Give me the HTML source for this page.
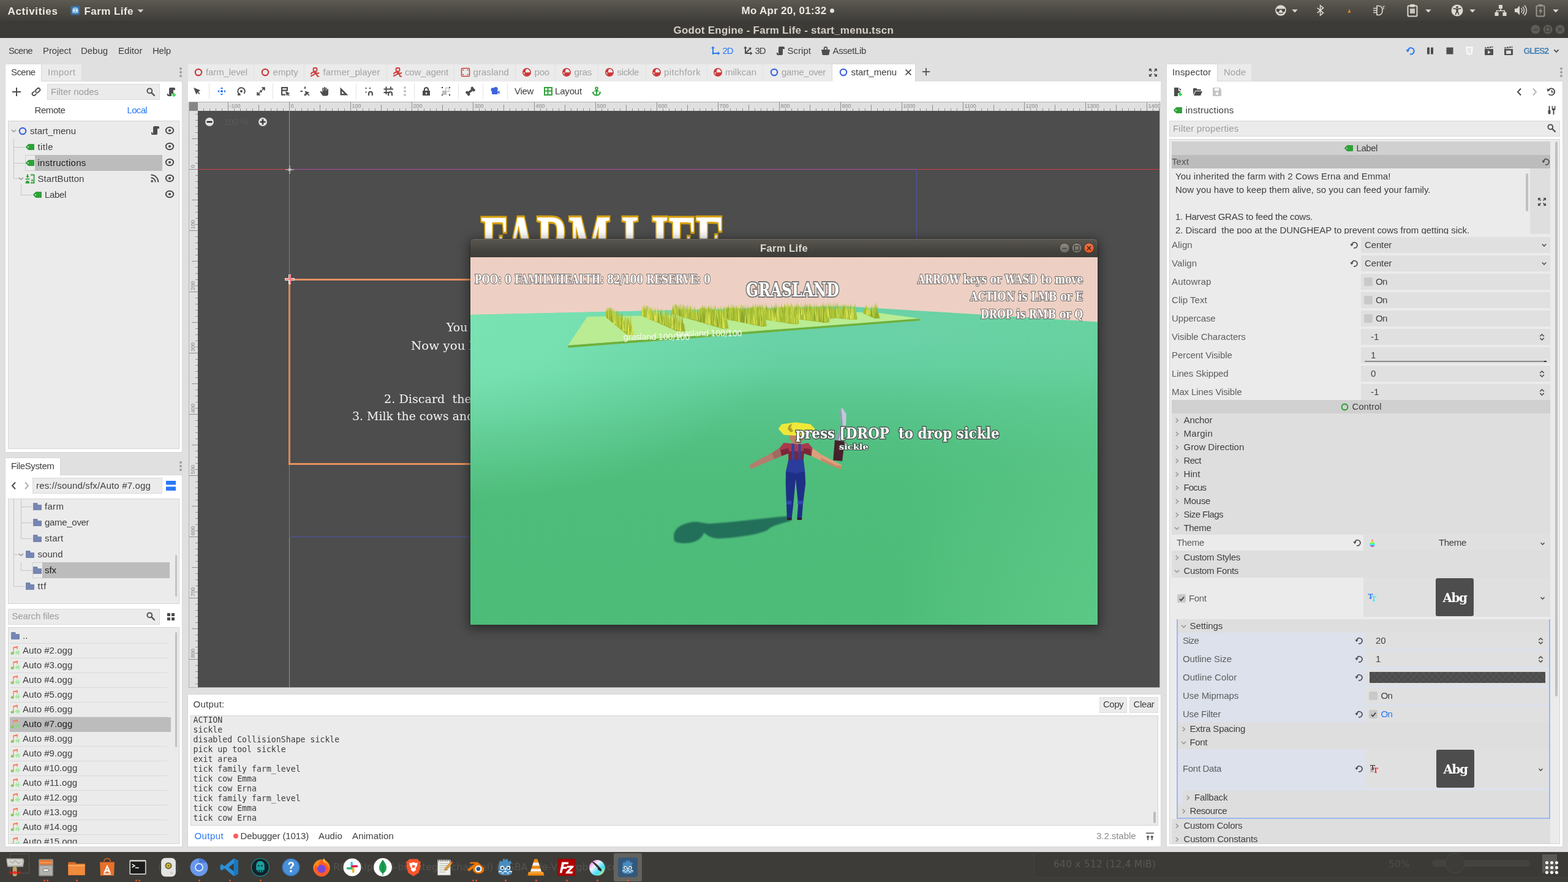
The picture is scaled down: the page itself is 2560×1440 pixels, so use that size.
<!DOCTYPE html>
<html lang="en"><head><meta charset="utf-8"><title>Godot Engine - Farm Life - start_menu.tscn</title><style>html,body{margin:0;padding:0}body{width:2560px;height:1440px;overflow:hidden;position:relative;background:#e0e0e0;font-family:'Liberation Sans',sans-serif;font-size:15px;color:#404040}
div,svg{position:absolute}.t{white-space:pre;line-height:0}</style></head><body><div id="root" style="left:0;top:0;width:2560px;height:1440px;opacity:0.999">
<svg style="left:0;top:0" width="0" height="0"><defs><linearGradient id="ag" x1="0" y1="0" x2="0" y2="1"><stop offset="0" stop-color="#ff6a5a"/><stop offset="0.5" stop-color="#f0b050"/><stop offset="1" stop-color="#4ed860"/></linearGradient></defs></svg>
<div style="left:0px;top:62px;width:2560px;height:1329px;background:#e0e0e0;"></div>
<div class="t" style="left:14px;top:83px;letter-spacing:-0.706px;">Scene</div>
<div class="t" style="left:70px;top:83px;letter-spacing:-0.098px;">Project</div>
<div class="t" style="left:132px;top:83px;letter-spacing:-0.04px;">Debug</div>
<div class="t" style="left:193px;top:83px;letter-spacing:0.053px;">Editor</div>
<div class="t" style="left:249px;top:83px;letter-spacing:-0.212px;">Help</div>
<svg style="left:1160px;top:75px;" width="16" height="16" viewBox="0 0 16 16"><path d="M4 14V3M4 12h10" fill="none" stroke="#2a78f5" stroke-width="2" /><path d="M4 0.5l3 3.5H1zM15.5 12l-3.5 3V9z" fill="#2a78f5" /></svg>
<div class="t" style="left:1179.5px;top:83px;color:#2a78f5;letter-spacing:-1.087px;">2D</div>
<svg style="left:1213px;top:75px;" width="16" height="16" viewBox="0 0 16 16"><path d="M4 13V3M3 12h10M4 12l7-7" fill="none" stroke="#4d4d4d" stroke-width="2" /><path d="M4 0.5l3 3.5H1zM15.5 12l-3.5 3V9zM13.5 2.5l-.5 4.5-4-4z" fill="#4d4d4d" /></svg>
<div class="t" style="left:1232.5px;top:83px;letter-spacing:-1.087px;">3D</div>
<svg style="left:1265.5px;top:75px;" width="16" height="16" viewBox="0 0 16 16"><path d="M6 1v1a1 1 0 0 0-1 1v10H4v-2H2v2a1 1 0 0 0 .5.87A1 1 0 0 0 3 15h7a2 2 0 0 0 2-2V5h3V3a2 2 0 0 0-2-2z" fill="#4d4d4d" /></svg>
<div class="t" style="left:1285.5px;top:83px;letter-spacing:0.026px;">Script</div>
<svg style="left:1339.5px;top:75px;" width="16" height="16" viewBox="0 0 16 16"><path fill-rule="evenodd" d="M8 1a3.2 3.2 0 0 0-3.2 3.2V6H1l1.6 8.2a1 1 0 0 0 1 .8h8.8a1 1 0 0 0 1-.8L15 6h-3.8V4.2A3.2 3.2 0 0 0 8 1zm0 1.8a1.4 1.4 0 0 1 1.4 1.4V6H6.6V4.2A1.4 1.4 0 0 1 8 2.8z" fill="#4d4d4d"/></svg>
<div class="t" style="left:1359.5px;top:83px;letter-spacing:-0.379px;">AssetLib</div>
<svg style="left:2295px;top:75px;" width="16" height="16" viewBox="0 0 16 16"><path d="M3.3 8.4A5.2 5.2 0 1 1 7 13.3" fill="none" stroke="#2a78f5" stroke-width="2"/><path d="M0.2 6.3h6.2l-3.1 4.2z" fill="#2a78f5"/></svg>
<svg style="left:2327px;top:75px;" width="16" height="16" viewBox="0 0 16 16"><path d="M3 2.5h4v11H3zM9 2.5h4v11H9z" fill="#4d4d4d" /></svg>
<svg style="left:2359px;top:75px;" width="16" height="16" viewBox="0 0 16 16"><path d="M2.5 2.5h11v11h-11z" fill="#4d4d4d" /></svg>
<svg style="left:2391px;top:75px;" width="16" height="16" viewBox="0 0 16 16"><path d="M2 1h12l-1.1 12.3L8 15l-4.9-1.7z" fill="#f6f6f6"/><path d="M5 4h6l-.2 1.8H6.8l.1 1.4h3.7l-.4 4.2L8 12l-2.2-.6-.1-1.8h1.5l.1.7.7.2.8-.2.1-1.4H5.4z" fill="#e0e0e0"/></svg>
<svg style="left:2423px;top:75px;" width="16" height="16" viewBox="0 0 16 16"><path d="M1 5h14v9a1 1 0 0 1-1 1H2a1 1 0 0 1-1-1zM1.2 2.2l13-1.6.3 2.2-13 1.6z" fill="#4d4d4d" /><path d="M6 7.5v5.5l5-2.75z" fill="#e0e0e0"/><path d="M3.5 1.9l1.6 1.7M7.5 1.4l1.6 1.7M11.5 0.9l1.6 1.7" stroke="#e0e0e0" stroke-width="1.3"/></svg>
<svg style="left:2455px;top:75px;" width="16" height="16" viewBox="0 0 16 16"><path d="M1 5h14v9a1 1 0 0 1-1 1H2a1 1 0 0 1-1-1zM1.2 2.2l13-1.6.3 2.2-13 1.6z" fill="#4d4d4d" /><rect x="4" y="7.5" width="8" height="5.5" fill="#e0e0e0"/><path d="M3.5 1.9l1.6 1.7M7.5 1.4l1.6 1.7M11.5 0.9l1.6 1.7" stroke="#e0e0e0" stroke-width="1.3"/></svg>
<div class="t" style="left:2487.5px;top:83px;font-size:14px;color:#4b87b8;font-weight:700;letter-spacing:-1.081px;">GLES2</div>
<svg style="left:2533px;top:75px;" width="16" height="16" viewBox="0 0 16 16"><path d="M4.3 6.2l3.7 3.8 3.7-3.8" fill="none" stroke="#4d4d4d" stroke-width="1.8" /></svg>
<div style="left:68px;top:105px;width:65px;height:28px;background:#ebebeb;"></div>
<div style="left:9px;top:105px;width:58px;height:28px;background:#fff;box-shadow:0 0 0 1px #d8d8d8"></div>
<div style="left:9px;top:133px;width:288px;height:605px;background:#fff;box-shadow:0 0 0 1px #d8d8d8"></div>
<div style="left:9px;top:130px;width:58px;height:6px;background:#fff;"></div>
<div class="t" style="left:18px;top:118px;letter-spacing:-0.606px;">Scene</div>
<div class="t" style="left:78px;top:118px;color:#a3a3a3;letter-spacing:0.499px;">Import</div>
<svg style="left:287px;top:110px;" width="16" height="16" viewBox="0 0 16 16"><circle cx="8" cy="2" r="2" fill="#9e9e9e"/><circle cx="8" cy="8" r="2" fill="#9e9e9e"/><circle cx="8" cy="14" r="2" fill="#9e9e9e"/></svg>
<svg style="left:19px;top:142px;" width="16" height="16" viewBox="0 0 16 16"><path d="M7 1v6H1v2h6v6h2V9h6V7H9V1z" fill="#4d4d4d" /></svg>
<svg style="left:51px;top:142px;" width="16" height="16" viewBox="0 0 16 16"><g transform="rotate(-42 8 8)" fill="none"><rect x="0.4" y="5.3" width="8.6" height="5.4" rx="2.7" stroke="#4d4d4d" stroke-width="1.9"/><rect x="7" y="5.3" width="8.6" height="5.4" rx="2.7" stroke="#fff" stroke-width="3.8"/><rect x="7" y="5.3" width="8.6" height="5.4" rx="2.7" stroke="#4d4d4d" stroke-width="1.9"/><path d="M2.5 8h5" stroke="#fff" stroke-width="1.2"/></g></svg>
<div style="left:77px;top:137px;width:184px;height:26px;background:#ebebeb;border:1px solid #dadada;box-sizing:border-box"></div>
<div class="t" style="left:83px;top:150px;color:#9c9c9c;letter-spacing:-0.03px;">Filter nodes</div>
<svg style="left:238px;top:142px;" width="16" height="16" viewBox="0 0 16 16"><circle cx="6.3" cy="6.3" r="3.9" fill="none" stroke="#555" stroke-width="2"/><path d="M9.3 9.3l4.6 4.6" stroke="#555" stroke-width="2.4" stroke-linecap="round"/></svg>
<svg style="left:271px;top:142px;" width="16" height="16" viewBox="0 0 16 16"><path d="M6 1v1a1 1 0 0 0-1 1v10H4v-2H2v2a1 1 0 0 0 .5.87A1 1 0 0 0 3 15h6v-4h3V5h3V3a2 2 0 0 0-2-2z" fill="#4d4d4d" /><path d="M12 10v2h-2v2h2v2h2v-2h2v-2h-2v-2z" fill="#2fd24a" /></svg>
<div class="t" style="left:56.5px;top:180px;letter-spacing:-0.42px;">Remote</div>
<div class="t" style="left:207.5px;top:180px;color:#2a78f5;letter-spacing:-0.671px;">Local</div>
<div style="left:13px;top:197px;width:280px;height:536px;background:#ebebeb;border:1px solid #d4d4d4;box-sizing:border-box"></div>
<div style="left:22px;top:227px;width:1px;height:65px;background:#c6c6c6;"></div>
<div style="left:22px;top:240px;width:19px;height:1px;background:#c6c6c6;"></div>
<div style="left:22px;top:266px;width:19px;height:1px;background:#c6c6c6;"></div>
<div style="left:22px;top:291px;width:10px;height:1px;background:#c6c6c6;"></div>
<div style="left:34px;top:301px;width:1px;height:18px;background:#c6c6c6;"></div>
<div style="left:34px;top:318px;width:19px;height:1px;background:#c6c6c6;"></div>
<svg style="left:15px;top:205.5px;" width="15" height="15" viewBox="0 0 16 16"><path d="M4.3 6.2l3.7 3.8 3.7-3.8" fill="none" stroke="#a2a2a2" stroke-width="1.8" /></svg>
<svg style="left:29px;top:205.5px;" width="16" height="16" viewBox="0 0 16 16"><circle cx="8" cy="8" r="5.2" fill="none" stroke="#3d64dd" stroke-width="2.2"/></svg>
<div class="t" style="left:49px;top:214px;">start_menu</div>
<svg style="left:244.5px;top:205px;" width="16" height="16" viewBox="0 0 16 16"><path d="M6 1v1a1 1 0 0 0-1 1v10H4v-2H2v2a1 1 0 0 0 .5.87A1 1 0 0 0 3 15h7a2 2 0 0 0 2-2V5h3V3a2 2 0 0 0-2-2z" fill="#4d4d4d" /></svg>
<svg style="left:269px;top:205px;" width="16" height="16" viewBox="0 0 16 16"><ellipse cx="8" cy="8" rx="6.2" ry="5.2" fill="none" stroke="#4d4d4d" stroke-width="2"/><circle cx="8" cy="8" r="2.1" fill="#4d4d4d"/></svg>
<svg style="left:41px;top:231.5px;" width="16" height="16" viewBox="0 0 16 16"><path fill-rule="evenodd" d="M6 3a1 1 0 0 0-.7.3l-4 4a1 1 0 0 0 0 1.4l4 4a1 1 0 0 0 .7.3h8a1 1 0 0 0 1-1V4a1 1 0 0 0-1-1zM5 7a1 1 0 0 1 0 2a1 1 0 0 1 0-2z" fill="#2fa139"/></svg>
<div class="t" style="left:61.5px;top:240px;letter-spacing:0.432px;">title</div>
<svg style="left:269px;top:231px;" width="16" height="16" viewBox="0 0 16 16"><ellipse cx="8" cy="8" rx="6.2" ry="5.2" fill="none" stroke="#4d4d4d" stroke-width="2"/><circle cx="8" cy="8" r="2.1" fill="#4d4d4d"/></svg>
<div style="left:41px;top:253px;width:224px;height:25.5px;background:#bcbcbc;"></div>
<div style="left:41px;top:253px;width:16px;height:25.5px;background:#ebebeb;border:1px solid #cfcfcf;border-right:none;box-sizing:border-box"></div>
<svg style="left:41px;top:257.5px;" width="16" height="16" viewBox="0 0 16 16"><path fill-rule="evenodd" d="M6 3a1 1 0 0 0-.7.3l-4 4a1 1 0 0 0 0 1.4l4 4a1 1 0 0 0 .7.3h8a1 1 0 0 0 1-1V4a1 1 0 0 0-1-1zM5 7a1 1 0 0 1 0 2a1 1 0 0 1 0-2z" fill="#2fa139"/></svg>
<div class="t" style="left:61.5px;top:266px;color:#1c1c1c;letter-spacing:0.262px;">instructions</div>
<svg style="left:269px;top:257px;" width="16" height="16" viewBox="0 0 16 16"><ellipse cx="8" cy="8" rx="6.2" ry="5.2" fill="none" stroke="#4d4d4d" stroke-width="2"/><circle cx="8" cy="8" r="2.1" fill="#4d4d4d"/></svg>
<svg style="left:27px;top:283.5px;" width="15" height="15" viewBox="0 0 16 16"><path d="M4.3 6.2l3.7 3.8 3.7-3.8" fill="none" stroke="#a2a2a2" stroke-width="1.8" /></svg>
<svg style="left:41px;top:283.5px;" width="16" height="16" viewBox="0 0 16 16"><path d="M3 0.5h2v3h2l-3 3.2-3-3.2h2zM0.5 7.6h7v1.6h-7zM0.5 15.5c0-3 1.2-4.4 3.4-4.4s3.4 1.4 3.4 4.4z" fill="#2fa139" /><path d="M9 1.5h5.5v13H9" fill="none" stroke="#2fa139" stroke-width="1.8" /><path d="M9.2 11.6l2.3-3.4 2.3 3.4z" fill="#2fa139" /></svg>
<div class="t" style="left:61.5px;top:292px;letter-spacing:0.087px;">StartButton</div>
<svg style="left:244.5px;top:283px;" width="16" height="16" viewBox="0 0 16 16"><circle cx="3.2" cy="12.8" r="1.9" fill="#4d4d4d"/><path d="M1.5 7.2a7.3 7.3 0 0 1 7.3 7.3M1.5 2.6a11.9 11.9 0 0 1 11.9 11.9" fill="none" stroke="#4d4d4d" stroke-width="2" /></svg>
<svg style="left:269px;top:283px;" width="16" height="16" viewBox="0 0 16 16"><ellipse cx="8" cy="8" rx="6.2" ry="5.2" fill="none" stroke="#4d4d4d" stroke-width="2"/><circle cx="8" cy="8" r="2.1" fill="#4d4d4d"/></svg>
<svg style="left:53px;top:309.5px;" width="16" height="16" viewBox="0 0 16 16"><path fill-rule="evenodd" d="M6 3a1 1 0 0 0-.7.3l-4 4a1 1 0 0 0 0 1.4l4 4a1 1 0 0 0 .7.3h8a1 1 0 0 0 1-1V4a1 1 0 0 0-1-1zM5 7a1 1 0 0 1 0 2a1 1 0 0 1 0-2z" fill="#2fa139"/></svg>
<div class="t" style="left:73px;top:318px;letter-spacing:-0.34px;">Label</div>
<svg style="left:269px;top:309px;" width="16" height="16" viewBox="0 0 16 16"><ellipse cx="8" cy="8" rx="6.2" ry="5.2" fill="none" stroke="#4d4d4d" stroke-width="2"/><circle cx="8" cy="8" r="2.1" fill="#4d4d4d"/></svg>
<div style="left:9px;top:748px;width:89px;height:28px;background:#fff;box-shadow:0 0 0 1px #d8d8d8"></div>
<div style="left:9px;top:776px;width:288px;height:606px;background:#fff;box-shadow:0 0 0 1px #d8d8d8"></div>
<div style="left:9px;top:773px;width:89px;height:6px;background:#fff;"></div>
<div class="t" style="left:18px;top:761px;letter-spacing:-0.368px;">FileSystem</div>
<svg style="left:287px;top:753px;" width="16" height="16" viewBox="0 0 16 16"><circle cx="8" cy="2" r="2" fill="#9e9e9e"/><circle cx="8" cy="8" r="2" fill="#9e9e9e"/><circle cx="8" cy="14" r="2" fill="#9e9e9e"/></svg>
<svg style="left:15px;top:785px;" width="16" height="16" viewBox="0 0 16 16"><path d="M10 2.5L5 8l5 5.5" fill="none" stroke="#4d4d4d" stroke-width="2" /></svg>
<svg style="left:34.5px;top:785px;" width="16" height="16" viewBox="0 0 16 16"><path d="M6 2.5l5 5.5-5 5.5" fill="none" stroke="#b0b0b0" stroke-width="2" /></svg>
<div style="left:53px;top:780px;width:211.5px;height:26px;background:#ebebeb;border:1px solid #dadada;box-sizing:border-box"></div>
<div class="t" style="left:59px;top:793px;letter-spacing:0.163px;">res://sound/sfx/Auto #7.ogg</div>
<svg style="left:271px;top:785px;" width="16" height="16" viewBox="0 0 16 16"><path d="M0 0h16v6.5H0zM0 9.5h16V16H0z" fill="#2a78f5" /></svg>
<div style="left:13px;top:814px;width:280px;height:171.5px;background:#ebebeb;border:1px solid #d4d4d4;box-sizing:border-box"></div>
<div style="left:22px;top:815px;width:1px;height:142px;background:#c6c6c6;"></div>
<div style="left:34px;top:815px;width:1px;height:64px;background:#c6c6c6;"></div>
<div style="left:34px;top:827px;width:19px;height:1px;background:#c6c6c6;"></div>
<div style="left:34px;top:853px;width:19px;height:1px;background:#c6c6c6;"></div>
<div style="left:34px;top:879px;width:19px;height:1px;background:#c6c6c6;"></div>
<div style="left:22px;top:905px;width:10px;height:1px;background:#c6c6c6;"></div>
<div style="left:34px;top:918px;width:1px;height:13px;background:#c6c6c6;"></div>
<div style="left:34px;top:931px;width:19px;height:1px;background:#c6c6c6;"></div>
<div style="left:22px;top:957px;width:19px;height:1px;background:#c6c6c6;"></div>
<svg style="left:53px;top:819px;" width="16" height="16" viewBox="0 0 16 16"><path d="M2 2a1 1 0 0 0-1 1v10a1 1 0 0 0 1 1h12a1 1 0 0 0 1-1V6a1 1 0 0 0-1-1H9.5a1 1 0 0 1-1-1V3a1 1 0 0 0-1-1z" fill="#7686b2" /></svg>
<div class="t" style="left:73px;top:827px;letter-spacing:0.301px;">farm</div>
<svg style="left:53px;top:845px;" width="16" height="16" viewBox="0 0 16 16"><path d="M2 2a1 1 0 0 0-1 1v10a1 1 0 0 0 1 1h12a1 1 0 0 0 1-1V6a1 1 0 0 0-1-1H9.5a1 1 0 0 1-1-1V3a1 1 0 0 0-1-1z" fill="#7686b2" /></svg>
<div class="t" style="left:73px;top:853px;letter-spacing:-0.304px;">game_over</div>
<svg style="left:53px;top:871px;" width="16" height="16" viewBox="0 0 16 16"><path d="M2 2a1 1 0 0 0-1 1v10a1 1 0 0 0 1 1h12a1 1 0 0 0 1-1V6a1 1 0 0 0-1-1H9.5a1 1 0 0 1-1-1V3a1 1 0 0 0-1-1z" fill="#7686b2" /></svg>
<div class="t" style="left:73px;top:879px;letter-spacing:0.266px;">start</div>
<svg style="left:27px;top:897.5px;" width="15" height="15" viewBox="0 0 16 16"><path d="M4.3 6.2l3.7 3.8 3.7-3.8" fill="none" stroke="#a2a2a2" stroke-width="1.8" /></svg>
<svg style="left:41px;top:897px;" width="16" height="16" viewBox="0 0 16 16"><path d="M2 2a1 1 0 0 0-1 1v10a1 1 0 0 0 1 1h12a1 1 0 0 0 1-1V6a1 1 0 0 0-1-1H9.5a1 1 0 0 1-1-1V3a1 1 0 0 0-1-1z" fill="#7686b2" /></svg>
<div class="t" style="left:61.5px;top:905px;letter-spacing:0.027px;">sound</div>
<div style="left:53px;top:918px;width:224px;height:26px;background:#bcbcbc;"></div>
<div style="left:53px;top:918px;width:16px;height:26px;background:#ebebeb;border:1px solid #cfcfcf;border-right:none;box-sizing:border-box"></div>
<svg style="left:53px;top:923px;" width="16" height="16" viewBox="0 0 16 16"><path d="M2 2a1 1 0 0 0-1 1v10a1 1 0 0 0 1 1h12a1 1 0 0 0 1-1V6a1 1 0 0 0-1-1H9.5a1 1 0 0 1-1-1V3a1 1 0 0 0-1-1z" fill="#7686b2" /></svg>
<div class="t" style="left:73px;top:931px;color:#1c1c1c;letter-spacing:-0.056px;">sfx</div>
<svg style="left:41px;top:949px;" width="16" height="16" viewBox="0 0 16 16"><path d="M2 2a1 1 0 0 0-1 1v10a1 1 0 0 0 1 1h12a1 1 0 0 0 1-1V6a1 1 0 0 0-1-1H9.5a1 1 0 0 1-1-1V3a1 1 0 0 0-1-1z" fill="#7686b2" /></svg>
<div class="t" style="left:61.5px;top:957px;letter-spacing:0.666px;">ttf</div>
<div style="left:285.5px;top:906px;width:3.5px;height:68px;background:#c2c2c2;border-radius:2px"></div>
<div style="left:13px;top:994px;width:248px;height:26px;background:#ebebeb;border:1px solid #dadada;box-sizing:border-box"></div>
<div class="t" style="left:19.5px;top:1006px;color:#9c9c9c;letter-spacing:-0.155px;">Search files</div>
<svg style="left:238px;top:998px;" width="16" height="16" viewBox="0 0 16 16"><circle cx="6.3" cy="6.3" r="3.9" fill="none" stroke="#555" stroke-width="2"/><path d="M9.3 9.3l4.6 4.6" stroke="#555" stroke-width="2.4" stroke-linecap="round"/></svg>
<svg style="left:271px;top:998.5px;" width="16" height="16" viewBox="0 0 16 16"><path d="M2 2h5v5H2zM9 2h5v5H9zM2 9h5v5H2zM9 9h5v5H9z" fill="#4d4d4d" /></svg>
<div style="left:13px;top:1024px;width:280px;height:353.5px;background:#ebebeb;border:1px solid #d4d4d4;box-sizing:border-box;overflow:hidden">
<svg style="left:3px;top:4.5px;" width="16" height="16" viewBox="0 0 16 16"><path d="M2 2a1 1 0 0 0-1 1v10a1 1 0 0 0 1 1h12a1 1 0 0 0 1-1V6a1 1 0 0 0-1-1H9.5a1 1 0 0 1-1-1V3a1 1 0 0 0-1-1z" fill="#7686b2" /></svg>
<div class="t" style="left:23px;top:13px;">..</div>
<div style="left:3px;top:25px;width:256px;height:1px;background:#d9d9d9;"></div>
<div style="left:3px;top:49px;width:256px;height:1px;background:#d9d9d9;"></div>
<div style="left:3px;top:73px;width:256px;height:1px;background:#d9d9d9;"></div>
<div style="left:3px;top:97px;width:256px;height:1px;background:#d9d9d9;"></div>
<div style="left:3px;top:121px;width:256px;height:1px;background:#d9d9d9;"></div>
<div style="left:3px;top:145px;width:256px;height:1px;background:#d9d9d9;"></div>
<div style="left:3px;top:169px;width:256px;height:1px;background:#d9d9d9;"></div>
<div style="left:3px;top:193px;width:256px;height:1px;background:#d9d9d9;"></div>
<div style="left:3px;top:217px;width:256px;height:1px;background:#d9d9d9;"></div>
<div style="left:3px;top:241px;width:256px;height:1px;background:#d9d9d9;"></div>
<div style="left:3px;top:265px;width:256px;height:1px;background:#d9d9d9;"></div>
<div style="left:3px;top:289px;width:256px;height:1px;background:#d9d9d9;"></div>
<div style="left:3px;top:313px;width:256px;height:1px;background:#d9d9d9;"></div>
<div style="left:3px;top:337px;width:256px;height:1px;background:#d9d9d9;"></div>
<div style="left:2px;top:146px;width:263px;height:24px;background:#bcbcbc;"></div>
<svg style="left:3px;top:28.5px;" width="16" height="16" viewBox="0 0 16 16"><path d="M4.2 2.4L12 0.8v5.4h-1.6V3.4L5.8 4.4v8.2a2.6 2.2 0 1 1-1.6-2z" fill="url(#ag)"/><path d="M8.3 10.8v1.6M10 8.4v6M11.7 9.8v3.4M13.4 7.6v7.6M15.1 10.6v1.8" stroke="#7ce07c" stroke-width="1"/></svg>
<div class="t" style="left:23px;top:37px;letter-spacing:0.037px;">Auto #2.ogg</div>
<svg style="left:3px;top:52.5px;" width="16" height="16" viewBox="0 0 16 16"><path d="M4.2 2.4L12 0.8v5.4h-1.6V3.4L5.8 4.4v8.2a2.6 2.2 0 1 1-1.6-2z" fill="url(#ag)"/><path d="M8.3 10.8v1.6M10 8.4v6M11.7 9.8v3.4M13.4 7.6v7.6M15.1 10.6v1.8" stroke="#7ce07c" stroke-width="1"/></svg>
<div class="t" style="left:23px;top:61px;letter-spacing:0.037px;">Auto #3.ogg</div>
<svg style="left:3px;top:76.5px;" width="16" height="16" viewBox="0 0 16 16"><path d="M4.2 2.4L12 0.8v5.4h-1.6V3.4L5.8 4.4v8.2a2.6 2.2 0 1 1-1.6-2z" fill="url(#ag)"/><path d="M8.3 10.8v1.6M10 8.4v6M11.7 9.8v3.4M13.4 7.6v7.6M15.1 10.6v1.8" stroke="#7ce07c" stroke-width="1"/></svg>
<div class="t" style="left:23px;top:85px;letter-spacing:0.037px;">Auto #4.ogg</div>
<svg style="left:3px;top:100.5px;" width="16" height="16" viewBox="0 0 16 16"><path d="M4.2 2.4L12 0.8v5.4h-1.6V3.4L5.8 4.4v8.2a2.6 2.2 0 1 1-1.6-2z" fill="url(#ag)"/><path d="M8.3 10.8v1.6M10 8.4v6M11.7 9.8v3.4M13.4 7.6v7.6M15.1 10.6v1.8" stroke="#7ce07c" stroke-width="1"/></svg>
<div class="t" style="left:23px;top:109px;letter-spacing:0.037px;">Auto #5.ogg</div>
<svg style="left:3px;top:124.5px;" width="16" height="16" viewBox="0 0 16 16"><path d="M4.2 2.4L12 0.8v5.4h-1.6V3.4L5.8 4.4v8.2a2.6 2.2 0 1 1-1.6-2z" fill="url(#ag)"/><path d="M8.3 10.8v1.6M10 8.4v6M11.7 9.8v3.4M13.4 7.6v7.6M15.1 10.6v1.8" stroke="#7ce07c" stroke-width="1"/></svg>
<div class="t" style="left:23px;top:133px;letter-spacing:0.037px;">Auto #6.ogg</div>
<svg style="left:3px;top:148.5px;" width="16" height="16" viewBox="0 0 16 16"><path d="M4.2 2.4L12 0.8v5.4h-1.6V3.4L5.8 4.4v8.2a2.6 2.2 0 1 1-1.6-2z" fill="url(#ag)"/><path d="M8.3 10.8v1.6M10 8.4v6M11.7 9.8v3.4M13.4 7.6v7.6M15.1 10.6v1.8" stroke="#7ce07c" stroke-width="1"/></svg>
<div class="t" style="left:23px;top:157px;color:#1c1c1c;letter-spacing:0.037px;">Auto #7.ogg</div>
<svg style="left:3px;top:172.5px;" width="16" height="16" viewBox="0 0 16 16"><path d="M4.2 2.4L12 0.8v5.4h-1.6V3.4L5.8 4.4v8.2a2.6 2.2 0 1 1-1.6-2z" fill="url(#ag)"/><path d="M8.3 10.8v1.6M10 8.4v6M11.7 9.8v3.4M13.4 7.6v7.6M15.1 10.6v1.8" stroke="#7ce07c" stroke-width="1"/></svg>
<div class="t" style="left:23px;top:181px;letter-spacing:0.037px;">Auto #8.ogg</div>
<svg style="left:3px;top:196.5px;" width="16" height="16" viewBox="0 0 16 16"><path d="M4.2 2.4L12 0.8v5.4h-1.6V3.4L5.8 4.4v8.2a2.6 2.2 0 1 1-1.6-2z" fill="url(#ag)"/><path d="M8.3 10.8v1.6M10 8.4v6M11.7 9.8v3.4M13.4 7.6v7.6M15.1 10.6v1.8" stroke="#7ce07c" stroke-width="1"/></svg>
<div class="t" style="left:23px;top:205px;letter-spacing:0.037px;">Auto #9.ogg</div>
<svg style="left:3px;top:220.5px;" width="16" height="16" viewBox="0 0 16 16"><path d="M4.2 2.4L12 0.8v5.4h-1.6V3.4L5.8 4.4v8.2a2.6 2.2 0 1 1-1.6-2z" fill="url(#ag)"/><path d="M8.3 10.8v1.6M10 8.4v6M11.7 9.8v3.4M13.4 7.6v7.6M15.1 10.6v1.8" stroke="#7ce07c" stroke-width="1"/></svg>
<div class="t" style="left:23px;top:229px;letter-spacing:0.005px;">Auto #10.ogg</div>
<svg style="left:3px;top:244.5px;" width="16" height="16" viewBox="0 0 16 16"><path d="M4.2 2.4L12 0.8v5.4h-1.6V3.4L5.8 4.4v8.2a2.6 2.2 0 1 1-1.6-2z" fill="url(#ag)"/><path d="M8.3 10.8v1.6M10 8.4v6M11.7 9.8v3.4M13.4 7.6v7.6M15.1 10.6v1.8" stroke="#7ce07c" stroke-width="1"/></svg>
<div class="t" style="left:23px;top:253px;letter-spacing:0.098px;">Auto #11.ogg</div>
<svg style="left:3px;top:268.5px;" width="16" height="16" viewBox="0 0 16 16"><path d="M4.2 2.4L12 0.8v5.4h-1.6V3.4L5.8 4.4v8.2a2.6 2.2 0 1 1-1.6-2z" fill="url(#ag)"/><path d="M8.3 10.8v1.6M10 8.4v6M11.7 9.8v3.4M13.4 7.6v7.6M15.1 10.6v1.8" stroke="#7ce07c" stroke-width="1"/></svg>
<div class="t" style="left:23px;top:277px;letter-spacing:0.005px;">Auto #12.ogg</div>
<svg style="left:3px;top:292.5px;" width="16" height="16" viewBox="0 0 16 16"><path d="M4.2 2.4L12 0.8v5.4h-1.6V3.4L5.8 4.4v8.2a2.6 2.2 0 1 1-1.6-2z" fill="url(#ag)"/><path d="M8.3 10.8v1.6M10 8.4v6M11.7 9.8v3.4M13.4 7.6v7.6M15.1 10.6v1.8" stroke="#7ce07c" stroke-width="1"/></svg>
<div class="t" style="left:23px;top:301px;letter-spacing:0.005px;">Auto #13.ogg</div>
<svg style="left:3px;top:316.5px;" width="16" height="16" viewBox="0 0 16 16"><path d="M4.2 2.4L12 0.8v5.4h-1.6V3.4L5.8 4.4v8.2a2.6 2.2 0 1 1-1.6-2z" fill="url(#ag)"/><path d="M8.3 10.8v1.6M10 8.4v6M11.7 9.8v3.4M13.4 7.6v7.6M15.1 10.6v1.8" stroke="#7ce07c" stroke-width="1"/></svg>
<div class="t" style="left:23px;top:325px;letter-spacing:0.005px;">Auto #14.ogg</div>
<svg style="left:3px;top:340.5px;" width="16" height="16" viewBox="0 0 16 16"><path d="M4.2 2.4L12 0.8v5.4h-1.6V3.4L5.8 4.4v8.2a2.6 2.2 0 1 1-1.6-2z" fill="url(#ag)"/><path d="M8.3 10.8v1.6M10 8.4v6M11.7 9.8v3.4M13.4 7.6v7.6M15.1 10.6v1.8" stroke="#7ce07c" stroke-width="1"/></svg>
<div class="t" style="left:23px;top:349px;letter-spacing:0.005px;">Auto #15.ogg</div>
<div style="left:271.5px;top:7px;width:3.5px;height:188px;background:#bfbfbf;border-radius:2px"></div>
</div>
<div style="left:307px;top:105px;width:107px;height:28px;background:#ebebeb;"></div>
<svg style="left:316px;top:110px;" width="16" height="16" viewBox="0 0 16 16"><circle cx="8" cy="8" r="5.2" fill="none" stroke="#cd3838" stroke-width="2.2"/></svg>
<div class="t" style="left:336px;top:118px;color:#a3a3a3;letter-spacing:-0.119px;">farm_level</div>
<div style="left:415px;top:105px;width:81px;height:28px;background:#ebebeb;"></div>
<svg style="left:425px;top:110px;" width="16" height="16" viewBox="0 0 16 16"><circle cx="8" cy="8" r="5.2" fill="none" stroke="#cd3838" stroke-width="2.2"/></svg>
<div class="t" style="left:445.5px;top:118px;color:#a3a3a3;letter-spacing:0.131px;">empty</div>
<div style="left:497px;top:105px;width:134px;height:28px;background:#ebebeb;"></div>
<svg style="left:506px;top:110px;" width="16" height="16" viewBox="0 0 16 16"><rect x="5.6" y="1" width="5.8" height="5.4" rx="1.3" fill="none" stroke="#cd3838" stroke-width="1.9"/><path d="M8.3 6.6v3.6M8 7.8L3.4 8.4 1.8 10.6M8.6 7.8l3 2 2.8-.600M8.3 10.2L5.4 12.4l-3.6 1.8M8.3 10.2l3.2 1.8.600 2.6h2.4" fill="none" stroke="#cd3838" stroke-width="1.9" stroke-linecap="round" stroke-linejoin="round"/></svg>
<div class="t" style="left:527.5px;top:118px;color:#a3a3a3;letter-spacing:0.036px;">farmer_player</div>
<div style="left:632px;top:105px;width:109px;height:28px;background:#ebebeb;"></div>
<svg style="left:641px;top:110px;" width="16" height="16" viewBox="0 0 16 16"><rect x="5.6" y="1" width="5.8" height="5.4" rx="1.3" fill="none" stroke="#cd3838" stroke-width="1.9"/><path d="M8.3 6.6v3.6M8 7.8L3.4 8.4 1.8 10.6M8.6 7.8l3 2 2.8-.600M8.3 10.2L5.4 12.4l-3.6 1.8M8.3 10.2l3.2 1.8.600 2.6h2.4" fill="none" stroke="#cd3838" stroke-width="1.9" stroke-linecap="round" stroke-linejoin="round"/></svg>
<div class="t" style="left:661px;top:118px;color:#a3a3a3;letter-spacing:-0.172px;">cow_agent</div>
<div style="left:742px;top:105px;width:99px;height:28px;background:#ebebeb;"></div>
<svg style="left:752px;top:110px;" width="16" height="16" viewBox="0 0 16 16"><rect x="1.5" y="1.5" width="13" height="13" rx="1.6" fill="none" stroke="#cd3838" stroke-width="1.5"/><path d="M3.5 3.5h1.8v1.8H3.5zM10.7 3.5h1.8v1.8h-1.8zM3.5 10.7h1.8v1.8H3.5zM10.7 10.7h1.8v1.8h-1.8z" fill="#cd3838" /></svg>
<div class="t" style="left:772.5px;top:118px;color:#a3a3a3;letter-spacing:0.121px;">grasland</div>
<div style="left:842px;top:105px;width:64px;height:28px;background:#ebebeb;"></div>
<svg style="left:852px;top:110px;" width="16" height="16" viewBox="0 0 16 16"><circle cx="8" cy="8" r="6.2" fill="none" stroke="#cd3838" stroke-width="1.6"/><path d="M8.5 1.8A6.2 6.2 0 0 0 1.8 8H6C5.6 5.6 6.6 3.2 8.5 1.8zM4.2 8.2H14.2A6.2 6.2 0 0 1 6 13.9C4.6 12.4 4 10.2 4.2 8.2z" fill="#cd3838" /></svg>
<div class="t" style="left:872.5px;top:118px;color:#a3a3a3;letter-spacing:-0.175px;">poo</div>
<div style="left:907px;top:105px;width:69px;height:28px;background:#ebebeb;"></div>
<svg style="left:917px;top:110px;" width="16" height="16" viewBox="0 0 16 16"><circle cx="8" cy="8" r="6.2" fill="none" stroke="#cd3838" stroke-width="1.6"/><path d="M8.5 1.8A6.2 6.2 0 0 0 1.8 8H6C5.6 5.6 6.6 3.2 8.5 1.8zM4.2 8.2H14.2A6.2 6.2 0 0 1 6 13.9C4.6 12.4 4 10.2 4.2 8.2z" fill="#cd3838" /></svg>
<div class="t" style="left:937.5px;top:118px;color:#a3a3a3;letter-spacing:-0.169px;">gras</div>
<div style="left:977px;top:105px;width:77px;height:28px;background:#ebebeb;"></div>
<svg style="left:987px;top:110px;" width="16" height="16" viewBox="0 0 16 16"><circle cx="8" cy="8" r="6.2" fill="none" stroke="#cd3838" stroke-width="1.6"/><path d="M8.5 1.8A6.2 6.2 0 0 0 1.8 8H6C5.6 5.6 6.6 3.2 8.5 1.8zM4.2 8.2H14.2A6.2 6.2 0 0 1 6 13.9C4.6 12.4 4 10.2 4.2 8.2z" fill="#cd3838" /></svg>
<div class="t" style="left:1007.5px;top:118px;color:#a3a3a3;letter-spacing:-0.335px;">sickle</div>
<div style="left:1055px;top:105px;width:99px;height:28px;background:#ebebeb;"></div>
<svg style="left:1064px;top:110px;" width="16" height="16" viewBox="0 0 16 16"><circle cx="8" cy="8" r="6.2" fill="none" stroke="#cd3838" stroke-width="1.6"/><path d="M8.5 1.8A6.2 6.2 0 0 0 1.8 8H6C5.6 5.6 6.6 3.2 8.5 1.8zM4.2 8.2H14.2A6.2 6.2 0 0 1 6 13.9C4.6 12.4 4 10.2 4.2 8.2z" fill="#cd3838" /></svg>
<div class="t" style="left:1084px;top:118px;color:#a3a3a3;letter-spacing:0.368px;">pitchfork</div>
<div style="left:1155px;top:105px;width:90px;height:28px;background:#ebebeb;"></div>
<svg style="left:1164px;top:110px;" width="16" height="16" viewBox="0 0 16 16"><circle cx="8" cy="8" r="6.2" fill="none" stroke="#cd3838" stroke-width="1.6"/><path d="M8.5 1.8A6.2 6.2 0 0 0 1.8 8H6C5.6 5.6 6.6 3.2 8.5 1.8zM4.2 8.2H14.2A6.2 6.2 0 0 1 6 13.9C4.6 12.4 4 10.2 4.2 8.2z" fill="#cd3838" /></svg>
<div class="t" style="left:1184px;top:118px;color:#a3a3a3;letter-spacing:0.022px;">milkcan</div>
<div style="left:1246px;top:105px;width:112.5px;height:28px;background:#ebebeb;"></div>
<svg style="left:1256px;top:110px;" width="16" height="16" viewBox="0 0 16 16"><circle cx="8" cy="8" r="5.2" fill="none" stroke="#3d64dd" stroke-width="2.2"/></svg>
<div class="t" style="left:1276px;top:118px;color:#a3a3a3;letter-spacing:-0.337px;">game_over</div>
<div style="left:1359px;top:105px;width:135px;height:28px;background:#fff;box-shadow:0 0 0 1px #d8d8d8"></div>
<div style="left:1359px;top:130px;width:135px;height:6px;background:#fff;"></div>
<svg style="left:1369px;top:110px;" width="16" height="16" viewBox="0 0 16 16"><circle cx="8" cy="8" r="5.2" fill="none" stroke="#3d64dd" stroke-width="2.2"/></svg>
<div class="t" style="left:1389.5px;top:118px;letter-spacing:-0.053px;">start_menu</div>
<svg style="left:1476px;top:111px;" width="14" height="14" viewBox="0 0 16 16"><path d="M3 3l10 10M13 3L3 13" fill="none" stroke="#4d4d4d" stroke-width="2" /></svg>
<svg style="left:1505px;top:110px;" width="14" height="14" viewBox="0 0 16 16"><path d="M7 1v6H1v2h6v6h2V9h6V7H9V1z" fill="#4d4d4d" /></svg>
<svg style="left:1874.5px;top:110.5px;" width="15" height="15" viewBox="0 0 16 16"><path d="M1 1h5L4.2 2.8 6.5 5 5 6.5 2.8 4.2 1 6zM15 1v5l-1.8-1.8L11 6.5 9.5 5l2.3-2.2L10 1zM1 15v-5l1.8 1.8L5 9.5 6.5 11l-2.3 2.2L6 15zM15 15h-5l1.8-1.8L9.5 11 11 9.5l2.2 2.3L15 10z" fill="#4d4d4d" /></svg>
<div style="left:307px;top:133px;width:1588px;height:33px;background:#fff;"></div>
<svg style="left:314px;top:141px;" width="16" height="16" viewBox="0 0 16 16"><path d="M2 2L13.2 6.6 9.7 8.7 12.5 11.9 11.1 13.1 8.3 10.1 6.5 13.6z" fill="#4d4d4d" /></svg>
<svg style="left:354px;top:141px;" width="16" height="16" viewBox="0 0 16 16"><path d="M8 1.2l2.6 2.9H5.4zM8 14.8l-2.6-2.9h5.2zM1.2 8l2.9-2.6v5.2zM14.8 8l-2.9 2.6V5.4z" fill="#2a78f5" /><circle cx="8" cy="8" r="2.1" fill="#2a78f5"/></svg>
<svg style="left:386px;top:141px;" width="16" height="16" viewBox="0 0 16 16"><path d="M4.76 12.8A5.8 5.8 0 1 1 12.3 11.9" fill="none" stroke="#4d4d4d" stroke-width="2"/><path d="M2 12.4V14.8H6.9L5.9 10.9z" fill="#4d4d4d"/><circle cx="8" cy="8" r="2" fill="#4d4d4d"/></svg>
<svg style="left:418px;top:141px;" width="16" height="16" viewBox="0 0 16 16"><path d="M9.4 1.2h5.4v5.4h-2V4.6L10.6 6.8 9.2 5.4 11.4 3.2H9.4zM6.6 14.8H1.2V9.4h2v2L5.4 9.2l1.4 1.4-2.2 2.2h2z" fill="#4d4d4d" /><circle cx="8" cy="8" r="1.9" fill="#4d4d4d"/></svg>
<svg style="left:458px;top:141px;" width="16" height="16" viewBox="0 0 16 16"><path fill-rule="evenodd" d="M1 1h11v6.8H3.2v4.8h5v2.2H1zM3.2 3.2v2.4h6.6V3.2zM7.8 8l7.8 3.2-2.8 1.1 2 2.3-1.2 1-2-2.2-1.2 2.6z" fill="#4d4d4d"/></svg>
<svg style="left:490px;top:141px;" width="16" height="16" viewBox="0 0 16 16"><path d="M7 0.5h2v3.5H7zM0.5 7h3.5v2H0.5zM7 12h2v3.5H7zM7.6 7.6l2.4 7.8 1.4-2.8 2.8 2.8 1.2-1.2-2.8-2.8 2.8-1.4z" fill="#4d4d4d" /></svg>
<svg style="left:522px;top:141px;" width="16" height="16" viewBox="0 0 16 16"><path d="M8 1a1 1 0 0 0-1 1v5H6.4V3a1 1 0 0 0-2 0v6.6L2.6 8.2a1.1 1.1 0 0 0-1.7 1.4l3 4.4c.7 1 1.8 1.5 3 1.5h3.6A3.5 3.5 0 0 0 14 12V5a1 1 0 0 0-2 0v2h-.6V3a1 1 0 0 0-2 0v4H9V2a1 1 0 0 0-1-1z" fill="#4d4d4d" /></svg>
<svg style="left:554px;top:141px;" width="16" height="16" viewBox="0 0 16 16"><path fill-rule="evenodd" d="M1.5 1.5v13h13zM4 8l4 4H4z" fill="#4d4d4d"/></svg>
<svg style="left:594px;top:141px;" width="16" height="16" viewBox="0 0 16 16"><path d="M2.5 2h2v2h-2zM9 2h2v2H9zM2.5 8.5h2v2h-2z" fill="#4d4d4d" /><path d="M8 15v-3.3a2.9 2.9 0 0 1 5.8 0V15" fill="none" stroke="#4d4d4d" stroke-width="2.1" /></svg>
<svg style="left:626px;top:141px;" width="16" height="16" viewBox="0 0 16 16"><path d="M3.5 0.5h2v3h5.5v-3h2v3h3v2H0.5v-2h3zM3.5 5.5h2v3.5H8v2H5.5v2h-2v-2h-3V9h3z" fill="#4d4d4d" /><path d="M8.2 15.3v-3.3a2.9 2.9 0 0 1 5.8 0v3.3" fill="none" stroke="#4d4d4d" stroke-width="2.1" /></svg>
<svg style="left:653px;top:141px;" width="16" height="16" viewBox="0 0 16 16"><circle cx="8" cy="2" r="2" fill="#c2c2c2"/><circle cx="8" cy="8" r="2" fill="#c2c2c2"/><circle cx="8" cy="14" r="2" fill="#c2c2c2"/></svg>
<svg style="left:688px;top:141px;" width="16" height="16" viewBox="0 0 16 16"><path fill-rule="evenodd" d="M8 1a4.2 4.2 0 0 0-4.2 4.2V7H2v8h12V7h-1.8V5.2A4.2 4.2 0 0 0 8 1zm0 2.2a2 2 0 0 1 2 2V7H6V5.2a2 2 0 0 1 2-2zM7 10h2v3H7z" fill="#4d4d4d"/></svg>
<svg style="left:720px;top:141px;" width="16" height="16" viewBox="0 0 16 16"><path d="M1 1h2v2H1zM13 1h2v2h-2zM1 13h2v2H1zM13 13h2v2h-2z" fill="#333" /><rect x="2" y="7" width="7" height="7" fill="#bdbdbd"/><path d="M7 2h7v7h-5V7H7z" fill="#bdbdbd"/><path d="M8.2 3.2h4.6v4.6h-3.6v-1H8.2z" fill="#fff"/></svg>
<svg style="left:760px;top:141px;" width="16" height="16" viewBox="0 0 16 16"><g transform="rotate(-40 8 8)" fill="#4d4d4d"><rect x="3" y="6.2" width="10" height="3.6"/><circle cx="2.6" cy="6" r="2.3"/><circle cx="2.6" cy="10" r="2.3"/><circle cx="13.4" cy="6" r="2.3"/><circle cx="13.4" cy="10" r="2.3"/></g></svg>
<svg style="left:799.5px;top:141px;" width="16" height="16" viewBox="0 0 16 16"><circle cx="4.6" cy="5.4" r="3.1" fill="#3d64dd"/><circle cx="9.4" cy="4.2" r="3.3" fill="#3d64dd"/><rect x="3" y="6" width="9.6" height="7" rx="1.5" fill="#3d64dd"/><path d="M12 9.5l3.5-2.7v6z" fill="#3d64dd" /></svg>
<div style="left:341px;top:136px;width:1px;height:26px;background:#e3e3e3;"></div>
<div style="left:445px;top:136px;width:1px;height:26px;background:#e3e3e3;"></div>
<div style="left:581px;top:136px;width:1px;height:26px;background:#e3e3e3;"></div>
<div style="left:675.5px;top:136px;width:1px;height:26px;background:#e3e3e3;"></div>
<div style="left:747.5px;top:136px;width:1px;height:26px;background:#e3e3e3;"></div>
<div style="left:787.5px;top:136px;width:1px;height:26px;background:#e3e3e3;"></div>
<div style="left:827.5px;top:136px;width:1px;height:26px;background:#e3e3e3;"></div>
<div class="t" style="left:840px;top:149px;letter-spacing:-0.31px;">View</div>
<svg style="left:887px;top:141px;" width="16" height="16" viewBox="0 0 16 16"><path fill-rule="evenodd" d="M1 1h14v14H1zM3 3v3.5h3.5V3zM8.5 3v3.5H13V3zM3 8.5V13h3.5V8.5zM8.5 8.5V13H13V8.5z" fill="#2fa139"/></svg>
<div class="t" style="left:906px;top:149px;letter-spacing:-0.172px;">Layout</div>
<svg style="left:966px;top:141px;" width="16" height="16" viewBox="0 0 16 16"><circle cx="8" cy="3.2" r="1.9" fill="none" stroke="#2fa139" stroke-width="1.7"/><path d="M8 5v9.5M4.5 7.5h7M2 9.5c.5 3 2.8 5 6 5s5.5-2 6-5" fill="none" stroke="#2fa139" stroke-width="1.9" /><path d="M0.6 11.5l1.6-3.6 2.2 2.6zM15.4 11.5l-1.6-3.6-2.2 2.6z" fill="#2fa139" /></svg>
<div id="viewport" style="left:308px;top:166px;width:1586px;height:957px;background:#4d4d4d;border:1px solid #b2b2b2;box-sizing:border-box;overflow:hidden">
<div style="left:14px;top:108.5px;width:149px;height:1.6px;background:#cc3f4e;"></div>
<div style="left:163px;top:108.5px;width:1024px;height:1.6px;background:#a650a4;"></div>
<div style="left:1187px;top:108.5px;width:400px;height:1.6px;background:#d13a48;"></div>
<div style="left:163px;top:14px;width:1px;height:95px;background:#8fb321;"></div>
<div style="left:163px;top:109px;width:1px;height:600px;background:#6b8f6b;"></div>
<div style="left:163px;top:709px;width:1px;height:250px;background:#8fb321;"></div>
<div style="left:1187px;top:109px;width:1px;height:600px;background:#5254a8;"></div>
<div style="left:163px;top:709px;width:1024px;height:1px;background:#5254a8;"></div>
<div class="t" style="left:475px;top:184.5px;font-family:'Liberation Serif',serif;font-weight:700;font-size:100px;line-height:100px;color:#fff;-webkit-text-stroke:5px #d7a20c;paint-order:stroke fill;transform-origin:0 0;transform:translate(1px,-20px) scale(0.7245,1.3)">FARM LIFE</div>
<div class="t" style="left:420px;top:367px;font-size:19px;color:#f4f4f4;font-family:'DejaVu Serif',serif;transform-origin:0 50%;transform:scaleX(0.9982);">You inherited the farm with 2 Cows Erna and Emma!</div>
<div class="t" style="left:362px;top:397px;font-size:19px;color:#f4f4f4;font-family:'DejaVu Serif',serif;transform-origin:0 50%;transform:scaleX(1.0427);">Now you have to keep them alive, so you can feed your family.</div>
<div class="t" style="left:503px;top:455px;font-size:19px;color:#f4f4f4;font-family:'DejaVu Serif',serif;transform-origin:0 50%;transform:scaleX(1.0332);">1. Harvest GRAS to feed the cows.</div>
<div class="t" style="left:318px;top:483.5px;font-size:19px;color:#f4f4f4;font-family:'DejaVu Serif',serif;transform-origin:0 50%;transform:scaleX(1.0093);">2. Discard  the poo at the DUNGHEAP to prevent cows from getting sick.</div>
<div class="t" style="left:266px;top:512px;font-size:19px;color:#f4f4f4;font-family:'DejaVu Serif',serif;transform-origin:0 50%;transform:scaleX(0.9944);">3. Milk the cows and bring the MILK to the FARMHOUSE so your family can drink it.</div>
<div style="left:163px;top:288px;width:1030px;height:3px;background:#e8915e;"></div>
<div style="left:163px;top:589px;width:1030px;height:3px;background:#e8915e;"></div>
<div style="left:162px;top:288px;width:3px;height:304px;background:#e8915e;"></div>
<div style="left:163px;top:291px;width:1px;height:298px;background:#7f9a6c;"></div>
<div style="left:156px;top:287px;width:16px;height:4px;background:#f2ecea;"></div>
<div style="left:162px;top:281px;width:4px;height:16px;background:#f2ecea;"></div>
<div style="left:157px;top:288px;width:14px;height:2px;background:#ff7b7b;"></div>
<div style="left:164px;top:282px;width:1.5px;height:14px;background:#ff7b7b;"></div>
<div style="left:163px;top:281px;width:1px;height:7px;background:#7fa07a;"></div>
<svg style="left:156.5px;top:102.5px" width="14" height="14" viewBox="0 0 14 14"><path d="M7 0v14M0 7h14" stroke="#cfcfcf" stroke-width="1"/><circle cx="7" cy="7" r="2.6" fill="#bdbdbd" opacity="0.9"/></svg>
<svg style="left:25px;top:23.5px;" width="16" height="16" viewBox="0 0 16 16"><circle cx="8" cy="8" r="7.4" fill="#e3e3e3" stroke="#383838" stroke-width="0.8"/><rect x="3.5" y="6.7" width="9" height="2.6" fill="#222"/></svg>
<svg style="left:112px;top:23.5px;" width="16" height="16" viewBox="0 0 16 16"><circle cx="8" cy="8" r="7.4" fill="#e3e3e3" stroke="#383838" stroke-width="0.8"/><path d="M6.7 3.5h2.6v3.2h3.2v2.6H9.3v3.2H6.7V9.3H3.5V6.7h3.2z" fill="#3a3a3a"/></svg>
<div class="t" style="left:56.5px;top:32px;color:#5a5a5a;letter-spacing:-0.806px;">100 %</div>
<div style="left:0px;top:0px;width:1600px;height:14px;background:#e0e0e0;"></div>
<div style="left:0px;top:14px;width:14px;height:960px;background:#e0e0e0;"></div>
<div style="left:0px;top:0px;width:14px;height:14px;background:#858585;"></div>
<div style="left:23px;top:10px;width:1px;height:4px;background:#8e8e8e;"></div>
<div style="left:33px;top:10px;width:1px;height:4px;background:#8e8e8e;"></div>
<div style="left:43px;top:10px;width:1px;height:4px;background:#8e8e8e;"></div>
<div style="left:53px;top:10px;width:1px;height:4px;background:#8e8e8e;"></div>
<div style="left:63px;top:0px;width:1px;height:14px;background:#8e8e8e;"></div>
<div style="left:73px;top:10px;width:1px;height:4px;background:#8e8e8e;"></div>
<div style="left:83px;top:10px;width:1px;height:4px;background:#8e8e8e;"></div>
<div style="left:93px;top:10px;width:1px;height:4px;background:#8e8e8e;"></div>
<div style="left:103px;top:10px;width:1px;height:4px;background:#8e8e8e;"></div>
<div style="left:113px;top:4px;width:1px;height:10px;background:#8e8e8e;"></div>
<div style="left:123px;top:10px;width:1px;height:4px;background:#8e8e8e;"></div>
<div style="left:133px;top:10px;width:1px;height:4px;background:#8e8e8e;"></div>
<div style="left:143px;top:10px;width:1px;height:4px;background:#8e8e8e;"></div>
<div style="left:153px;top:10px;width:1px;height:4px;background:#8e8e8e;"></div>
<div style="left:163px;top:0px;width:1px;height:14px;background:#8e8e8e;"></div>
<div style="left:173px;top:10px;width:1px;height:4px;background:#8e8e8e;"></div>
<div style="left:183px;top:10px;width:1px;height:4px;background:#8e8e8e;"></div>
<div style="left:193px;top:10px;width:1px;height:4px;background:#8e8e8e;"></div>
<div style="left:203px;top:10px;width:1px;height:4px;background:#8e8e8e;"></div>
<div style="left:213px;top:4px;width:1px;height:10px;background:#8e8e8e;"></div>
<div style="left:223px;top:10px;width:1px;height:4px;background:#8e8e8e;"></div>
<div style="left:233px;top:10px;width:1px;height:4px;background:#8e8e8e;"></div>
<div style="left:243px;top:10px;width:1px;height:4px;background:#8e8e8e;"></div>
<div style="left:253px;top:10px;width:1px;height:4px;background:#8e8e8e;"></div>
<div style="left:263px;top:0px;width:1px;height:14px;background:#8e8e8e;"></div>
<div style="left:273px;top:10px;width:1px;height:4px;background:#8e8e8e;"></div>
<div style="left:283px;top:10px;width:1px;height:4px;background:#8e8e8e;"></div>
<div style="left:293px;top:10px;width:1px;height:4px;background:#8e8e8e;"></div>
<div style="left:303px;top:10px;width:1px;height:4px;background:#8e8e8e;"></div>
<div style="left:313px;top:4px;width:1px;height:10px;background:#8e8e8e;"></div>
<div style="left:323px;top:10px;width:1px;height:4px;background:#8e8e8e;"></div>
<div style="left:333px;top:10px;width:1px;height:4px;background:#8e8e8e;"></div>
<div style="left:343px;top:10px;width:1px;height:4px;background:#8e8e8e;"></div>
<div style="left:353px;top:10px;width:1px;height:4px;background:#8e8e8e;"></div>
<div style="left:363px;top:0px;width:1px;height:14px;background:#8e8e8e;"></div>
<div style="left:373px;top:10px;width:1px;height:4px;background:#8e8e8e;"></div>
<div style="left:383px;top:10px;width:1px;height:4px;background:#8e8e8e;"></div>
<div style="left:393px;top:10px;width:1px;height:4px;background:#8e8e8e;"></div>
<div style="left:403px;top:10px;width:1px;height:4px;background:#8e8e8e;"></div>
<div style="left:413px;top:4px;width:1px;height:10px;background:#8e8e8e;"></div>
<div style="left:423px;top:10px;width:1px;height:4px;background:#8e8e8e;"></div>
<div style="left:433px;top:10px;width:1px;height:4px;background:#8e8e8e;"></div>
<div style="left:443px;top:10px;width:1px;height:4px;background:#8e8e8e;"></div>
<div style="left:453px;top:10px;width:1px;height:4px;background:#8e8e8e;"></div>
<div style="left:463px;top:0px;width:1px;height:14px;background:#8e8e8e;"></div>
<div style="left:473px;top:10px;width:1px;height:4px;background:#8e8e8e;"></div>
<div style="left:483px;top:10px;width:1px;height:4px;background:#8e8e8e;"></div>
<div style="left:493px;top:10px;width:1px;height:4px;background:#8e8e8e;"></div>
<div style="left:503px;top:10px;width:1px;height:4px;background:#8e8e8e;"></div>
<div style="left:513px;top:4px;width:1px;height:10px;background:#8e8e8e;"></div>
<div style="left:523px;top:10px;width:1px;height:4px;background:#8e8e8e;"></div>
<div style="left:533px;top:10px;width:1px;height:4px;background:#8e8e8e;"></div>
<div style="left:543px;top:10px;width:1px;height:4px;background:#8e8e8e;"></div>
<div style="left:553px;top:10px;width:1px;height:4px;background:#8e8e8e;"></div>
<div style="left:563px;top:0px;width:1px;height:14px;background:#8e8e8e;"></div>
<div style="left:573px;top:10px;width:1px;height:4px;background:#8e8e8e;"></div>
<div style="left:583px;top:10px;width:1px;height:4px;background:#8e8e8e;"></div>
<div style="left:593px;top:10px;width:1px;height:4px;background:#8e8e8e;"></div>
<div style="left:603px;top:10px;width:1px;height:4px;background:#8e8e8e;"></div>
<div style="left:613px;top:4px;width:1px;height:10px;background:#8e8e8e;"></div>
<div style="left:623px;top:10px;width:1px;height:4px;background:#8e8e8e;"></div>
<div style="left:633px;top:10px;width:1px;height:4px;background:#8e8e8e;"></div>
<div style="left:643px;top:10px;width:1px;height:4px;background:#8e8e8e;"></div>
<div style="left:653px;top:10px;width:1px;height:4px;background:#8e8e8e;"></div>
<div style="left:663px;top:0px;width:1px;height:14px;background:#8e8e8e;"></div>
<div style="left:673px;top:10px;width:1px;height:4px;background:#8e8e8e;"></div>
<div style="left:683px;top:10px;width:1px;height:4px;background:#8e8e8e;"></div>
<div style="left:693px;top:10px;width:1px;height:4px;background:#8e8e8e;"></div>
<div style="left:703px;top:10px;width:1px;height:4px;background:#8e8e8e;"></div>
<div style="left:713px;top:4px;width:1px;height:10px;background:#8e8e8e;"></div>
<div style="left:723px;top:10px;width:1px;height:4px;background:#8e8e8e;"></div>
<div style="left:733px;top:10px;width:1px;height:4px;background:#8e8e8e;"></div>
<div style="left:743px;top:10px;width:1px;height:4px;background:#8e8e8e;"></div>
<div style="left:753px;top:10px;width:1px;height:4px;background:#8e8e8e;"></div>
<div style="left:763px;top:0px;width:1px;height:14px;background:#8e8e8e;"></div>
<div style="left:773px;top:10px;width:1px;height:4px;background:#8e8e8e;"></div>
<div style="left:783px;top:10px;width:1px;height:4px;background:#8e8e8e;"></div>
<div style="left:793px;top:10px;width:1px;height:4px;background:#8e8e8e;"></div>
<div style="left:803px;top:10px;width:1px;height:4px;background:#8e8e8e;"></div>
<div style="left:813px;top:4px;width:1px;height:10px;background:#8e8e8e;"></div>
<div style="left:823px;top:10px;width:1px;height:4px;background:#8e8e8e;"></div>
<div style="left:833px;top:10px;width:1px;height:4px;background:#8e8e8e;"></div>
<div style="left:843px;top:10px;width:1px;height:4px;background:#8e8e8e;"></div>
<div style="left:853px;top:10px;width:1px;height:4px;background:#8e8e8e;"></div>
<div style="left:863px;top:0px;width:1px;height:14px;background:#8e8e8e;"></div>
<div style="left:873px;top:10px;width:1px;height:4px;background:#8e8e8e;"></div>
<div style="left:883px;top:10px;width:1px;height:4px;background:#8e8e8e;"></div>
<div style="left:893px;top:10px;width:1px;height:4px;background:#8e8e8e;"></div>
<div style="left:903px;top:10px;width:1px;height:4px;background:#8e8e8e;"></div>
<div style="left:913px;top:4px;width:1px;height:10px;background:#8e8e8e;"></div>
<div style="left:923px;top:10px;width:1px;height:4px;background:#8e8e8e;"></div>
<div style="left:933px;top:10px;width:1px;height:4px;background:#8e8e8e;"></div>
<div style="left:943px;top:10px;width:1px;height:4px;background:#8e8e8e;"></div>
<div style="left:953px;top:10px;width:1px;height:4px;background:#8e8e8e;"></div>
<div style="left:963px;top:0px;width:1px;height:14px;background:#8e8e8e;"></div>
<div style="left:973px;top:10px;width:1px;height:4px;background:#8e8e8e;"></div>
<div style="left:983px;top:10px;width:1px;height:4px;background:#8e8e8e;"></div>
<div style="left:993px;top:10px;width:1px;height:4px;background:#8e8e8e;"></div>
<div style="left:1003px;top:10px;width:1px;height:4px;background:#8e8e8e;"></div>
<div style="left:1013px;top:4px;width:1px;height:10px;background:#8e8e8e;"></div>
<div style="left:1023px;top:10px;width:1px;height:4px;background:#8e8e8e;"></div>
<div style="left:1033px;top:10px;width:1px;height:4px;background:#8e8e8e;"></div>
<div style="left:1043px;top:10px;width:1px;height:4px;background:#8e8e8e;"></div>
<div style="left:1053px;top:10px;width:1px;height:4px;background:#8e8e8e;"></div>
<div style="left:1063px;top:0px;width:1px;height:14px;background:#8e8e8e;"></div>
<div style="left:1073px;top:10px;width:1px;height:4px;background:#8e8e8e;"></div>
<div style="left:1083px;top:10px;width:1px;height:4px;background:#8e8e8e;"></div>
<div style="left:1093px;top:10px;width:1px;height:4px;background:#8e8e8e;"></div>
<div style="left:1103px;top:10px;width:1px;height:4px;background:#8e8e8e;"></div>
<div style="left:1113px;top:4px;width:1px;height:10px;background:#8e8e8e;"></div>
<div style="left:1123px;top:10px;width:1px;height:4px;background:#8e8e8e;"></div>
<div style="left:1133px;top:10px;width:1px;height:4px;background:#8e8e8e;"></div>
<div style="left:1143px;top:10px;width:1px;height:4px;background:#8e8e8e;"></div>
<div style="left:1153px;top:10px;width:1px;height:4px;background:#8e8e8e;"></div>
<div style="left:1163px;top:0px;width:1px;height:14px;background:#8e8e8e;"></div>
<div style="left:1173px;top:10px;width:1px;height:4px;background:#8e8e8e;"></div>
<div style="left:1183px;top:10px;width:1px;height:4px;background:#8e8e8e;"></div>
<div style="left:1193px;top:10px;width:1px;height:4px;background:#8e8e8e;"></div>
<div style="left:1203px;top:10px;width:1px;height:4px;background:#8e8e8e;"></div>
<div style="left:1213px;top:4px;width:1px;height:10px;background:#8e8e8e;"></div>
<div style="left:1223px;top:10px;width:1px;height:4px;background:#8e8e8e;"></div>
<div style="left:1233px;top:10px;width:1px;height:4px;background:#8e8e8e;"></div>
<div style="left:1243px;top:10px;width:1px;height:4px;background:#8e8e8e;"></div>
<div style="left:1253px;top:10px;width:1px;height:4px;background:#8e8e8e;"></div>
<div style="left:1263px;top:0px;width:1px;height:14px;background:#8e8e8e;"></div>
<div style="left:1273px;top:10px;width:1px;height:4px;background:#8e8e8e;"></div>
<div style="left:1283px;top:10px;width:1px;height:4px;background:#8e8e8e;"></div>
<div style="left:1293px;top:10px;width:1px;height:4px;background:#8e8e8e;"></div>
<div style="left:1303px;top:10px;width:1px;height:4px;background:#8e8e8e;"></div>
<div style="left:1313px;top:4px;width:1px;height:10px;background:#8e8e8e;"></div>
<div style="left:1323px;top:10px;width:1px;height:4px;background:#8e8e8e;"></div>
<div style="left:1333px;top:10px;width:1px;height:4px;background:#8e8e8e;"></div>
<div style="left:1343px;top:10px;width:1px;height:4px;background:#8e8e8e;"></div>
<div style="left:1353px;top:10px;width:1px;height:4px;background:#8e8e8e;"></div>
<div style="left:1363px;top:0px;width:1px;height:14px;background:#8e8e8e;"></div>
<div style="left:1373px;top:10px;width:1px;height:4px;background:#8e8e8e;"></div>
<div style="left:1383px;top:10px;width:1px;height:4px;background:#8e8e8e;"></div>
<div style="left:1393px;top:10px;width:1px;height:4px;background:#8e8e8e;"></div>
<div style="left:1403px;top:10px;width:1px;height:4px;background:#8e8e8e;"></div>
<div style="left:1413px;top:4px;width:1px;height:10px;background:#8e8e8e;"></div>
<div style="left:1423px;top:10px;width:1px;height:4px;background:#8e8e8e;"></div>
<div style="left:1433px;top:10px;width:1px;height:4px;background:#8e8e8e;"></div>
<div style="left:1443px;top:10px;width:1px;height:4px;background:#8e8e8e;"></div>
<div style="left:1453px;top:10px;width:1px;height:4px;background:#8e8e8e;"></div>
<div style="left:1463px;top:0px;width:1px;height:14px;background:#8e8e8e;"></div>
<div style="left:1473px;top:10px;width:1px;height:4px;background:#8e8e8e;"></div>
<div style="left:1483px;top:10px;width:1px;height:4px;background:#8e8e8e;"></div>
<div style="left:1493px;top:10px;width:1px;height:4px;background:#8e8e8e;"></div>
<div style="left:1503px;top:10px;width:1px;height:4px;background:#8e8e8e;"></div>
<div style="left:1513px;top:4px;width:1px;height:10px;background:#8e8e8e;"></div>
<div style="left:1523px;top:10px;width:1px;height:4px;background:#8e8e8e;"></div>
<div style="left:1533px;top:10px;width:1px;height:4px;background:#8e8e8e;"></div>
<div style="left:1543px;top:10px;width:1px;height:4px;background:#8e8e8e;"></div>
<div style="left:1553px;top:10px;width:1px;height:4px;background:#8e8e8e;"></div>
<div style="left:1563px;top:0px;width:1px;height:14px;background:#8e8e8e;"></div>
<div style="left:1573px;top:10px;width:1px;height:4px;background:#8e8e8e;"></div>
<div style="left:1583px;top:10px;width:1px;height:4px;background:#8e8e8e;"></div>
<div class="t" style="left:65.5px;top:6px;font-size:9px;color:#8a8a8a;">-100</div>
<div class="t" style="left:165.5px;top:6px;font-size:9px;color:#8a8a8a;">0</div>
<div class="t" style="left:265.5px;top:6px;font-size:9px;color:#8a8a8a;">100</div>
<div class="t" style="left:365.5px;top:6px;font-size:9px;color:#8a8a8a;">200</div>
<div class="t" style="left:465.5px;top:6px;font-size:9px;color:#8a8a8a;">300</div>
<div class="t" style="left:565.5px;top:6px;font-size:9px;color:#8a8a8a;">400</div>
<div class="t" style="left:665.5px;top:6px;font-size:9px;color:#8a8a8a;">500</div>
<div class="t" style="left:765.5px;top:6px;font-size:9px;color:#8a8a8a;">600</div>
<div class="t" style="left:865.5px;top:6px;font-size:9px;color:#8a8a8a;">700</div>
<div class="t" style="left:965.5px;top:6px;font-size:9px;color:#8a8a8a;">800</div>
<div class="t" style="left:1065.5px;top:6px;font-size:9px;color:#8a8a8a;">900</div>
<div class="t" style="left:1165.5px;top:6px;font-size:9px;color:#8a8a8a;">1000</div>
<div class="t" style="left:1265.5px;top:6px;font-size:9px;color:#8a8a8a;">1100</div>
<div class="t" style="left:1365.5px;top:6px;font-size:9px;color:#8a8a8a;">1200</div>
<div class="t" style="left:1465.5px;top:6px;font-size:9px;color:#8a8a8a;">1300</div>
<div class="t" style="left:1565.5px;top:6px;font-size:9px;color:#8a8a8a;">1400</div>
<div style="left:10px;top:19px;width:4px;height:1px;background:#8e8e8e;"></div>
<div style="left:10px;top:29px;width:4px;height:1px;background:#8e8e8e;"></div>
<div style="left:10px;top:39px;width:4px;height:1px;background:#8e8e8e;"></div>
<div style="left:10px;top:49px;width:4px;height:1px;background:#8e8e8e;"></div>
<div style="left:4px;top:59px;width:10px;height:1px;background:#8e8e8e;"></div>
<div style="left:10px;top:69px;width:4px;height:1px;background:#8e8e8e;"></div>
<div style="left:10px;top:79px;width:4px;height:1px;background:#8e8e8e;"></div>
<div style="left:10px;top:89px;width:4px;height:1px;background:#8e8e8e;"></div>
<div style="left:10px;top:99px;width:4px;height:1px;background:#8e8e8e;"></div>
<div style="left:0px;top:109px;width:14px;height:1px;background:#8e8e8e;"></div>
<div style="left:10px;top:119px;width:4px;height:1px;background:#8e8e8e;"></div>
<div style="left:10px;top:129px;width:4px;height:1px;background:#8e8e8e;"></div>
<div style="left:10px;top:139px;width:4px;height:1px;background:#8e8e8e;"></div>
<div style="left:10px;top:149px;width:4px;height:1px;background:#8e8e8e;"></div>
<div style="left:4px;top:159px;width:10px;height:1px;background:#8e8e8e;"></div>
<div style="left:10px;top:169px;width:4px;height:1px;background:#8e8e8e;"></div>
<div style="left:10px;top:179px;width:4px;height:1px;background:#8e8e8e;"></div>
<div style="left:10px;top:189px;width:4px;height:1px;background:#8e8e8e;"></div>
<div style="left:10px;top:199px;width:4px;height:1px;background:#8e8e8e;"></div>
<div style="left:0px;top:209px;width:14px;height:1px;background:#8e8e8e;"></div>
<div style="left:10px;top:219px;width:4px;height:1px;background:#8e8e8e;"></div>
<div style="left:10px;top:229px;width:4px;height:1px;background:#8e8e8e;"></div>
<div style="left:10px;top:239px;width:4px;height:1px;background:#8e8e8e;"></div>
<div style="left:10px;top:249px;width:4px;height:1px;background:#8e8e8e;"></div>
<div style="left:4px;top:259px;width:10px;height:1px;background:#8e8e8e;"></div>
<div style="left:10px;top:269px;width:4px;height:1px;background:#8e8e8e;"></div>
<div style="left:10px;top:279px;width:4px;height:1px;background:#8e8e8e;"></div>
<div style="left:10px;top:289px;width:4px;height:1px;background:#8e8e8e;"></div>
<div style="left:10px;top:299px;width:4px;height:1px;background:#8e8e8e;"></div>
<div style="left:0px;top:309px;width:14px;height:1px;background:#8e8e8e;"></div>
<div style="left:10px;top:319px;width:4px;height:1px;background:#8e8e8e;"></div>
<div style="left:10px;top:329px;width:4px;height:1px;background:#8e8e8e;"></div>
<div style="left:10px;top:339px;width:4px;height:1px;background:#8e8e8e;"></div>
<div style="left:10px;top:349px;width:4px;height:1px;background:#8e8e8e;"></div>
<div style="left:4px;top:359px;width:10px;height:1px;background:#8e8e8e;"></div>
<div style="left:10px;top:369px;width:4px;height:1px;background:#8e8e8e;"></div>
<div style="left:10px;top:379px;width:4px;height:1px;background:#8e8e8e;"></div>
<div style="left:10px;top:389px;width:4px;height:1px;background:#8e8e8e;"></div>
<div style="left:10px;top:399px;width:4px;height:1px;background:#8e8e8e;"></div>
<div style="left:0px;top:409px;width:14px;height:1px;background:#8e8e8e;"></div>
<div style="left:10px;top:419px;width:4px;height:1px;background:#8e8e8e;"></div>
<div style="left:10px;top:429px;width:4px;height:1px;background:#8e8e8e;"></div>
<div style="left:10px;top:439px;width:4px;height:1px;background:#8e8e8e;"></div>
<div style="left:10px;top:449px;width:4px;height:1px;background:#8e8e8e;"></div>
<div style="left:4px;top:459px;width:10px;height:1px;background:#8e8e8e;"></div>
<div style="left:10px;top:469px;width:4px;height:1px;background:#8e8e8e;"></div>
<div style="left:10px;top:479px;width:4px;height:1px;background:#8e8e8e;"></div>
<div style="left:10px;top:489px;width:4px;height:1px;background:#8e8e8e;"></div>
<div style="left:10px;top:499px;width:4px;height:1px;background:#8e8e8e;"></div>
<div style="left:0px;top:509px;width:14px;height:1px;background:#8e8e8e;"></div>
<div style="left:10px;top:519px;width:4px;height:1px;background:#8e8e8e;"></div>
<div style="left:10px;top:529px;width:4px;height:1px;background:#8e8e8e;"></div>
<div style="left:10px;top:539px;width:4px;height:1px;background:#8e8e8e;"></div>
<div style="left:10px;top:549px;width:4px;height:1px;background:#8e8e8e;"></div>
<div style="left:4px;top:559px;width:10px;height:1px;background:#8e8e8e;"></div>
<div style="left:10px;top:569px;width:4px;height:1px;background:#8e8e8e;"></div>
<div style="left:10px;top:579px;width:4px;height:1px;background:#8e8e8e;"></div>
<div style="left:10px;top:589px;width:4px;height:1px;background:#8e8e8e;"></div>
<div style="left:10px;top:599px;width:4px;height:1px;background:#8e8e8e;"></div>
<div style="left:0px;top:609px;width:14px;height:1px;background:#8e8e8e;"></div>
<div style="left:10px;top:619px;width:4px;height:1px;background:#8e8e8e;"></div>
<div style="left:10px;top:629px;width:4px;height:1px;background:#8e8e8e;"></div>
<div style="left:10px;top:639px;width:4px;height:1px;background:#8e8e8e;"></div>
<div style="left:10px;top:649px;width:4px;height:1px;background:#8e8e8e;"></div>
<div style="left:4px;top:659px;width:10px;height:1px;background:#8e8e8e;"></div>
<div style="left:10px;top:669px;width:4px;height:1px;background:#8e8e8e;"></div>
<div style="left:10px;top:679px;width:4px;height:1px;background:#8e8e8e;"></div>
<div style="left:10px;top:689px;width:4px;height:1px;background:#8e8e8e;"></div>
<div style="left:10px;top:699px;width:4px;height:1px;background:#8e8e8e;"></div>
<div style="left:0px;top:709px;width:14px;height:1px;background:#8e8e8e;"></div>
<div style="left:10px;top:719px;width:4px;height:1px;background:#8e8e8e;"></div>
<div style="left:10px;top:729px;width:4px;height:1px;background:#8e8e8e;"></div>
<div style="left:10px;top:739px;width:4px;height:1px;background:#8e8e8e;"></div>
<div style="left:10px;top:749px;width:4px;height:1px;background:#8e8e8e;"></div>
<div style="left:4px;top:759px;width:10px;height:1px;background:#8e8e8e;"></div>
<div style="left:10px;top:769px;width:4px;height:1px;background:#8e8e8e;"></div>
<div style="left:10px;top:779px;width:4px;height:1px;background:#8e8e8e;"></div>
<div style="left:10px;top:789px;width:4px;height:1px;background:#8e8e8e;"></div>
<div style="left:10px;top:799px;width:4px;height:1px;background:#8e8e8e;"></div>
<div style="left:0px;top:809px;width:14px;height:1px;background:#8e8e8e;"></div>
<div style="left:10px;top:819px;width:4px;height:1px;background:#8e8e8e;"></div>
<div style="left:10px;top:829px;width:4px;height:1px;background:#8e8e8e;"></div>
<div style="left:10px;top:839px;width:4px;height:1px;background:#8e8e8e;"></div>
<div style="left:10px;top:849px;width:4px;height:1px;background:#8e8e8e;"></div>
<div style="left:4px;top:859px;width:10px;height:1px;background:#8e8e8e;"></div>
<div style="left:10px;top:869px;width:4px;height:1px;background:#8e8e8e;"></div>
<div style="left:10px;top:879px;width:4px;height:1px;background:#8e8e8e;"></div>
<div style="left:10px;top:889px;width:4px;height:1px;background:#8e8e8e;"></div>
<div style="left:10px;top:899px;width:4px;height:1px;background:#8e8e8e;"></div>
<div style="left:0px;top:909px;width:14px;height:1px;background:#8e8e8e;"></div>
<div style="left:10px;top:919px;width:4px;height:1px;background:#8e8e8e;"></div>
<div style="left:10px;top:929px;width:4px;height:1px;background:#8e8e8e;"></div>
<div style="left:10px;top:939px;width:4px;height:1px;background:#8e8e8e;"></div>
<div style="left:10px;top:949px;width:4px;height:1px;background:#8e8e8e;"></div>
<div class="t" style="left:2px;top:107px;font-size:9px;color:#8a8a8a;transform-origin:0 0;transform:rotate(-90deg);line-height:9px">0</div>
<div class="t" style="left:2px;top:207px;font-size:9px;color:#8a8a8a;transform-origin:0 0;transform:rotate(-90deg);line-height:9px">100</div>
<div class="t" style="left:2px;top:307px;font-size:9px;color:#8a8a8a;transform-origin:0 0;transform:rotate(-90deg);line-height:9px">200</div>
<div class="t" style="left:2px;top:407px;font-size:9px;color:#8a8a8a;transform-origin:0 0;transform:rotate(-90deg);line-height:9px">300</div>
<div class="t" style="left:2px;top:507px;font-size:9px;color:#8a8a8a;transform-origin:0 0;transform:rotate(-90deg);line-height:9px">400</div>
<div class="t" style="left:2px;top:607px;font-size:9px;color:#8a8a8a;transform-origin:0 0;transform:rotate(-90deg);line-height:9px">500</div>
<div class="t" style="left:2px;top:707px;font-size:9px;color:#8a8a8a;transform-origin:0 0;transform:rotate(-90deg);line-height:9px">600</div>
<div class="t" style="left:2px;top:807px;font-size:9px;color:#8a8a8a;transform-origin:0 0;transform:rotate(-90deg);line-height:9px">700</div>
<div class="t" style="left:2px;top:907px;font-size:9px;color:#8a8a8a;transform-origin:0 0;transform:rotate(-90deg);line-height:9px">800</div>
</div>
<div style="left:307px;top:1134px;width:1588px;height:248px;background:#fff;box-shadow:0 0 0 1px #d8d8d8"></div>
<div class="t" style="left:315.5px;top:1150px;letter-spacing:0.258px;">Output:</div>
<div style="left:1795px;top:1138px;width:45px;height:26px;background:#ebebeb;border:1px solid #dedede;box-sizing:border-box"></div>
<div class="t" style="left:1801px;top:1150px;letter-spacing:-0.504px;">Copy</div>
<div style="left:1844px;top:1138px;width:47px;height:26px;background:#ebebeb;border:1px solid #dedede;box-sizing:border-box"></div>
<div class="t" style="left:1850.5px;top:1150px;letter-spacing:-0.369px;">Clear</div>
<div style="left:311px;top:1168px;width:1580px;height:179.5px;background:#ebebeb;border:1px solid #d4d4d4;box-sizing:border-box"></div>
<div class="t" style="left:315.5px;top:1176px;font-size:13.2px;color:#3c3c3c;font-family:'DejaVu Sans Mono',monospace;letter-spacing:0.02px;">ACTION</div>
<div class="t" style="left:315.5px;top:1192px;font-size:13.2px;color:#3c3c3c;font-family:'DejaVu Sans Mono',monospace;letter-spacing:0.02px;">sickle</div>
<div class="t" style="left:315.5px;top:1208px;font-size:13.2px;color:#3c3c3c;font-family:'DejaVu Sans Mono',monospace;letter-spacing:0.02px;">disabled CollisionShape sickle</div>
<div class="t" style="left:315.5px;top:1224px;font-size:13.2px;color:#3c3c3c;font-family:'DejaVu Sans Mono',monospace;letter-spacing:0.02px;">pick up tool sickle</div>
<div class="t" style="left:315.5px;top:1240px;font-size:13.2px;color:#3c3c3c;font-family:'DejaVu Sans Mono',monospace;letter-spacing:0.02px;">exit area</div>
<div class="t" style="left:315.5px;top:1256px;font-size:13.2px;color:#3c3c3c;font-family:'DejaVu Sans Mono',monospace;letter-spacing:0.02px;">tick family farm_level</div>
<div class="t" style="left:315.5px;top:1272px;font-size:13.2px;color:#3c3c3c;font-family:'DejaVu Sans Mono',monospace;letter-spacing:0.02px;">tick cow Emma</div>
<div class="t" style="left:315.5px;top:1288px;font-size:13.2px;color:#3c3c3c;font-family:'DejaVu Sans Mono',monospace;letter-spacing:0.02px;">tick cow Erna</div>
<div class="t" style="left:315.5px;top:1304px;font-size:13.2px;color:#3c3c3c;font-family:'DejaVu Sans Mono',monospace;letter-spacing:0.02px;">tick family farm_level</div>
<div class="t" style="left:315.5px;top:1320px;font-size:13.2px;color:#3c3c3c;font-family:'DejaVu Sans Mono',monospace;letter-spacing:0.02px;">tick cow Emma</div>
<div class="t" style="left:315.5px;top:1336px;font-size:13.2px;color:#3c3c3c;font-family:'DejaVu Sans Mono',monospace;letter-spacing:0.02px;">tick cow Erna</div>
<div style="left:1883px;top:1325px;width:4px;height:19px;background:#bdbdbd;border-radius:2px"></div>
<div class="t" style="left:317.5px;top:1365px;color:#2a78f5;letter-spacing:0.412px;">Output</div>
<div style="left:380.5px;top:1361px;width:8px;height:8px;background:#ff5d5d;border-radius:4px"></div>
<div class="t" style="left:392.5px;top:1365px;letter-spacing:-0.127px;">Debugger (1013)</div>
<div class="t" style="left:520px;top:1365px;letter-spacing:0.128px;">Audio</div>
<div class="t" style="left:575px;top:1365px;letter-spacing:0.145px;">Animation</div>
<div class="t" style="left:1790px;top:1365px;color:#8c8c8c;letter-spacing:-0.054px;">3.2.stable</div>
<svg style="left:1869.5px;top:1357.5px;" width="15" height="15" viewBox="0 0 16 16"><path d="M1 1.5h14v1.8H1zM4.5 6l3 3.5H5.5V14.5h-2V9.5H1.5zM11.5 6l3 3.5h-2V14.5h-2V9.5h-2z" fill="#4d4d4d" /></svg>
<div id="gamewin" style="left:768px;top:390px;width:1024px;height:630px;box-shadow:0 4px 18px 3px rgba(0,0,0,0.45),0 0 0 1px rgba(40,40,38,0.35);border-radius:7px 7px 0 0"></div>
<div style="left:768px;top:390px;width:1024px;height:30px;border-radius:7px 7px 0 0;background:linear-gradient(#5a5750,#42413c 70%,#3d3c38);box-shadow:inset 0 1px 0 rgba(255,255,255,0.12)"></div>
<div class="t" style="left:1241px;top:405px;font-size:16.5px;color:#dfdbd2;font-weight:700;letter-spacing:0.415px;">Farm Life</div>
<svg style="left:1729px;top:396px" width="18" height="18" viewBox="0 0 18 18"><defs><linearGradient id="wbmin" x1="0" y1="0" x2="0" y2="1"><stop offset="0" stop-color="#8e8b83"/><stop offset="1" stop-color="#6a6760"/></linearGradient></defs><circle cx="9" cy="9" r="8.2" fill="url(#wbmin)" stroke="#35342f" stroke-width="1"/><path d="M5.2 9.5h7.6" stroke="#3c3b37" stroke-width="1.4"/></svg>
<svg style="left:1749px;top:396px" width="18" height="18" viewBox="0 0 18 18"><defs><linearGradient id="wbmax" x1="0" y1="0" x2="0" y2="1"><stop offset="0" stop-color="#8e8b83"/><stop offset="1" stop-color="#6a6760"/></linearGradient></defs><circle cx="9" cy="9" r="8.2" fill="url(#wbmax)" stroke="#35342f" stroke-width="1"/><rect x="5.3" y="5.3" width="7.4" height="7.4" fill="none" stroke="#3c3b37" stroke-width="1.3"/></svg>
<svg style="left:1769px;top:396px" width="18" height="18" viewBox="0 0 18 18"><defs><linearGradient id="wbx" x1="0" y1="0" x2="0" y2="1"><stop offset="0" stop-color="#f27a48"/><stop offset="1" stop-color="#e6501c"/></linearGradient></defs><circle cx="9" cy="9" r="8.2" fill="url(#wbx)" stroke="#35342f" stroke-width="1"/><path d="M5.8 5.8l6.4 6.4M12.2 5.8l-6.4 6.4" stroke="#3a2418" stroke-width="1.5"/></svg>
<div id="game" style="left:768px;top:420px;width:1024px;height:600px;overflow:hidden;background:#50bd7b">
<svg style="left:0;top:0" width="1024" height="600" viewBox="0 0 1024 600"><defs><linearGradient id="gnd" gradientUnits="userSpaceOnUse" x1="0" y1="94" x2="0" y2="600"><stop offset="0" stop-color="#6ad2a6"/><stop offset="0.091" stop-color="#69d1a6"/><stop offset="0.17" stop-color="#64cfa0"/><stop offset="0.269" stop-color="#5ac790"/><stop offset="0.368" stop-color="#54c185"/><stop offset="0.466" stop-color="#50be7e"/><stop offset="0.565" stop-color="#4ebc7a"/><stop offset="1" stop-color="#4ebc79"/></linearGradient><radialGradient id="lt" gradientUnits="userSpaceOnUse" cx="0" cy="0" r="1" gradientTransform="translate(-40 105) scale(560 295)"><stop offset="0" stop-color="#7ae4b4" stop-opacity="0.95"/><stop offset="0.35" stop-color="#7ae4b4" stop-opacity="0.8"/><stop offset="0.65" stop-color="#7ae4b4" stop-opacity="0.38"/><stop offset="1" stop-color="#7ae4b4" stop-opacity="0"/></radialGradient><linearGradient id="rt" gradientUnits="userSpaceOnUse" x1="700" y1="0" x2="1024" y2="0"><stop offset="0" stop-color="#66d296" stop-opacity="0"/><stop offset="1" stop-color="#66d296" stop-opacity="0.38"/></linearGradient><radialGradient id="rb" gradientUnits="userSpaceOnUse" cx="1024" cy="620" r="330"><stop offset="0" stop-color="#62cc88" stop-opacity="0.45"/><stop offset="1" stop-color="#62cc88" stop-opacity="0"/></radialGradient><filter id="bl" x="-10%" y="-30%" width="120%" height="160%"><feGaussianBlur stdDeviation="1.3"/></filter></defs><rect width="1024" height="600" fill="#edd0c3"/><polygon points="0,94 610,79.7 1024,105.5 1024,600 0,600" fill="url(#gnd)" /><polygon points="0,94 610,79.7 1024,105.5 1024,600 0,600" fill="url(#lt)" /><polygon points="0,94 610,79.7 1024,105.5 1024,600 0,600" fill="url(#rt)" /><polygon points="0,94 610,79.7 1024,105.5 1024,600 0,600" fill="url(#rb)" /><polygon points="159.5,147.8 733.2,103.5 733.2,100 159.5,143.8" fill="#70b03a" /><polygon points="159.5,143.8 190.8,97 657,89.5 733.2,100" fill="#b9ec93" /><polygon points="220.8,97.5 222,89 227.5,89 264,113.5 266.5,127.5 257.5,128.2" fill="#a2be36" /><polygon points="278.2,95 279.5,86.5 285,86.5 349,108.5 351.5,122.5 342.5,123.2" fill="#a2be36" /><polygon points="328.2,92.5 329.5,84 335,84 419,102.2 421.5,116.2 412.5,117" fill="#a2be36" /><polygon points="373.2,92 374.5,83.5 380,83.5 481.5,98.5 484,112.5 475,113.2" fill="#a2be36" /><polygon points="415.8,91.2 417,82.8 422.5,82.8 534,94.8 536.5,108.8 527.5,109.5" fill="#a2be36" /><polygon points="455.8,90.5 457,82 462.5,82 584,92.2 586.5,106.2 577.5,107" fill="#a2be36" /><polygon points="503.2,90 504.5,81.5 510,81.5 629,87.2 631.5,101.2 622.5,102" fill="#a2be36" /><polygon points="568.2,89.5 569.5,82.5 575,82.5 591.5,91.5 594,100 585,100.8" fill="#a2be36" /><polygon points="603.2,91.2 604.5,84.2 610,84.2 629,92.8 631.5,101.2 622.5,102" fill="#a2be36" /><polygon points="640.8,91.2 642,84.2 647.5,84.2 666.5,91 669,99.5 660,100.2" fill="#a2be36" /><path d="M512.9 90.2L513.4 74.6L515.1 90.2zM517.9 90.4L520.1 77L519.8 90.4zM575.5 90.8L575.8 76.5L577.1 90.8zM462 91.2L461.3 74.9L463.7 91.2zM574.6 91.3L574.9 78.9L576.9 91.3z" fill="#9db832"/><path d="M568.6 89.3L567.3 79.1L570.4 89.3zM507.9 89.9L509.7 78.9L510 89.9zM516.6 90.5L517.6 73L518.6 90.5zM572.1 90.7L572.4 79.4L574 90.7zM518.9 91L520.1 77.9L520.4 91zM423.6 91.2L422.3 80L425.9 91.2zM423.9 91.4L426 74.1L426.4 91.4zM570.1 91.5L570.8 79.2L571.6 91.5zM518.6 91.5L519.6 75.5L520.6 91.5zM520.2 91.5L519.5 76L522.4 91.5z" fill="#b4cc3c"/><path d="M512.5 89.8L512.9 75.3L514.8 89.8zM508.4 90.1L508.1 73.7L510.2 90.1zM521 90.2L521.2 74L522.5 90.2zM511.4 90.7L513.3 76.4L513.7 90.7zM645.3 91.1L646.5 76.7L647.8 91.1zM610.5 91.4L609.9 75.4L612.9 91.4z" fill="#c9d846"/><path d="M508 89.7L507.1 75.1L509.4 89.7zM572.3 90.1L572.5 78.3L574.4 90.1zM508.6 90.3L507.5 77.3L510.7 90.3zM518.8 90.3L518.1 77.3L520.7 90.3zM461 90.5L460.9 76.1L462.5 90.5zM512.2 90.5L512.8 78.6L513.8 90.5zM463.7 91L465.9 75.7L466.1 91zM468.6 91L468.5 77.4L470 91zM530.4 91.2L532.1 78.1L532.7 91.2zM379.5 91.4L380.7 79.2L382 91.4zM525.5 91.4L524.6 74.8L527.2 91.4zM527.1 91.5L527 78.5L528.8 91.5z" fill="#88a42c"/><path d="M518.9 90.4L518 71.8L521.2 90.4zM465.2 90.9L465 78.7L467.5 90.9zM516.8 91.1L515.6 72.6L518.6 91.1z" fill="#dfe456"/><path d="M574.9 90.4L575.6 79.8L577.2 90.4zM513.3 90.5L514 75.9L515.1 90.5zM463.4 90.7L464.9 79.4L465.1 90.7zM578.7 91.4L580.5 77.7L580.5 91.4z" fill="#a6c036"/><path d="M468.7 91.6L468.6 79.9L470.3 91.6zM576.5 92L577.1 78.2L578.9 92zM330.7 92.1L330 76.2L333.1 92.1zM646.2 92.2L648.3 78.2L648.2 92.2z" fill="#9db832"/><path d="M523.6 91.9L523.1 74L526 91.9zM607.5 92.1L609.7 76.7L609.5 92.1zM463 92.3L465.1 76.1L464.9 92.3z" fill="#b4cc3c"/><path d="M376.8 91.5L378.5 78.1L379 91.5zM469.7 91.7L469.6 73.5L471.6 91.7zM428.3 91.8L430 77.6L429.8 91.8zM422.6 91.9L423.9 80.5L424.6 91.9zM525.8 92L524.3 77.7L527.3 92zM530.2 92.2L529.2 74.2L532.4 92.2z" fill="#c9d846"/><path d="M473.9 91.9L472.8 77.3L476.1 91.9zM378.1 91.9L377.4 80.1L379.8 91.9zM469.7 92.1L469.1 75.4L471.2 92.1zM575 92.3L575.3 77.6L577.3 92.3zM334.3 92.4L335.4 74.9L336.1 92.4zM421 92.5L421.6 75.6L423.3 92.5z" fill="#88a42c"/><path d="M517.1 91.8L516.5 75L519.3 91.8zM478.6 91.9L478.3 73.8L480.7 91.9zM539.8 92.1L538.8 74.4L541.2 92.1zM527 92.2L527.4 76.6L528.5 92.2zM462.4 92.2L464 75L464.1 92.2zM524.7 92.3L525.3 79.4L526.4 92.3zM526 92.4L526 76.4L527.8 92.4zM478.6 92.4L477.8 74.5L480.1 92.4zM380.1 92.4L379.8 81.2L382.1 92.4z" fill="#dfe456"/><path d="M465.3 91.5L466.3 76.7L467 91.5zM530.2 91.5L529.4 77.2L532.5 91.5zM518.6 91.6L519.1 76.5L520.7 91.6zM475.2 91.8L474.1 78L477 91.8zM644.1 91.8L646.2 76.3L646.6 91.8zM647.3 91.8L648.1 81.2L648.8 91.8zM533 92.1L532.8 72.6L535.2 92.1zM524.8 92.2L523.6 73.5L527.2 92.2zM418.8 92.2L418.8 77.7L420.9 92.2zM428.7 92.3L429.2 76.2L430.1 92.3zM428.1 92.3L427.2 74.7L430.5 92.3zM524.7 92.3L524.8 77L527.2 92.3z" fill="#a6c036"/><path d="M469.5 92.6L469.7 78.1L471.8 92.6zM433.9 92.6L434.8 76.3L435.7 92.6zM644.8 92.7L645.9 79.3L647 92.7zM331.7 92.8L331.4 78.2L333.6 92.8zM531.1 92.9L533.2 74.4L533.4 92.9zM471.8 93L471.7 78.6L473.9 93zM378.8 93L378.5 77.6L380.7 93zM335.3 93L336.3 76.2L336.8 93z" fill="#9db832"/><path d="M387.3 92.6L388.4 76L388.7 92.6zM611.5 92.6L611.5 76.4L613.3 92.6zM474.4 92.6L475.9 76.1L476.2 92.6zM534.9 92.7L536.2 75.9L537.4 92.7zM466.7 92.8L465.7 77.3L468.9 92.8zM541.1 92.9L542.7 76.6L543.6 92.9zM608.3 92.9L608.7 77.1L610 92.9zM528.1 93L527.9 79.2L529.7 93z" fill="#b4cc3c"/><path d="M376.8 92.6L379 80.6L379.2 92.6zM380.5 92.7L378.9 81.9L382 92.7zM574.1 92.8L575.5 74.3L575.9 92.8zM481.2 92.8L480.3 74.9L482.9 92.8zM607.4 92.9L606.8 76.3L609.7 92.9zM432.1 92.9L432.1 76.1L434.1 92.9zM551.4 93L550.8 77.3L553.3 93z" fill="#c9d846"/><path d="M609.6 92.6L609.2 77.4L611.5 92.6zM471.8 92.6L472.1 75L473.4 92.6zM611.5 92.6L611.8 80.9L613.9 92.6zM477.8 92.7L476.3 75.1L479.6 92.7zM612.1 92.8L613 76.8L613.9 92.8zM333.7 92.8L335.8 74.9L336.1 92.8zM470.9 92.9L472.7 79.6L472.9 92.9zM533.7 93L534.1 78.9L535.9 93z" fill="#88a42c"/><path d="M382 92.7L383.7 80.1L384.4 92.7zM430.3 92.8L432.8 80L432.8 92.8z" fill="#dfe456"/><path d="M645.6 92.5L645.4 77.3L647.3 92.5zM481.6 92.7L482.8 78.2L483.8 92.7zM335.3 92.7L335.9 76.1L337.8 92.7zM539.2 92.8L539.8 72.1L541.4 92.8zM577 92.9L577.1 80.1L578.4 92.9zM551 93L551.2 76.2L552.8 93zM331.4 93L333.5 75.1L333.7 93z" fill="#a6c036"/><path d="M478.5 93.2L477.9 75.9L480.1 93.2zM432.2 93.4L433.5 77.9L433.7 93.4zM548 93.5L548 76.7L549.4 93.5zM552 93.6L550.9 79.5L553.8 93.6zM611.8 93.7L613.6 79.6L613.5 93.7z" fill="#9db832"/><path d="M380.6 93.2L382.7 77.7L382.6 93.2zM333.7 93.3L334.8 75.3L336.2 93.3zM429.7 93.4L428.6 79.5L431.3 93.4zM611.6 93.4L610.1 80.2L613.2 93.4z" fill="#b4cc3c"/><path d="M574.9 93.1L575.3 74.4L576.5 93.1zM431.2 93.2L431.8 81L433.4 93.2zM543.4 93.3L544.8 77.9L545 93.3zM534.7 93.6L535 76.7L537.1 93.6zM543.5 93.6L543 79.3L545.4 93.6zM533.4 93.6L532.2 78.6L535.5 93.6zM378.3 93.7L377.3 81.6L379.8 93.7zM579.9 93.7L579.5 76.9L581.5 93.7zM491.7 93.7L493.9 79.2L493.7 93.7z" fill="#c9d846"/><path d="M543.5 93.1L544.4 75.3L545.2 93.1zM646.3 93.1L646.4 78.5L648.4 93.1zM536.6 93.1L535.3 75.5L538.7 93.1zM532.4 93.2L530.9 76.2L534.2 93.2zM336 93.3L337.8 80.6L337.8 93.3zM482.2 93.5L482.4 78.4L484.2 93.5zM388 93.5L390 78.2L390 93.5zM429.3 93.5L429.4 76.7L430.8 93.5zM485.1 93.7L484.6 78.4L486.8 93.7zM483.7 93.7L482.4 74.2L485.9 93.7z" fill="#88a42c"/><path d="M333.6 93.1L332.5 79L335.9 93.1zM651.1 93.1L652.6 76.3L652.6 93.1zM434.1 93.3L434.2 80L436.6 93.3zM438.3 93.5L438.4 80.6L439.8 93.5zM475.8 93.6L477.7 78.5L477.4 93.6z" fill="#dfe456"/><path d="M544.7 93.1L547.2 71.5L547.2 93.1zM645.9 93.2L647.2 81.7L647.4 93.2zM381 93.3L379.5 77.6L382.6 93.3zM381.1 93.5L381.8 82.2L383.5 93.5zM483.3 93.5L484 80.8L485.4 93.5zM381 93.7L383 78L383.3 93.7zM335.3 93.7L333.6 75.4L336.8 93.7z" fill="#a6c036"/><path d="M476.5 93.7L475.8 76.1L478.5 93.7zM431.1 93.8L429.7 78.7L433.1 93.8zM428.9 94L427.7 79.7L430.5 94zM611.2 94.1L612.8 75L613.2 94.1zM547.3 94.2L547.8 80L549.1 94.2zM478 94.2L477.8 82.3L480.3 94.2zM553.1 94.2L553.7 77L555 94.2z" fill="#9db832"/><path d="M337.6 93.7L336.9 81.1L339.4 93.7zM555.1 93.8L553.7 74L557.3 93.8zM645.5 93.8L647.6 81L647.8 93.8zM535.4 93.8L537.6 78.4L537.9 93.8zM389.9 93.9L390.9 80.7L391.5 93.9zM480.4 93.9L482.4 81.6L482.7 93.9zM332.6 94L334.6 81.5L334.3 94zM385.6 94L386.4 80.4L387.7 94zM440.5 94.1L442 76.4L442.2 94.1zM555.8 94.2L556.6 73.7L557.9 94.2zM559.6 94.2L558.2 77.3L561.4 94.2z" fill="#b4cc3c"/><path d="M646.8 93.7L646.5 78.2L649.2 93.7zM557 93.7L556.7 77.3L558.7 93.7zM606.3 93.7L604.9 81.7L608.2 93.7zM474.9 93.8L473.7 79.7L477.1 93.8zM576.3 93.8L576.3 78.1L578.5 93.8zM335 93.9L335 80.7L336.7 93.9zM338 94.3L339.9 79.5L340.4 94.3zM339.1 94.3L338.3 77.5L341.5 94.3z" fill="#c9d846"/><path d="M607.7 94L609.5 78.1L609.4 94zM387.1 94.1L388.5 78.9L389.3 94.1zM336.1 94.1L337.8 79.8L338.6 94.1z" fill="#88a42c"/><path d="M646.4 93.7L647.4 76.4L648.7 93.7zM535.6 93.8L535.5 76.1L537.3 93.8zM577.7 93.9L577.2 77.4L580.1 93.9zM493.4 93.9L492.9 78L495.3 93.9zM649.6 94.1L648.3 74.1L651.8 94.1zM441.6 94.1L443.3 75.5L443.8 94.1zM550 94.1L549.8 78.6L551.8 94.1zM482.1 94.1L480.9 80.6L483.6 94.1z" fill="#dfe456"/><path d="M612.3 93.7L612.2 76L614.7 93.7zM494.7 94L493.4 81.3L496.5 94zM488 94.1L488.8 80.1L489.5 94.1z" fill="#a6c036"/><path d="M392 94.3L391.3 79.7L393.7 94.3zM434.3 94.3L433.9 77.5L436.1 94.3zM435.9 94.4L436.7 79.6L437.5 94.4zM434.5 94.4L434.8 82.3L436.4 94.4zM438.1 94.6L437.3 77.8L440.2 94.6zM444 94.6L445.3 79.5L445.7 94.6zM437.3 94.7L439.3 82.8L439.2 94.7zM567.4 94.8L566.5 77.5L569.7 94.8zM389.8 94.9L388.9 78.3L392 94.9zM336.6 95L338 78L338.9 95z" fill="#9db832"/><path d="M547.6 94.4L547 74.6L549.4 94.4zM556 94.5L556.7 80.8L558.2 94.5zM449.5 94.7L449.7 80.3L451.7 94.7zM345 94.9L343.5 79.8L346.6 94.9z" fill="#b4cc3c"/><path d="M336.6 94.4L336.3 73.9L339 94.4zM442.5 94.6L441.2 76.9L444.3 94.6zM438.9 94.6L437.8 81.3L440.6 94.6zM554.3 94.7L555.4 76.1L556.3 94.7zM544.7 94.9L546.2 74.1L546.1 94.9zM649.5 94.9L652 81.2L652 94.9z" fill="#c9d846"/><path d="M554.1 94.3L553.9 74L556.4 94.3zM337 94.4L336.6 77.2L338.7 94.4zM499.6 94.4L499.1 74.1L501.1 94.4zM550.1 94.5L549.4 75.4L551.7 94.5zM342.1 94.5L343 74.2L344.3 94.5zM544.5 94.5L546.2 77.5L546.4 94.5zM492.8 94.6L491.3 74.4L494.5 94.6zM441.1 94.6L442.2 75.1L442.5 94.6zM494.9 94.8L496.5 78.9L496.6 94.8zM547.8 94.8L549.2 74.8L549.6 94.8zM554.2 94.9L553.1 75.5L555.8 94.9z" fill="#88a42c"/><path d="M540 94.4L539.6 76.7L542.1 94.4zM283.2 94.6L284.9 80.8L284.7 94.6zM550.2 95L551 74L552.5 95z" fill="#dfe456"/><path d="M391.5 94.4L393 76.8L393 94.4zM282.9 94.4L283.4 75L284.6 94.4zM382.5 94.5L384.4 76.2L384.1 94.5zM576.5 94.6L576 77.4L578.5 94.6zM440.6 94.8L441 76.8L442.6 94.8zM550.1 94.9L551.5 73.6L551.7 94.9z" fill="#a6c036"/><path d="M447.3 95.1L447 77.8L449.5 95.1zM555.4 95.3L555.1 79.9L557.7 95.3zM560.4 95.4L561.3 73.2L562.8 95.4zM345 95.5L346 80L346.5 95.5zM284.9 95.6L286.7 82.3L287.3 95.6z" fill="#9db832"/><path d="M654.5 95L656.1 75.8L656.4 95zM345.1 95.1L347 75L347.4 95.1zM340.1 95.1L341.7 79.8L342.3 95.1zM280.5 95.1L280.6 77.5L282.3 95.1zM654.8 95.1L655.6 77.8L657.2 95.1zM387.4 95.3L386.9 79.8L388.8 95.3zM498.9 95.5L501 75.4L501.4 95.5zM570.7 95.5L571.4 77.2L572.4 95.5zM444.6 95.5L444.6 75.3L446.3 95.5z" fill="#b4cc3c"/><path d="M392.3 95L393.4 77.8L394.3 95zM579.2 95L580.1 78.7L581.2 95zM657.2 95.1L655.8 78.3L659.2 95.1zM343.9 95.1L342.8 74.5L345.7 95.1zM335.5 95.2L334.3 80L338 95.2zM282.8 95.4L281.3 81.5L284.4 95.4zM503.5 95.5L502.3 81L505.7 95.5z" fill="#c9d846"/><path d="M557.6 95.1L557.6 76.6L559.1 95.1zM577.2 95.1L577.9 78L579 95.1zM498.1 95.1L497.7 73.7L500.2 95.1zM496.4 95.1L496.1 77.4L498.8 95.1zM501.5 95.2L502.8 76.7L503.1 95.2zM436.6 95.2L435.9 82.2L438.8 95.2zM442.4 95.3L443.2 80.4L444 95.3zM616.2 95.5L617.8 79L618.3 95.5zM497 95.5L498 81.5L499.1 95.5z" fill="#88a42c"/><path d="M392.7 95L393.7 76.3L394.2 95zM577.6 95.1L577.6 79.7L579.3 95.1zM557.8 95.3L559.2 76.5L560.2 95.3zM280.8 95.6L279.7 76.3L283.2 95.6zM570.6 95.6L571.5 77.8L572.7 95.6z" fill="#dfe456"/><path d="M449.9 95.1L449 75.4L452 95.1zM442.1 95.1L440.9 77.3L443.9 95.1zM558.1 95.2L557.8 78.2L559.5 95.2zM283.9 95.4L283.2 77L285.7 95.4zM615.2 95.5L615.4 75.5L616.7 95.5z" fill="#a6c036"/><path d="M653.6 95.6L654.2 82.8L655.9 95.6zM564.9 95.6L564.1 73L567.4 95.6zM287 95.6L289.2 78.8L289.1 95.6zM560.7 95.7L560.1 77L562.5 95.7zM562.3 95.7L564.7 76L564.7 95.7zM398.4 95.9L398.8 76.3L400.8 95.9zM573.1 95.9L574.3 76.8L574.8 95.9zM284.4 96L283.8 81.9L285.9 96zM580.3 96L580.7 78.1L582.7 96zM347.1 96L349 75.3L349.3 96z" fill="#9db832"/><path d="M446.6 95.6L445.3 80.2L449 95.6zM654.6 95.9L655.8 80.1L656 95.9zM574.3 95.9L573.6 74.1L575.9 95.9zM566.1 96L566.3 79L567.6 96zM450 96.2L450.2 82.2L452.1 96.2zM584.1 96.2L583.1 79.7L585.7 96.2zM579.3 96.2L580.8 76.3L581.7 96.2z" fill="#b4cc3c"/><path d="M391.7 95.7L393 76.8L394.2 95.7zM492.2 95.9L491.4 77.8L493.9 95.9zM444.6 96L445.4 76.1L446 96zM581.5 96.1L580.8 73.3L583.7 96.1z" fill="#c9d846"/><path d="M581 95.7L580.6 74.1L582.9 95.7zM340 95.8L340.4 75.4L342.2 95.8zM446.1 95.9L445 78L448.2 95.9zM446.3 96.1L444.8 80.5L448.1 96.1zM575.9 96.1L575.4 71.6L577.6 96.1zM397.1 96.1L399.1 83.4L399.5 96.1z" fill="#88a42c"/><path d="M611.8 95.6L613 80.9L613.5 95.6zM559.8 95.6L560.8 80L561.4 95.6zM659.2 95.7L660.1 80L660.8 95.7zM500.4 95.7L501.6 75.4L502.8 95.7zM501.3 95.7L502.7 82.3L503 95.7zM613.6 95.9L614.9 81L615.2 95.9zM572.4 96.2L572.6 80.5L574.8 96.2z" fill="#dfe456"/><path d="M393.1 95.6L394.4 82.3L395.1 95.6zM285.5 95.6L285.8 81.7L287.2 95.6zM450 96L449.4 82.5L451.8 96zM344.9 96L344.4 74.2L346.4 96zM403.1 96L402.9 79.3L404.8 96zM392.4 96L392.7 80.9L394.6 96z" fill="#a6c036"/><path d="M570.1 96.2L568.8 80.7L572 96.2zM399.3 96.2L400.8 77.1L401.1 96.2zM395 96.3L396.3 77.7L396.8 96.3zM451.3 96.4L453.5 76L453.8 96.4zM572.8 96.4L571.3 78.2L574.2 96.4zM580.3 96.5L581.4 80.3L582.1 96.5zM406.1 96.8L404.9 79.9L407.6 96.8zM458.9 96.8L459.1 76.7L460.9 96.8z" fill="#9db832"/><path d="M566 96.2L567.9 76.5L567.9 96.2zM455.1 96.2L453.5 82L456.5 96.2zM561.6 96.3L560.6 75L563.8 96.3zM397.6 96.5L398.3 83.9L399.3 96.5zM584.2 96.5L583.8 72.6L586.6 96.5zM507.1 96.6L507.7 81.1L509 96.6zM286.6 96.8L285.8 77.7L288.2 96.8z" fill="#b4cc3c"/><path d="M279 96.2L280.2 79.1L281.4 96.2zM500.9 96.2L502.2 76.6L503.1 96.2zM454.9 96.4L455.8 80.6L456.7 96.4zM660.9 96.4L659.3 82.2L662.4 96.4zM287.4 96.7L286.8 80.6L288.9 96.7zM511.6 96.7L512.7 75.5L513.3 96.7zM503.5 96.7L503.8 80.3L505.5 96.7zM349.5 96.7L347.8 76.6L351 96.7zM399 96.8L398.7 79.5L401.1 96.8z" fill="#c9d846"/><path d="M499.9 96.2L499.8 80.8L501.3 96.2zM654.3 96.4L654 79.5L656.4 96.4zM452.2 96.5L453 77.6L453.8 96.5zM511 96.7L513.3 77.6L513.3 96.7zM289.8 96.7L289.6 83.9L291.6 96.7zM352.3 96.8L351 78.5L353.8 96.8zM286.2 96.8L288.3 77.7L288.7 96.8z" fill="#88a42c"/><path d="M581.9 96.4L584.1 76L584.1 96.4zM338.5 96.5L337.2 79.6L340.7 96.5zM582.2 96.7L581.3 80.7L584.5 96.7z" fill="#dfe456"/><path d="M616.7 96.2L615.7 79.7L618.3 96.2zM339 96.3L338.3 76.2L341 96.3zM289.3 96.4L289.5 83.6L291.4 96.4zM397.5 96.4L399.2 79.8L399.9 96.4zM394.8 96.5L393.3 80L396.2 96.5zM346.6 96.6L347.3 76.7L348.6 96.6z" fill="#a6c036"/><path d="M221.9 96.8L222.4 81.8L223.7 96.8zM285.3 96.9L284.6 80.3L287.5 96.9zM348.8 96.9L349.5 77.2L351.2 96.9zM289 97.1L290.4 78L290.5 97.1zM578 97.1L577.1 78L580.2 97.1zM289.5 97.2L289.4 77.8L291 97.2zM284.5 97.3L284.7 78.1L286.9 97.3zM455.3 97.3L456.2 77.7L456.7 97.3zM344.4 97.3L345 83.2L346.5 97.3zM458.9 97.4L458.4 80.8L460.4 97.4zM283 97.4L282.2 77.7L284.7 97.4z" fill="#9db832"/><path d="M399.7 97L400.4 79.5L401.8 97zM345.2 97L346.1 81.5L346.8 97z" fill="#b4cc3c"/><path d="M400.6 96.8L399.5 81.1L402.9 96.8zM573.6 97L572.6 75.7L575.9 97zM586 97.2L588.2 80.6L588.1 97.2zM399.6 97.2L398.9 84.6L401 97.2zM580.9 97.3L581.6 80.2L583 97.3zM662.3 97.3L663.8 74.1L664.6 97.3zM402.8 97.3L401.9 81.5L405.1 97.3zM287.3 97.4L287.5 78.7L289.4 97.4z" fill="#c9d846"/><path d="M587.4 96.9L587.8 72.6L588.9 96.9zM450.9 97L452.6 82.7L453.3 97zM449 97L447.5 77.9L450.6 97zM591.3 97.3L590.5 80.7L593.7 97.3zM577.3 97.4L577 74.1L579.8 97.4zM612.6 97.4L612.1 80.1L614.5 97.4z" fill="#88a42c"/><path d="M505 96.9L506.5 79.6L506.5 96.9zM226.4 97L225 81.4L227.7 97zM511.8 97L510.6 80.2L514.2 97zM612.3 97.1L611.5 79.1L614.6 97.1zM587.9 97.2L587.2 78.9L589.7 97.2z" fill="#dfe456"/><path d="M657 96.8L658.8 82.1L658.7 96.8zM657.9 97L656.5 76.5L659.4 97zM504.1 97L505 80.4L506.2 97zM585.3 97.1L585.7 82.4L587.6 97.1zM285.4 97.2L287.4 84L287.8 97.2zM511.5 97.2L510.7 79.3L513.2 97.2zM464.3 97.2L465.1 79.1L465.8 97.2zM459.8 97.2L461.8 82.7L461.4 97.2z" fill="#a6c036"/><path d="M585.5 97.6L584.8 73L587.2 97.6zM457.8 97.6L458.2 82.4L460.3 97.6zM352.6 97.6L354.2 75.1L354.5 97.6zM594.3 97.8L595 71.6L596.3 97.8zM222.7 97.9L223.9 80.3L224.8 97.9zM463.1 97.9L462.6 79.5L465.2 97.9zM589.4 97.9L590 80L591.6 97.9z" fill="#9db832"/><path d="M598.6 97.5L597.7 81.3L600.1 97.5zM460.6 97.6L462.1 75.6L462.4 97.6zM595.4 97.6L593.7 71L596.8 97.6zM515.3 97.6L515.8 75.9L517.8 97.6zM291.3 97.6L290.4 83.6L293.4 97.6zM590.7 97.7L590.2 77.2L592.2 97.7zM458.3 97.7L459.4 82.6L460.7 97.7zM285.6 97.7L284.6 84.6L287.6 97.7zM511.4 97.7L512.2 83.1L513 97.7zM407.2 97.7L408.3 78.8L408.9 97.7zM349 98L348.2 78.6L350.7 98z" fill="#b4cc3c"/><path d="M223.4 97.5L224.5 83.3L225.8 97.5zM461.4 97.5L463.3 76.1L463.1 97.5zM462 97.5L463 78.3L463.8 97.5zM399.4 97.8L400.5 78.6L401.2 97.8zM583.7 97.9L585 80.8L585.7 97.9zM516.9 97.9L518.6 82.3L519 97.9zM456.6 98L455.5 78L458.2 98z" fill="#c9d846"/><path d="M519.9 97.5L521.3 80.8L521.9 97.5zM585.6 97.5L584.1 72.8L587.1 97.5zM461.7 97.6L462 79.9L463.2 97.6zM288.1 97.6L287.4 77.6L290.3 97.6zM660.7 97.7L660.2 74L662.9 97.7zM599.4 97.8L598.4 70.9L601 97.8zM519.7 98L522.1 77.3L522.1 98z" fill="#88a42c"/><path d="M224.1 97.8L225.2 84.8L226.6 97.8z" fill="#dfe456"/><path d="M593.1 97.5L591.8 72.2L594.5 97.5zM620 97.6L620.6 78.7L622.3 97.6zM515.4 97.7L516.6 82.7L517.1 97.7zM588.4 97.7L589.1 82.2L590.3 97.7zM505.8 97.8L506 84.1L507.9 97.8zM470.3 97.9L470 77.3L471.8 97.9zM525.5 97.9L526.3 82.2L527.5 97.9z" fill="#a6c036"/><path d="M598.8 98.1L597.7 74.7L600.3 98.1zM349.9 98.1L349.1 79.2L351.3 98.1zM518.3 98.2L519.3 83.3L519.9 98.2zM524.3 98.2L524.9 79.8L526.1 98.2zM406.4 98.2L406.7 82.7L408.2 98.2zM585.3 98.2L587.2 77.6L587.2 98.2zM620.3 98.3L620.5 81.9L621.7 98.3z" fill="#9db832"/><path d="M293 98.1L292.9 84.6L294.7 98.1zM352.4 98.1L352 82.3L354.6 98.1zM514.2 98.1L513.7 83.3L516.7 98.1zM660.1 98.2L661.7 75.3L662.2 98.2zM221.4 98.4L220.9 84.3L223.1 98.4z" fill="#b4cc3c"/><path d="M513.6 98L512.4 83.3L515.4 98zM596.7 98.1L595.3 81.6L598.1 98.1zM356.4 98.2L356.1 79.8L358.8 98.2zM522.9 98.3L524.6 75.2L524.6 98.3zM523.2 98.4L522.7 77.2L524.6 98.4z" fill="#c9d846"/><path d="M586 98.1L586 77.5L588.2 98.1zM511.6 98.2L512.8 76.8L513.3 98.2zM600.4 98.2L599.3 74.6L602.8 98.2zM228.3 98.2L228.5 85L229.7 98.2zM595.4 98.3L595.5 78.4L597.8 98.3zM353.2 98.3L352.7 77.8L354.8 98.3zM622 98.4L622 74.9L624.1 98.4z" fill="#88a42c"/><path d="M465.3 98.1L464.6 77.1L466.7 98.1zM598.2 98.1L600.2 79.2L600 98.1zM348.9 98.1L347.4 80.3L350.5 98.1zM227.5 98.2L226.8 85L229 98.2zM225.8 98.2L225 85.4L227.4 98.2zM462.6 98.2L464.4 79.9L464.3 98.2zM355.3 98.3L356.4 80.4L357.5 98.3zM597.2 98.3L597.1 77.2L599.1 98.3zM526.9 98.3L528.1 80.9L529.2 98.3zM662.8 98.4L664.3 78.7L664.2 98.4zM350.3 98.4L350.3 76.7L352 98.4z" fill="#dfe456"/><path d="M660 98.1L660.2 74.8L662.5 98.1zM347 98.3L349 81.9L349.5 98.3zM470.1 98.3L470.9 79.6L472.4 98.3zM519.1 98.4L519.9 83.8L520.8 98.4zM662.8 98.5L663.3 82.4L664.4 98.5z" fill="#a6c036"/><path d="M409.1 98.6L408.9 78.1L410.8 98.6zM595.4 98.7L596.3 74.5L597.7 98.7zM286.9 98.8L288.9 79.4L288.4 98.8zM411.7 98.8L412 82.6L413.8 98.8zM619.2 98.9L620.1 73.9L620.7 98.9z" fill="#9db832"/><path d="M415.2 98.5L417.3 77.8L417.6 98.5zM617 98.5L617.8 75.6L618.4 98.5zM621.8 98.6L623.2 82.8L623.3 98.6zM412.1 98.6L411.1 85.3L413.7 98.6zM463 98.8L463.7 83.6L465 98.8zM357 98.8L358.9 77.8L359.2 98.8zM407.1 98.8L408.9 85.5L409.3 98.8zM222.4 98.8L221.8 85L224.3 98.8zM590.6 98.9L589.3 75.9L592.1 98.9zM619.1 98.9L620.9 77L620.5 98.9zM348.5 98.9L349.5 83L350.9 98.9zM601.9 99L602.3 80.6L603.8 99zM612 99L613.4 78.4L613.8 99z" fill="#b4cc3c"/><path d="M289.3 98.5L289.6 84.4L290.7 98.5zM661.2 98.5L661.8 76.8L663.4 98.5zM464.3 98.7L463.4 84L466.5 98.7zM522 98.8L523.6 82.1L524.2 98.8zM352.1 98.9L354.1 81.6L354.2 98.9zM414.7 98.9L415.4 78.1L416.2 98.9zM599.9 99L599.3 81.1L601.7 99z" fill="#c9d846"/><path d="M356.3 98.6L358.4 79.2L358.1 98.6zM463.7 98.6L464 84.1L465.3 98.6zM661.3 98.7L662.6 79.7L662.9 98.7zM292.9 98.7L291.9 80.1L294.7 98.7zM288.5 98.7L288.5 82.7L290 98.7zM609.8 98.8L610.1 74.3L611.5 98.8zM418.3 99L416.8 85.3L420 99z" fill="#88a42c"/><path d="M469.9 98.5L471.7 78.1L472.1 98.5zM603.8 98.5L603 78.9L605.9 98.5zM619.7 98.8L619.8 78.7L622.2 98.8zM602.1 98.8L600.7 76.5L604.3 98.8z" fill="#dfe456"/><path d="M622.6 98.6L623.5 80.2L624 98.6zM663.6 98.7L663.8 81.2L665 98.7zM605.5 98.8L605.9 72.7L607.8 98.8zM518.4 98.9L517.2 81.2L520.8 98.9z" fill="#a6c036"/><path d="M620 99L621 78.7L621.5 99zM406.1 99.1L405 79.7L408.3 99.1zM291.6 99.2L293.2 80.8L293.6 99.2zM226.1 99.2L227.2 82.5L228.5 99.2zM589.4 99.4L588.3 74.4L591.5 99.4zM416.5 99.4L416.1 85.5L418.2 99.4zM358 99.5L359.1 76.7L360.3 99.5z" fill="#9db832"/><path d="M292.7 99.1L294.2 85.9L294.8 99.1zM412.6 99.1L414.6 80.6L414.6 99.1zM596.8 99.2L599 79.7L599.1 99.2zM354.5 99.2L355.8 77.9L356.7 99.2zM466.1 99.2L467.1 82.9L468.2 99.2zM414.7 99.3L413.3 84.4L416.5 99.3zM294.7 99.5L294.2 85.7L296.6 99.5zM523.4 99.6L522.2 80.1L525.2 99.6zM612.3 99.6L611.2 80.7L614.3 99.6z" fill="#b4cc3c"/><path d="M531.8 99L530.2 80.8L533.5 99zM289.1 99.2L288.1 84.2L290.7 99.2zM226.6 99.3L227.4 83.4L228.2 99.3zM616.9 99.4L617.6 78L618.6 99.4zM584.9 99.4L585 82.5L587.3 99.4zM290.6 99.6L289.7 79.9L293 99.6zM601.6 99.6L600.7 72.6L603.7 99.6zM226.4 99.6L224.8 79.6L228 99.6zM479.6 99.6L478.3 80.9L481.6 99.6z" fill="#c9d846"/><path d="M229.6 99.1L228.1 79.5L231.4 99.1zM663.8 99.3L664.5 77.3L665.8 99.3zM413.7 99.3L413.3 85.1L415.2 99.3zM601.2 99.6L599.9 79.3L602.9 99.6zM227.7 99.6L227.7 82.4L229.9 99.6zM528.9 99.6L527.7 82.2L530.8 99.6z" fill="#88a42c"/><path d="M407.7 99.1L406.5 79.1L409.6 99.1zM613.6 99.2L614.1 81.4L615.3 99.2z" fill="#dfe456"/><path d="M658.7 99L658.9 75.5L660.2 99zM228.4 99.1L228.1 85.3L229.8 99.1zM522.8 99.2L522.5 83.5L524.4 99.2zM601.9 99.4L603.3 74.6L603.3 99.4zM476 99.4L476.1 84.9L478 99.4zM293.9 99.6L292.9 80L295.8 99.6zM472.3 99.6L473.5 80.3L474 99.6z" fill="#a6c036"/><path d="M604.1 99.7L603.7 79.7L605.5 99.7zM590 99.8L592.5 74.4L592.5 99.8zM414.4 100L413.9 78.7L416.7 100z" fill="#9db832"/><path d="M600.8 99.7L600.4 75.8L602.6 99.7zM605.8 99.8L607.8 81.3L607.8 99.8zM229.5 99.9L229.4 80.9L232 99.9zM537.3 100L536.2 83.3L539.4 100z" fill="#b4cc3c"/><path d="M613.2 99.6L614.9 74.5L615.2 99.6zM524.7 99.7L526.1 76.1L527 99.7zM536.9 99.7L537.6 79.2L538.7 99.7zM537 99.8L537.3 80.7L539 99.8zM531.1 99.8L530.7 83.3L533.5 99.8zM621.8 99.9L621.1 79L623.9 99.9zM481 99.9L481.5 83.7L483 99.9zM473.1 99.9L474.2 82.7L474.9 99.9zM355.1 100L355.9 84.4L356.6 100zM226.3 100L225.4 80.3L227.9 100zM287.3 100.1L288.6 83.7L288.7 100.1zM584.4 100.1L584 81.4L586.7 100.1z" fill="#c9d846"/><path d="M609.6 99.7L610.3 78.2L611.7 99.7zM619.3 99.7L621.2 79.5L621.3 99.7zM480.3 99.7L480.2 84.5L482.2 99.7zM660.8 99.7L663.1 73.3L663.2 99.7zM605.3 99.7L607.3 76.3L607.2 99.7zM413 99.8L413.6 78.2L414.6 99.8zM224.7 99.9L223.6 85.4L227.1 99.9z" fill="#88a42c"/><path d="M524 99.7L523.9 77.2L526 99.7zM606.1 99.8L604.4 71.9L607.6 99.8zM475.9 99.8L477.7 78.9L477.5 99.8zM420.7 99.9L422.5 81.1L422.2 99.9zM411.9 99.9L412.1 81.3L413.3 99.9zM615.4 100L614.2 76.6L617.2 100zM230.2 100.1L230.8 79.6L231.7 100.1z" fill="#dfe456"/><path d="M224.1 99.7L225.4 81.7L225.7 99.7zM409.4 99.7L408.5 78.4L410.9 99.7zM353.5 99.8L355.1 77.4L355.8 99.8zM294.8 99.8L294.1 79.8L297.3 99.8zM592.3 99.9L591.1 74.8L593.9 99.9zM617.7 100L616 76.5L619.2 100zM526.6 100.1L525.4 82.2L528.9 100.1z" fill="#a6c036"/><path d="M362.1 100.2L364.1 84.1L363.8 100.2zM627.8 100.3L626.5 77.9L629.3 100.3zM295.5 100.5L295.2 80.4L297.2 100.5zM534.7 100.5L535.6 76.7L536.2 100.5zM424.6 100.6L424.5 85.1L426.7 100.6zM365.6 100.6L365.6 78.2L367.9 100.6zM628.8 100.6L628.1 75.7L631.1 100.6z" fill="#9db832"/><path d="M617.6 100.2L616.1 79.2L619.5 100.2zM590.3 100.3L592.3 76.6L592.8 100.3zM227.8 100.3L227.6 85.3L229.4 100.3zM481.3 100.5L482.5 85L483.3 100.5zM294.1 100.6L295.3 82L296.3 100.6z" fill="#b4cc3c"/><path d="M624.7 100.2L624.7 80.2L626.1 100.2zM416.7 100.4L415.6 79.3L418.8 100.4zM615.5 100.5L617.9 76.5L618 100.5zM609.4 100.5L610.8 83.1L611.2 100.5zM472.1 100.6L471.8 82L473.8 100.6z" fill="#c9d846"/><path d="M413.6 100.1L413.8 85.3L415.5 100.1zM621.4 100.2L620 74.1L623.3 100.2zM224.6 100.2L223.8 86L226.2 100.2zM538.4 100.2L538.4 80.6L540.7 100.2zM530 100.3L530.2 81.5L532.1 100.3zM224.3 100.3L224.8 86.8L225.7 100.3zM419.8 100.3L418.9 79.3L422 100.3zM356.2 100.4L357.1 85.1L358.1 100.4zM358.5 100.4L359.2 84.5L360.4 100.4zM223.6 100.6L222 84.4L225 100.6z" fill="#88a42c"/><path d="M291.6 100.2L291.7 81.8L293.5 100.2zM227.4 100.3L226.3 80.5L229.8 100.3zM619.6 100.5L618.4 80.2L621.4 100.5zM288.9 100.5L288.4 79.1L291.3 100.5zM296.3 100.6L297.8 80.1L297.9 100.6zM361.3 100.6L361.7 85.1L363.1 100.6z" fill="#dfe456"/><path d="M536.9 100.2L535.9 83.8L538.9 100.2zM357.1 100.2L357.3 82L359.2 100.2zM530.5 100.2L529.1 82.6L532.3 100.2zM623 100.3L622.1 75.6L625 100.3zM605.8 100.3L608.2 79.7L608.1 100.3zM472.2 100.5L474 80.2L474.4 100.5zM359.5 100.5L360.1 78.3L361.1 100.5z" fill="#a6c036"/><path d="M360.1 100.7L361.8 82.2L362.2 100.7zM613.7 101L612.3 80.8L615.9 101zM227.6 101.4L226.4 81.1L229.5 101.4z" fill="#9db832"/><path d="M292.4 100.7L293.9 86.5L294.6 100.7zM473.1 100.7L472.5 83.2L475.3 100.7zM536.3 100.8L536.5 83.9L537.8 100.8zM229.3 100.8L231.6 82.7L231.5 100.8zM363 100.8L363.5 84.3L365 100.8zM545.7 101.1L547.5 77.8L547.8 101.1zM366 101.2L365.1 82.8L367.8 101.2zM361.3 101.2L360.8 82.4L363.6 101.2zM361.8 101.3L362.6 77.1L363.4 101.3z" fill="#b4cc3c"/><path d="M230.2 100.8L231.3 82.8L232.1 100.8zM359.3 100.8L360.8 81.9L361.7 100.8zM480.3 101.2L480.6 85.1L481.7 101.2zM226.2 101.2L228 80.8L228.4 101.2zM536.3 101.2L536.9 81.1L538.1 101.2zM549.7 101.2L551.7 79.1L551.6 101.2zM414.4 101.3L414.7 82.1L416.5 101.3zM534.6 101.3L534 81.1L536.8 101.3zM484.3 101.3L485.3 82.1L486.3 101.3z" fill="#c9d846"/><path d="M537 100.7L536.6 78.9L538.5 100.7zM538.7 101.3L538.8 84.8L540.1 101.3z" fill="#88a42c"/><path d="M291.8 100.7L293.5 79.7L293.9 100.7zM623.7 100.8L624.6 80.3L626.1 100.8zM225 100.8L224 82.3L226.7 100.8zM613 100.8L612.2 75.7L615.1 100.8zM536.2 101L537.3 76.3L538.6 101zM357.2 101.1L357.8 82.8L359 101.1zM359.9 101.2L358.7 79.7L361.5 101.2zM487.9 101.2L486.4 81L489.6 101.2zM620.3 101.3L622.2 79.2L622.7 101.3zM621 101.3L622.9 75L622.9 101.3z" fill="#dfe456"/><path d="M297.8 100.8L298.4 85.1L299.4 100.8zM481.5 100.8L481.9 81.8L484 100.8zM227.9 100.9L226.6 81.9L230.1 100.9zM357.1 101L357.5 85.2L359.5 101zM482.4 101.1L483.4 83L484.6 101.1zM425.2 101.3L423.6 82.8L426.8 101.3zM423.9 101.3L425.9 85.9L426.2 101.3z" fill="#a6c036"/><path d="M548.8 101.4L549.2 81.2L550.4 101.4zM226 101.4L225.7 81.4L227.7 101.4zM295.9 101.5L297.5 80.8L297.8 101.5zM617.5 101.6L616.3 75.5L619.1 101.6zM628.3 102L628.1 75.3L630.1 102zM484.6 102L486.3 82.9L486.2 102zM228.9 102.4L227.7 86.2L231.1 102.4z" fill="#9db832"/><path d="M227.3 101.9L228.2 80.8L228.8 101.9zM427.3 102.1L428.3 84.9L429.4 102.1zM225.6 102.1L227.4 82.4L227.4 102.1z" fill="#b4cc3c"/><path d="M623.5 101.4L622.7 79L625.6 101.4zM293.8 101.4L293 85.6L295.9 101.4zM488.2 101.5L487.7 76.4L490.5 101.5zM298.1 101.6L297.8 83.4L300 101.6zM553.3 101.7L554.5 82.7L555 101.7zM485.2 101.8L485.6 82.5L487.4 101.8zM433.8 102.3L435.5 80.2L435.6 102.3z" fill="#c9d846"/><path d="M358.6 101.5L357.4 84.3L360.9 101.5zM226.7 101.7L228.1 81.7L228.7 101.7zM229.1 101.8L230.6 80.3L230.9 101.8zM299.6 101.8L301.5 81.6L302 101.8zM297.8 102.1L297.6 83.5L299.3 102.1zM232.6 102.1L233.7 83L234.3 102.1zM496.4 102.1L498.4 85.9L498.6 102.1zM364.7 102.3L366.3 80.1L366.5 102.3zM492.6 102.3L492.9 78L495 102.3z" fill="#88a42c"/><path d="M426.7 101.6L427.9 79L428.6 101.6zM544.5 101.8L543.6 80.1L547 101.8zM626.9 102L628.4 72.7L628.4 102zM626.3 102.1L628 81L628 102.1zM550.2 102.3L548.8 85.8L551.7 102.3z" fill="#dfe456"/><path d="M625.4 101.4L627.5 73.6L627.8 101.4zM293.5 101.4L292.1 87L295.1 101.4zM627 101.4L627.7 73.9L628.4 101.4zM358.2 101.5L359.9 82L360.3 101.5zM484.9 101.6L486 77.3L486.8 101.6zM538.7 101.7L539 79.8L540.9 101.7zM430.3 101.8L431.7 79.3L432.4 101.8zM551.4 101.9L551.2 75.3L553.6 101.9zM228.3 102.3L228 84.6L229.7 102.3z" fill="#a6c036"/><path d="M231.1 102.5L232.5 88L233 102.5zM425.9 102.6L424.9 84.8L427.4 102.6zM557.2 102.7L559.5 82.7L559.6 102.7zM553.9 102.8L555.5 78.5L555.8 102.8zM493.3 102.9L494.8 85.1L495 102.9z" fill="#9db832"/><path d="M550.8 102.5L550.2 79L553.1 102.5zM299.7 102.6L300.5 79.6L301.3 102.6zM430.7 102.7L432.7 82.2L432.4 102.7zM369.1 102.7L370.4 85L371.2 102.7zM421.7 102.8L421.2 86.1L423.4 102.8zM485.2 102.8L486 85.3L486.7 102.8z" fill="#b4cc3c"/><path d="M365.8 102.4L364.6 80.1L367.3 102.4zM560.3 102.4L560.7 79.5L562.6 102.4zM423.7 102.5L425.5 81.6L425.9 102.5zM488.5 102.6L487.4 79.9L490.1 102.6zM368.5 102.6L368.1 78.4L370.6 102.6zM296 102.6L297.4 79.9L297.6 102.6zM557.8 102.9L558.5 84.5L559.7 102.9zM365.6 102.9L365.3 82.1L367.2 102.9z" fill="#c9d846"/><path d="M560 102.4L561.7 81L561.4 102.4zM366.3 102.5L366.9 84.4L368.6 102.5zM369.2 102.7L370.5 85.2L371.7 102.7zM563.6 102.8L562.2 81L565.6 102.8zM428.8 103L428.4 83.9L430.3 103z" fill="#88a42c"/><path d="M552.5 102.5L552.2 78L554.7 102.5zM232.1 102.6L233.2 82.5L233.8 102.6zM229.1 102.7L228.5 88.4L230.9 102.7zM302.7 102.8L303.5 84.2L304.1 102.8zM369.6 103L369.2 86.2L371.9 103zM435.8 103L435.9 79L437.4 103z" fill="#dfe456"/><path d="M360.3 102.4L360.1 81.4L362.1 102.4zM491.4 102.5L490.3 81.2L493 102.5zM421.3 102.5L422.3 82.8L423.4 102.5zM556.4 102.6L557.8 81.4L557.8 102.6zM547.9 102.6L547.1 77.7L549.9 102.6zM425.1 102.6L425.7 85.5L426.8 102.6zM367.2 102.7L366.3 81.6L369.4 102.7zM372.6 102.8L372.6 83.9L374.1 102.8zM437.2 102.8L437.4 87.7L439.6 102.8zM231.9 102.8L232.9 84.1L233.3 102.8z" fill="#a6c036"/><path d="M231.1 103.2L230.5 86.5L232.8 103.2zM296.9 103.2L299.3 84.2L299.4 103.2zM565.7 103.4L565.5 82.4L567.6 103.4zM365.9 103.4L366.3 83.8L367.5 103.4zM425.8 103.5L427.3 87L428.2 103.5zM567.9 103.7L569.3 83.4L570.3 103.7zM495.3 103.8L495.2 78.2L497.2 103.8zM375.3 103.8L375.2 83.2L377.4 103.8zM377.8 103.9L377.8 79.5L380 103.9z" fill="#9db832"/><path d="M552.9 103.1L551.4 80.5L554.6 103.1zM555.8 103.1L555 77.7L557.7 103.1zM553.7 103.2L554.5 85.2L555.8 103.2zM433.4 103.2L434.5 88.1L435.9 103.2zM432.2 103.3L432.7 87.5L434.7 103.3zM372.1 103.5L371.6 84L373.7 103.5zM228.3 103.6L227.3 82.1L230.7 103.6zM365.9 103.7L367.6 83.4L368 103.7zM438.1 103.9L438.8 81.5L440.2 103.9z" fill="#b4cc3c"/><path d="M491.9 103L491.1 80.9L493.8 103zM501 103L499.8 85.1L502.9 103zM437.1 103.3L437.2 86.7L438.7 103.3zM301.4 103.5L302.3 81.7L302.9 103.5zM374.3 103.8L376.2 77.6L375.9 103.8zM229.2 103.8L229.3 90L231.6 103.8zM504.8 103.9L503.9 78.3L507 103.9z" fill="#c9d846"/><path d="M228.6 103.7L229.6 86.5L230.1 103.7zM494.7 103.7L497.1 86.7L497.2 103.7zM570.8 103.8L569.7 81.5L572.6 103.8zM556.9 103.9L558.1 86.2L558.5 103.9z" fill="#88a42c"/><path d="M558.9 103L557.3 86.1L560.6 103zM300.4 103.2L299 82.7L302.5 103.2zM372 103.5L371.7 81.7L374 103.5zM562.5 103.5L563.5 77.4L564.4 103.5zM373.2 103.5L373.2 83.9L374.9 103.5zM501.1 103.7L501 83.1L503 103.7zM565.3 103.7L564.5 80.2L567.8 103.7z" fill="#dfe456"/><path d="M430.7 103L432.2 85.6L433 103zM557.5 103.2L555.9 80.2L559.1 103.2zM234.8 103.2L235.7 84.3L237 103.2zM436.7 103.7L436.4 80L438.5 103.7z" fill="#a6c036"/><path d="M570.2 104L568.8 79.1L571.9 104zM306.1 104.1L305 80.1L308.3 104.1zM442.7 104.5L441.8 85.5L444.2 104.5z" fill="#9db832"/><path d="M436.2 104L437.6 81.3L437.8 104zM231.9 104L233.7 89.9L234.3 104zM569.1 104.1L571.3 81.5L571 104.1zM494.8 104.1L495.7 82L496.3 104.1zM562.7 104.1L561.3 83.7L564.2 104.1zM504.2 104.3L504.2 86.7L505.7 104.3zM557.3 104.4L558.4 80L559.1 104.4zM235.5 104.4L236.5 90.3L237.2 104.4zM568.5 104.4L567.7 77L571 104.4zM440.8 104.6L440.7 82.6L442.5 104.6z" fill="#b4cc3c"/><path d="M496 104.1L496.9 87.1L498.1 104.1zM574.5 104.4L573.8 81.6L576.8 104.4zM562.7 104.4L562 82.1L564.7 104.4zM231.3 104.5L231 85.1L233.3 104.5z" fill="#c9d846"/><path d="M561.2 103.9L560.4 84.2L563.5 103.9zM435.2 104.1L434.7 82.8L437.2 104.1zM441.6 104.1L442.1 85.4L443.5 104.1zM563.3 104.2L562.1 85L565 104.2zM573 104.2L571.7 76.6L574.6 104.2zM565.2 104.3L564.7 79.4L567.6 104.3zM572.2 104.4L573 79.4L573.7 104.4zM371.5 104.5L371.2 82.7L373.7 104.5zM503.8 104.6L503.3 87.9L505.5 104.6z" fill="#88a42c"/><path d="M506 104L507 80.8L507.8 104zM493.3 104L492.7 82.8L495.5 104zM563.7 104L564.5 82.8L565.6 104zM301 104L302.9 80.5L303.3 104zM566.3 104L567.7 83.8L567.8 104zM497.4 104.1L497.9 86.3L499 104.1zM493.6 104.3L492.7 88.1L496 104.3zM499.4 104.3L500.2 78.7L501.2 104.3zM570.8 104.5L571.9 81.4L573 104.5zM232.6 104.5L234 82.1L234.5 104.5z" fill="#dfe456"/><path d="M230.2 104.1L229.6 89.6L232.6 104.1zM558.9 104.3L560.7 78.8L560.8 104.3zM558.1 104.5L556.9 85.9L559.9 104.5zM565.1 104.5L564.2 77L567.1 104.5z" fill="#a6c036"/><path d="M504.5 104.8L504.4 85.7L506.5 104.8zM231.1 105L229.7 89.2L232.8 105zM516.2 105L516.2 77.8L518.2 105zM304.8 105.1L306.2 82.5L306.4 105.1zM511.1 105.3L513.2 88.6L513 105.3zM441.3 105.4L441.2 86.4L442.8 105.4zM569.4 105.4L568.4 86.7L571.8 105.4z" fill="#9db832"/><path d="M503.9 104.6L502.7 78.4L506.3 104.6zM502.1 104.7L504 86.8L503.6 104.7zM305.4 104.8L306.6 84.7L306.8 104.8zM573.5 104.9L572.3 80.3L575.6 104.9zM233.5 104.9L232.5 82.9L235 104.9zM438.5 105L437.4 84.3L440.9 105zM305.8 105L307.6 83.3L307.2 105zM305 105.3L305.3 82.5L307.1 105.3z" fill="#b4cc3c"/><path d="M437.5 104.6L436.7 80.1L440 104.6zM502.7 104.7L502.9 83.1L504.9 104.7zM499.6 104.8L500.1 82.8L501.5 104.8zM382.9 105L383.6 81.5L384.8 105zM303.4 105.1L302.6 82.4L305.5 105.1zM566.3 105.3L565.6 87.2L567.9 105.3z" fill="#c9d846"/><path d="M571.6 104.8L572 76.3L573 104.8zM568.9 104.8L567.9 80.4L571 104.8zM504.9 104.9L506.2 83.1L506.6 104.9zM575.7 104.9L575.5 84.6L577.7 104.9zM505.2 105L505.7 83.9L506.7 105zM440.5 105L439.2 83L442.3 105zM442.3 105.4L444.2 80.8L444 105.4z" fill="#88a42c"/><path d="M304.6 104.6L305.2 81.7L307 104.6zM577.8 104.8L578.8 86.2L579.9 104.8zM508.2 105L507.4 79L510 105zM445.2 105L444.8 80.7L447.5 105zM381.5 105.3L381.3 78.6L383.2 105.3zM300.9 105.3L299.3 82.8L302.5 105.3z" fill="#dfe456"/><path d="M499.8 104.9L498.3 79L501.7 104.9zM434.3 105.1L436.1 89.5L436.4 105.1zM303.8 105.2L305.5 88.2L305.2 105.2zM517.2 105.2L518.8 83.1L519.7 105.2zM377.6 105.3L378.1 87.2L379.1 105.3zM517.1 105.4L518.7 78.1L518.8 105.4z" fill="#a6c036"/><path d="M505 105.4L503.6 82.9L506.4 105.4zM438.9 105.4L441 83.9L441.4 105.4zM228.8 105.5L230.8 86.4L231.3 105.5zM231.2 105.5L229.8 86.8L232.9 105.5zM306.9 105.6L305.8 81.6L309 105.6zM307.1 105.6L305.8 81.9L309.3 105.6zM378.1 105.9L379.2 79.2L380.5 105.9zM514.8 106L514.4 85.8L516.8 106zM516.9 106L518.1 87.4L518.9 106zM580.5 106.2L581.7 86.5L582.8 106.2z" fill="#9db832"/><path d="M231.7 105.4L232.2 87.1L233.6 105.4zM447.4 105.5L449.3 86.8L449.1 105.5zM377.2 105.7L376 82.4L379.2 105.7zM581.9 105.8L582.2 77.5L583.3 105.8zM451.9 106.2L454.2 80.7L454.3 106.2zM305 106.2L303.7 90.3L306.5 106.2z" fill="#b4cc3c"/><path d="M445.2 105.5L445.7 80.6L447.1 105.5zM576 105.6L576.6 84.6L577.9 105.6zM514 105.8L515.6 88.9L515.6 105.8zM576.5 105.9L578.7 84.4L578.9 105.9zM303.5 106L304.2 86L305.4 106zM452.6 106.1L453.3 83.4L454.7 106.1z" fill="#c9d846"/><path d="M516.5 105.4L514.8 78.9L518.1 105.4zM580.6 105.4L579.4 79.3L582.4 105.4zM232.1 105.5L234.2 86.9L233.9 105.5zM507.8 105.6L508 82.9L509.4 105.6zM230.8 105.6L229.6 89.2L232.4 105.6zM444.7 105.6L444.9 81.9L446.8 105.6zM381.3 105.8L380 83.2L383.1 105.8zM376 105.8L376.4 87.8L377.8 105.8zM375.5 105.9L375.9 85.2L377 105.9zM379.8 105.9L380 82.2L382 105.9z" fill="#88a42c"/><path d="M437.2 105.5L438.3 82.3L439.5 105.5zM509.1 105.7L508.4 86.9L510.6 105.7zM514.7 105.8L515.7 78.6L517.1 105.8z" fill="#dfe456"/><path d="M505.3 105.4L504.8 79.1L507.2 105.4zM506.6 105.5L506.3 87.8L508.3 105.5zM233.9 105.8L235 87.6L236 105.8zM508.3 106L510.4 89L510.1 106zM580.1 106.2L579.7 77.2L582.5 106.2z" fill="#a6c036"/><path d="M386.2 106.3L386.6 81.5L388.1 106.3zM516.9 106.4L516.5 85.5L518.6 106.4zM452.7 106.6L454 81L455 106.6zM311.6 106.7L313.6 83.9L313.5 106.7zM232.7 106.7L234.1 90.4L234.7 106.7zM308.2 106.9L308.9 87.2L310.2 106.9zM389 107.1L388.1 85.9L390.5 107.1z" fill="#9db832"/><path d="M309.9 106.3L309.3 88L311.9 106.3zM454.3 106.9L456 87.3L456.8 106.9zM453.1 107L452.1 90.5L455.6 107zM449 107L449 82.1L451 107z" fill="#b4cc3c"/><path d="M451.3 106.3L452 81.5L453.2 106.3zM518.6 106.4L518.6 87.8L520.4 106.4zM379.5 106.7L381.5 87L381.5 106.7zM524.7 106.8L525 84L526.3 106.8zM309.3 106.9L311.3 87.2L311.1 106.9zM517.9 107.1L519.5 82.7L519.8 107.1zM312.7 107.2L312 88.8L314.4 107.2zM232.9 107.2L232.7 89.9L235.2 107.2z" fill="#c9d846"/><path d="M374.7 106.2L373.2 86.8L376.3 106.2zM379.6 106.4L381 83.2L381.8 106.4zM445.8 106.5L446.9 87L448.2 106.5zM575.4 106.7L577.5 78.7L577.8 106.7zM451.3 106.8L453.1 85.6L453 106.8zM306 106.8L306.2 90.6L308.5 106.8zM442.8 106.9L444.9 82.1L445.3 106.9zM381.2 107.1L382.5 79.3L383.2 107.1zM383.8 107.1L382.4 80.8L385.9 107.1zM523.8 107.1L522.6 85.2L526.1 107.1z" fill="#88a42c"/><path d="M314.3 107.2L316.1 81.4L316.5 107.2z" fill="#dfe456"/><path d="M309.5 106.4L309.9 86L311 106.4zM449.7 106.5L448.9 89.6L451.7 106.5zM449.7 106.6L450 85.1L451.5 106.6zM577.3 106.6L576.6 82.5L579 106.6zM458 106.8L458.3 88.2L460.1 106.8zM521.7 106.8L520 85.5L523.3 106.8zM521 106.8L520.3 79.9L522.8 106.8zM455.8 106.9L456.8 84.5L457.7 106.9zM456 107.1L455.5 82.6L458.3 107.1zM524.8 107.2L526.7 82.7L526.4 107.2z" fill="#a6c036"/><path d="M452.6 107.5L454.4 90.1L454.7 107.5zM388.5 107.6L388.9 80.4L390.7 107.6zM387.9 107.8L387.7 81.7L389.5 107.8z" fill="#9db832"/><path d="M514.9 107.3L514.1 84.9L516.8 107.3zM524.7 107.3L523.6 82.9L526.2 107.3zM515.3 107.3L516 87.8L516.9 107.3zM386.8 107.4L388.4 79.8L388.7 107.4zM233.8 107.4L233.8 90L235.5 107.4zM452.8 107.4L451.9 84.7L455 107.4zM519.5 107.8L521.7 83.9L521.8 107.8zM236.2 107.9L236.9 92.3L238.7 107.9zM315.6 107.9L314.2 86.5L317 107.9zM386.1 107.9L388.1 84.3L387.7 107.9z" fill="#b4cc3c"/><path d="M312.2 107.4L313 81.4L313.8 107.4zM233.1 107.5L231.6 92.1L234.6 107.5zM528.7 107.6L527.7 86.2L530.7 107.6zM386.8 107.8L386 80.3L389.1 107.8zM526.4 107.9L527.8 85.1L528.6 107.9zM532.1 108L533.4 87.8L534.1 108zM388.2 108.1L388 80.1L390.7 108.1z" fill="#c9d846"/><path d="M309 107.3L311.1 82.8L311.3 107.3zM448.6 107.3L448.6 82.6L450.8 107.3zM452.7 107.5L451.4 80.8L454.1 107.5zM458.7 107.7L459.7 83.2L460.8 107.7zM450.7 107.9L450.5 88.8L452.7 107.9zM233.6 108L232.5 83.9L235.7 108z" fill="#88a42c"/><path d="M517.9 107.2L516.5 81.7L519.7 107.2zM308.7 107.3L307.6 83.6L311.1 107.3zM383.2 107.4L384.2 83.3L384.6 107.4zM236.8 107.4L235.7 90.5L238.4 107.4zM527 107.6L526.6 84.4L528.9 107.6zM447.7 107.7L449.7 87.1L449.7 107.7zM523.4 107.7L522.6 81L525.2 107.7zM387.4 107.7L388.7 85.7L389.4 107.7zM310.1 108L309.9 90.7L311.5 108z" fill="#dfe456"/><path d="M237 107.3L236.9 92.2L239 107.3zM524.6 107.5L526.1 88L526.8 107.5zM523.8 107.6L524.9 81.7L525.7 107.6zM308.7 107.8L308.6 86.7L310.3 107.8zM459.8 108L461.2 86.1L461.5 108z" fill="#a6c036"/><path d="M518.8 108.2L519.9 85.8L521.1 108.2zM234.2 108.4L235.2 92L236.7 108.4zM457.4 108.6L456.6 85L459.5 108.6zM523.4 108.6L524.7 86.9L524.9 108.6zM318.9 108.9L320.5 83.2L321 108.9zM239.9 109.2L239.8 92.7L242.1 109.2z" fill="#9db832"/><path d="M530.2 108.1L530.7 81.2L532.1 108.1zM453.9 108.1L454.7 82L455.3 108.1zM393.6 108.7L393.3 79L396 108.7zM455.7 108.9L456.9 86.9L457.1 108.9zM463.6 108.9L462.8 87.7L465.1 108.9zM526.8 109.2L527.3 86.2L528.2 109.2z" fill="#b4cc3c"/><path d="M236.2 108.3L235.1 84.6L238.6 108.3zM384 108.4L385.3 86.6L386.4 108.4zM452.3 108.6L451.8 85L454.8 108.6zM459 108.7L460.2 90L460.9 108.7zM312.2 108.9L312.8 82.3L313.6 108.9z" fill="#c9d846"/><path d="M239.1 108.1L238.2 88.3L241.6 108.1zM238.8 108.2L238.4 87.2L241.2 108.2zM311.9 108.2L311.3 83.6L314 108.2zM390.4 108.4L392 86.6L392.1 108.4zM314.1 108.4L315.8 91.9L316.6 108.4zM237.5 108.5L239.2 86.9L239.3 108.5z" fill="#88a42c"/><path d="M524.7 108.3L525.2 82.6L526.1 108.3zM389.9 108.3L390.7 85.8L392.2 108.3zM238.6 108.4L237.1 89.8L240.2 108.4zM462.4 108.5L461.7 87.3L464 108.5zM454.5 108.7L456.2 88.9L456.6 108.7zM460.5 108.7L462.1 90.6L461.9 108.7zM526.2 108.8L527.6 84.6L527.8 108.8zM233.9 109.1L233 84.4L236.4 109.1z" fill="#dfe456"/><path d="M388.7 108.3L388.4 81.8L390.2 108.3zM525.3 108.3L527.7 86L527.8 108.3zM457.3 108.4L456.2 81.4L459.2 108.4zM455.4 108.5L457.2 83.4L457.7 108.5zM237.4 108.7L238.9 92L239.5 108.7zM391.4 108.9L390.5 88.8L392.9 108.9zM460.7 108.9L460 82.6L462.3 108.9zM312 109L313.1 90.5L314.4 109zM529.5 109.2L531 88.2L531.4 109.2z" fill="#a6c036"/><path d="M467 109.3L466.5 86.5L469.2 109.3zM242 109.5L241.3 91.6L244.1 109.5zM319.6 109.6L318.3 84.8L321.1 109.6zM395.8 110.1L397.1 83.6L397.9 110.1zM473.8 110.2L473.2 83.6L475.7 110.2zM313.7 110.5L312.8 92.9L315.7 110.5z" fill="#9db832"/><path d="M241.3 109.3L240.3 88.9L243.1 109.3zM463.5 109.4L465.2 86.2L465 109.4zM236.8 109.7L236.3 88.8L238.4 109.7zM318.2 109.9L317.7 86.4L319.7 109.9zM463.7 110.6L464 88.8L465.5 110.6zM391.3 110.6L390.1 89.9L393.6 110.6zM240.9 111L239.3 85.6L242.5 111z" fill="#b4cc3c"/><path d="M237.7 109.5L237.9 87.6L240 109.5zM391.6 109.6L390.7 84.4L393.8 109.6zM314.1 109.8L316.1 93.1L316 109.8zM466.2 110.3L465.9 90.3L468.6 110.3zM238.5 110.4L240.4 86.8L240.2 110.4zM242.7 110.8L244.4 92.6L244.5 110.8z" fill="#c9d846"/><path d="M392.8 109.5L393 81.3L394.6 109.5zM238.6 109.7L238.7 84.6L240 109.7zM239.5 109.7L238.1 90.8L240.9 109.7zM320.3 110.6L322.1 91.2L322.3 110.6zM240.7 110.7L242.7 93.6L243 110.7zM242.5 110.8L242.6 87.6L244.6 110.8z" fill="#88a42c"/><path d="M315.1 109.6L317.1 91.4L317.1 109.6zM396 109.7L397.7 90.2L397.6 109.7zM462.9 109.7L462.5 87.6L464.5 109.7zM242.1 110L241.2 92.9L244.2 110zM315.8 110.1L316.3 88.7L317.4 110.1zM316.3 110.1L315.4 86.5L318.7 110.1zM389.2 110.3L389.2 87.5L391.1 110.3z" fill="#dfe456"/><path d="M240.9 109.5L239.8 86.4L243.4 109.5zM468.4 110.1L467.9 87.8L470.1 110.1zM242.9 110.1L241.7 89.2L244.4 110.1zM471.5 110.4L472.1 84.2L473 110.4zM237.7 110.4L239.7 93.6L239.3 110.4zM468.4 110.4L467.7 84.6L470.9 110.4zM397.7 110.6L397.4 84.5L399.9 110.6zM319 110.7L318.6 83L321.1 110.7z" fill="#a6c036"/><path d="M404.5 111.4L405.3 88.7L406.4 111.4zM472.4 111.5L472 83.3L474.3 111.5zM320.4 111.6L321.9 93L322.3 111.6zM238.8 111.7L240.8 88.7L240.9 111.7zM470.9 111.8L470.4 85L473.1 111.8zM243.2 112.4L242.1 89.9L244.7 112.4z" fill="#9db832"/><path d="M242.7 111.2L242.6 93.3L244.8 111.2zM239.5 111.2L237.9 85.9L241 111.2zM399.7 111.4L398.8 85.1L401.3 111.4zM479.1 111.6L479.6 90.4L480.6 111.6zM398.7 111.8L397.9 88.2L400.4 111.8zM320.9 112L320.4 94.3L322.3 112zM407.8 112.3L409.6 90.5L409.4 112.3zM400.7 112.4L400.9 91.3L402.7 112.4z" fill="#b4cc3c"/><path d="M316.5 111.4L316.9 85.8L318.3 111.4zM321.4 112.1L321 85.9L323.1 112.1zM238 112.3L237 94.3L239.9 112.3z" fill="#c9d846"/><path d="M241.4 111.1L242.9 89.9L243.2 111.1zM316.2 111.2L316.5 89.7L317.7 111.2zM399.6 111.3L401.6 85.2L401.5 111.3zM469.9 111.5L471.2 85.4L471.5 111.5zM321.8 111.7L323.9 87.5L323.8 111.7zM404.5 111.7L406 88.1L406.5 111.7zM473.4 111.7L473.7 90.1L475.7 111.7zM476 111.8L476.4 93.6L478.3 111.8zM478.6 112.1L480 92L480.2 112.1zM477.1 112.2L476.4 93.9L478.7 112.2zM396 112.4L398.2 85.3L398.3 112.4z" fill="#88a42c"/><path d="M475.9 111.3L477.7 91L477.5 111.3zM397.5 111.3L399.5 91.2L399.2 111.3zM318.6 111.5L319.1 94.1L320.5 111.5zM323.7 111.6L322.8 87.3L325.3 111.6zM400.2 111.6L401.8 90.1L401.8 111.6zM473.3 111.9L472.3 84L474.9 111.9z" fill="#dfe456"/><path d="M477.5 111.3L479 87.3L479.8 111.3zM318.5 111.4L319.2 84.4L320.6 111.4zM396.6 111.6L395.1 89.2L398.5 111.6zM402.2 111.7L403.2 86.8L403.8 111.7zM239.7 112.2L241.7 95.7L241.7 112.2zM401.5 112.5L402.9 92.7L403.1 112.5z" fill="#a6c036"/><path d="M478.8 112.7L478.5 86.9L480.8 112.7zM240.7 113.1L242.2 94.1L242.4 113.1zM239 113.1L239.6 94.7L241.5 113.1zM243.8 113.2L244.7 92.8L245.8 113.2zM329 114.1L328.2 87.7L331.4 114.1z" fill="#9db832"/><path d="M401.7 112.7L402.9 92.8L404.1 112.7zM242.8 112.7L242.9 90.7L244.3 112.7zM480.8 112.7L481.8 88.4L482.2 112.7zM407.5 112.8L409.7 90.9L409.9 112.8zM239.7 113.2L240.7 86.6L242.1 113.2zM409.7 113.5L409.6 86L412.1 113.5zM408.9 113.6L410.2 90.2L410.5 113.6z" fill="#b4cc3c"/><path d="M326 112.7L328.1 91.4L327.7 112.7zM402.7 112.9L404.1 84.7L404.2 112.9zM401.2 113.1L403.1 82.3L403.5 113.1zM246.4 113.4L245.7 90.6L248.8 113.4zM410.6 113.4L411.9 84.6L412.8 113.4zM405.5 113.9L404.5 91.3L407 113.9zM411.6 114.2L410.6 91L413.8 114.2z" fill="#c9d846"/><path d="M328.3 113.2L329.8 85.9L329.8 113.2zM328.1 113.3L328.6 88.5L330.3 113.3zM243.9 113.3L245.4 96.3L245.7 113.3zM243.6 113.3L242.7 94.8L245.2 113.3zM403.4 113.6L402 89.8L405.2 113.6zM402.4 113.7L401.2 89.9L404.4 113.7zM327.9 114L329.3 86.6L329.3 114z" fill="#88a42c"/><path d="M328.6 112.9L326.9 87.6L330.1 112.9zM245 113.2L246.8 88.3L247.1 113.2zM328.9 113.4L330.2 84.3L330.7 113.4zM323.8 113.8L324.7 88L325.6 113.8zM324 113.9L323.6 95L326 113.9zM243.5 114.2L242.9 92.5L245.8 114.2zM329 114.4L330.1 86.2L330.4 114.4z" fill="#dfe456"/><path d="M479.6 112.9L478.9 93.7L481.6 112.9zM329 113.5L330.9 94.7L330.6 113.5zM408.7 113.7L408.1 88.1L410.3 113.7zM322.4 113.7L322.6 87.1L324.8 113.7zM240.3 113.9L239.5 86.7L241.8 113.9zM322.9 114L323.6 86.6L324.6 114zM416.5 114.3L418.2 86.7L418 114.3z" fill="#a6c036"/><path d="M248.6 115.4L247.7 90.8L250.5 115.4zM329 116L331.2 92.2L331.3 116zM331.6 116.5L331.8 95L333.7 116.5z" fill="#9db832"/><path d="M411.1 114.9L413.2 92.7L413.5 114.9zM407.1 115.1L408.5 84.4L409.1 115.1zM246.6 115.2L246.3 93.6L248.7 115.2zM243.7 115.4L244.1 94.3L245.8 115.4zM412.3 115.5L411.6 92L413.9 115.5zM333.7 115.5L335.3 86.6L335.5 115.5z" fill="#b4cc3c"/><path d="M327.3 114.5L328.7 94.1L328.8 114.5zM411.7 114.5L412.3 88.4L414.1 114.5zM325.2 114.7L326.5 91.5L327.6 114.7zM248 115.1L249.6 93.7L249.9 115.1zM328 115.5L327.2 91.9L329.8 115.5zM332.6 116.2L332.9 89.7L334.3 116.2zM250.8 116.5L252.6 94.7L252.4 116.5zM413.8 116.5L415.9 90.3L415.8 116.5z" fill="#c9d846"/><path d="M328 114.6L328.9 88.7L330.3 114.6zM410.5 114.6L409 94.2L412.4 114.6zM334.3 115L334 90.5L336.5 115zM325.2 115.3L326.6 88.7L327 115.3zM247.1 115.3L248 87L248.9 115.3zM245.8 115.6L246.5 91.3L247.6 115.6zM244.7 115.6L246.4 88.3L247.1 115.6zM246.8 115.9L245.5 91L248.3 115.9zM331.9 115.9L331.4 87.4L334.4 115.9zM332 116.2L332.4 94L333.5 116.2zM330.5 116.4L331.9 85.9L332.8 116.4z" fill="#88a42c"/><path d="M328.9 114.4L328.6 92.3L330.4 114.4zM247.9 115L247 96.7L250.2 115zM411.2 115L412.9 82.9L413.1 115zM331.2 115.4L330.7 93L333 115.4zM331.1 115.4L330 89L332.8 115.4zM244.3 116.1L245.7 95.7L246.1 116.1zM412.6 116.2L412.2 92.7L414.6 116.2zM328.1 116.3L330.4 94L330.1 116.3zM329.1 116.4L328.9 87L331 116.4z" fill="#dfe456"/><path d="M241.4 114.9L242.5 87.7L243.7 114.9zM325.7 115.2L326.4 94.9L327.7 115.2zM248.5 116.3L247.1 98.8L250.4 116.3z" fill="#a6c036"/><path d="M333.5 116.8L334 95L335.6 116.8zM246.4 117.3L246.9 95.2L248.6 117.3zM248.2 117.5L247.4 93L250.7 117.5zM251.5 117.6L253 96.8L254 117.6zM333.2 118.4L333.6 94.3L335 118.4zM338.8 118.6L338.3 89L340.4 118.6zM333.9 118.6L334.5 96.1L336.2 118.6zM339.5 120.8L338.3 92L341.3 120.8zM255.4 121.4L256.1 96.1L257.4 121.4z" fill="#9db832"/><path d="M337.3 117.5L337.9 93L339.3 117.5zM247.3 117.8L248.7 94.7L249 117.8zM253.3 118.8L254.6 96.8L255.5 118.8zM251.5 119.4L253.4 91.5L253.4 119.4zM246.9 119.6L247.7 96.1L248.9 119.6zM253 119.7L251.5 100.6L254.7 119.7zM249.7 119.9L251.7 101.4L251.9 119.9zM344.5 121.7L345.1 89L346.9 121.7z" fill="#b4cc3c"/><path d="M337.8 118.7L337.5 93.7L339.9 118.7zM253.8 118.8L253.3 94.3L255.2 118.8zM251.4 118.9L253 94.6L252.9 118.9zM252.5 119.4L252.9 98.3L254.9 119.4zM255.1 119.7L255.9 96.8L257 119.7zM341.7 120.7L340.3 90.6L343.8 120.7z" fill="#c9d846"/><path d="M334.8 117.6L335.4 86.8L337.3 117.6zM245 117.8L246.9 97.2L246.5 117.8zM334.8 118.8L337.2 95.8L337.1 118.8zM339.8 119.5L341.4 88.5L341.4 119.5zM343.7 120.3L342.4 88.5L345.8 120.3zM257.1 120.4L258.6 98.4L258.6 120.4zM346.2 121L345.5 87.9L348.3 121zM257.3 121.6L257.6 97.5L259 121.6z" fill="#88a42c"/><path d="M334.2 118.1L336.1 93.7L336.4 118.1zM338.7 119.3L339.2 92.2L340.7 119.3zM342.5 120.1L343.2 92.5L344.1 120.1zM249 120.3L248.6 100.7L251.3 120.3z" fill="#dfe456"/><path d="M330.8 117.1L331.1 89.1L332.7 117.1zM250.4 117.3L252.3 93.7L252.6 117.3zM341.3 120.3L341.7 92.4L342.8 120.3zM339.6 120.3L337.8 92.3L341 120.3zM344.6 121.1L345.3 97.2L346.8 121.1z" fill="#a6c036"/><path d="M344.5 121.8L344.6 100L346.6 121.8zM257.7 122.9L258.7 98.9L259.2 122.9zM255.3 125.2L256.1 100.8L257.2 125.2zM261 126.7L261.3 94L263.2 126.7zM259 127.1L258.4 93.9L260.9 127.1z" fill="#9db832"/><path d="M254.5 122.9L253.1 95.2L256.2 122.9zM258.2 123.7L256.5 95.1L259.6 123.7zM259.5 125.2L261.3 95.3L261.4 125.2zM260.6 126.2L258.9 93.1L262.1 126.2z" fill="#b4cc3c"/><path d="M253.4 122.1L254.3 92.8L255.9 122.1zM255 123L255.3 93.9L256.7 123zM258.5 125.6L256.7 102.4L259.9 125.6zM262 126.9L263.8 106.3L264.1 126.9zM257.9 127.5L259.2 98.5L259.3 127.5z" fill="#c9d846"/><path d="M257.9 122L257.9 99.6L260.1 122zM255 124.2L255.7 97.1L256.7 124.2zM260.2 126.1L259.8 102.4L261.7 126.1z" fill="#88a42c"/><path d="M341.7 122.3L341.9 101.8L343.2 122.3zM257.3 123.2L259.5 101L259.4 123.2zM263.8 125.9L264.1 99.4L265.5 125.9zM260.8 126L261.3 96L262.4 126zM256.5 127.5L257.2 103.3L258.5 127.5z" fill="#dfe456"/><path d="M260.1 123.4L262.2 91.8L262.6 123.4z" fill="#a6c036"/><g filter="url(#bl)"><path d="M 332.8 462.6 C 329.4 447 338 436.6 362.3 432.2 C 378 431.4 381.4 435.7 393.6 434.8 C 433.5 432.2 485.6 425.3 516.8 422.7 L 525.5 429.6 C 502.9 436.6 490.8 438.3 485.6 445.2 C 468.2 453.9 433.5 457.4 409.2 459.1 C 395.3 460 388.4 455.7 381.4 449.6 C 378 460.9 364.1 467.8 346.7 466.9 C 338 466.4 333.7 465.2 332.8 462.6 Z" fill="#21705a"/></g><polygon points="504.7,311.6 508.1,324.6 487.3,333.3 464.8,342.8 457.8,346 455.7,339.4 468.2,332.1 487.3,322" fill="#b27e6e" /><polygon points="504.7,311.6 508.1,324.6 496,329.8 492.5,319.4" fill="#a06a60" /><polygon points="558.5,311.6 556.7,324.6 577.6,334.7 596.7,343.2 605.4,346 606.6,339.4 593.2,332.4 572.4,321.7" fill="#dba07c" /><polygon points="572.4,327.2 596.7,339.4 606.2,341.1 605.4,346 596.7,343.2 572.4,332.4" fill="#c48a66" /><polygon points="521.2,282.1 535.9,280.3 544.6,296 537.7,306.4 527.2,305.5 521.2,296" fill="#bd8060" /><polygon points="502.9,280.3 508.1,272.5 530.7,269.6 555,272.5 562.8,280.3 555,287.3 535.9,291.6 511.6,289.9" fill="#f0e838" /><polygon points="517.7,280.3 520.3,274.3 525.5,271.7 522.9,277.7 527.2,283.8 522.9,285.9" fill="#aea12c" /><polygon points="504.7,311.6 511.6,302.9 527.2,304.3 537.7,306 551.5,302.9 558.5,311.6 556.7,324.6 544.6,320.3 543.7,331.5 519.4,331.5 519.4,320.3 508.1,324.6" fill="#a93a4e" /><polygon points="508.1,324.6 519.4,320.3 519.4,331.5 543.7,331.5 544.6,320.3 556.7,324.6 555,313.3 544.6,311.6 542.9,316.8 520.3,316.8 518.6,311.6 506.4,315.1" fill="#7a2638" /><polygon points="524.6,304.6 529,304.6 529,331.5 524.6,331.5" fill="#2c44a8" /><polygon points="535.6,304.6 539.4,304.6 539.4,331.5 535.6,331.5" fill="#2c44a8" /><polygon points="519.4,330.7 543.7,330.7 546.3,351.5 547.2,368.9 542.9,403.6 541.1,427 533.3,427 535.1,403.6 531.1,361.9 527.2,403.6 524.6,427 516.8,427 516,403.6 514.7,368.9 515.1,349.8" fill="#1f2f86" /><polygon points="519.4,330.7 543.7,330.7 546,349.8 531.1,353.2 515.4,349.8" fill="#2a3d9c" /><polygon points="516.5,397.5 524.1,397.5 524.5,403.6 516.1,403.6" fill="#2f48ae" /><polygon points="534.5,397.5 542.9,397.5 542.2,403.6 534.2,403.6" fill="#2f48ae" /><polygon points="517.2,425.8 524.6,425.8 524.6,428.8 517.2,428.8" fill="#3a1028" /><polygon points="533.7,425.8 541.1,425.8 541.1,428.8 533.7,428.8" fill="#3a1028" /><polygon points="596.7,298.6 605.4,273.4 603.3,249.1 607.1,246 613.7,256 613.2,273.4 607.1,288.1 605.7,299.4" fill="#c4c6da" /><polygon points="596.7,298.6 605.4,273.4 603.3,249.1 605.4,247.4 608,273.4 601,299.4" fill="#9299b4" /><polygon points="594.9,298.6 610.9,300.8 607.1,332.8 592.3,331.5" fill="#46202a" /></svg>
<div class="t" style="left:249.5px;top:129.5px;font-size:13.5px;color:#f4fbef;font-family:'DejaVu Sans',sans-serif;letter-spacing:-0.653px;">grasland 100/100</div>
<div class="t" style="left:335.7px;top:123.70000000000005px;font-size:13.5px;color:#f4fbef;font-family:'DejaVu Sans',sans-serif;letter-spacing:-0.716px;">grasland 100/100</div>
<div class="t" style="left:7px;top:36.5px;font-size:19.5px;color:#fff;font-family:'DejaVu Serif',serif;font-weight:700;-webkit-text-stroke:2px #6a6260;paint-order:stroke fill;transform-origin:0 50%;transform:scaleX(0.7854);">POO: 0 FAMILYHEALTH: 82/100 RESERVE: 0</div>
<div class="t" style="left:449.5px;top:52.69999999999999px;font-size:32px;color:#fff;font-family:'DejaVu Serif',serif;font-weight:700;-webkit-text-stroke:4px #777;paint-order:stroke fill;transform-origin:0 50%;transform:scaleX(0.7372);">GRASLAND</div>
<div class="t" style="left:729.5px;top:36.5px;font-size:19.5px;color:#fff;font-family:'DejaVu Serif',serif;font-weight:700;-webkit-text-stroke:2.2px #6a6260;paint-order:stroke fill;transform-origin:0 50%;transform:scaleX(0.8002);">ARROW keys or WASD to move</div>
<div class="t" style="left:816px;top:65px;font-size:19.5px;color:#fff;font-family:'DejaVu Serif',serif;font-weight:700;-webkit-text-stroke:2.2px #6a6260;paint-order:stroke fill;transform-origin:0 50%;transform:scaleX(0.8194);">ACTION is LMB or E</div>
<div class="t" style="left:833px;top:94px;font-size:19.5px;color:#fff;font-family:'DejaVu Serif',serif;font-weight:700;-webkit-text-stroke:2.2px #6a6260;paint-order:stroke fill;transform-origin:0 50%;transform:scaleX(0.8153);">DROP is RMB or Q</div>
<div class="t" style="left:531.4px;top:288.29999999999995px;font-size:25px;color:#fff;font-family:'DejaVu Serif',serif;font-weight:700;-webkit-text-stroke:3px #4a5a52;paint-order:stroke fill;transform-origin:0 50%;transform:scaleX(0.858);">press [DROP  to drop sickle</div>
<div class="t" style="left:602px;top:310.29999999999995px;font-size:13px;color:#fff;font-family:'DejaVu Serif',serif;font-weight:700;-webkit-text-stroke:2px #3a4a42;paint-order:stroke fill;transform-origin:0 50%;transform:scaleX(1.1253);">sickle</div>
</div>
<div style="left:1988px;top:105px;width:54.5px;height:28px;background:#ebebeb;"></div>
<div style="left:1905px;top:105px;width:82px;height:28px;background:#fff;box-shadow:0 0 0 1px #d8d8d8"></div>
<div style="left:1905px;top:133px;width:646px;height:1249px;background:#fff;box-shadow:0 0 0 1px #d8d8d8"></div>
<div style="left:1905px;top:130px;width:82px;height:6px;background:#fff;"></div>
<div class="t" style="left:1914px;top:118px;letter-spacing:0.201px;">Inspector</div>
<div class="t" style="left:1998px;top:118px;color:#a3a3a3;letter-spacing:0.036px;">Node</div>
<svg style="left:2541px;top:110px;" width="16" height="16" viewBox="0 0 16 16"><circle cx="8" cy="2" r="2" fill="#9e9e9e"/><circle cx="8" cy="8" r="2" fill="#9e9e9e"/><circle cx="8" cy="14" r="2" fill="#9e9e9e"/></svg>
<svg style="left:1915px;top:142px;" width="16" height="16" viewBox="0 0 16 16"><path d="M2 1v14h6v-5h3V7.5h2V6.5H9V1zm8.5 .500v3.5h3.5z" fill="#4d4d4d" /><path d="M11 9v2H9v2h2v2h2v-2h2v-2h-2V9z" fill="#2fd24a" /></svg>
<svg style="left:1946.5px;top:142px;" width="16" height="16" viewBox="0 0 16 16"><path d="M1 3a1 1 0 0 1 1-1h4l2 2h5a1 1 0 0 1 1 1v1H4.5L1 13z" fill="#4d4d4d" /><path d="M2 14l3-7h11l-3 7z" fill="#4d4d4d" /></svg>
<svg style="left:1979px;top:142px;" width="16" height="16" viewBox="0 0 16 16"><path fill-rule="evenodd" d="M2 1h10l3 3v10a1 1 0 0 1-1 1H2a1 1 0 0 1-1-1V2a1 1 0 0 1 1-1zm2 1v4h7V2zm4 6.5a2.3 2.3 0 1 0 0 4.6a2.3 2.3 0 0 0 0-4.6z" fill="#c4c4c4"/></svg>
<svg style="left:2473px;top:142px;" width="16" height="16" viewBox="0 0 16 16"><path d="M10 2.5L5 8l5 5.5" fill="none" stroke="#4d4d4d" stroke-width="2" /></svg>
<svg style="left:2497px;top:142px;" width="16" height="16" viewBox="0 0 16 16"><path d="M6 2.5l5 5.5-5 5.5" fill="none" stroke="#b8b8b8" stroke-width="2" /></svg>
<svg style="left:2525px;top:142px;" width="16" height="16" viewBox="0 0 16 16"><path d="M3.5 11.5A5.5 5.5 0 1 0 3 5" fill="none" stroke="#4d4d4d" stroke-width="1.9"/><path d="M0.5 2.5l1 5.3 4.4-2.6z" fill="#4d4d4d"/><path d="M8.5 5v3.5h3" fill="none" stroke="#4d4d4d" stroke-width="1.7" /></svg>
<svg style="left:1914.5px;top:172px;" width="16" height="16" viewBox="0 0 16 16"><path fill-rule="evenodd" d="M6 3a1 1 0 0 0-.7.3l-4 4a1 1 0 0 0 0 1.4l4 4a1 1 0 0 0 .7.3h8a1 1 0 0 0 1-1V4a1 1 0 0 0-1-1zM5 7a1 1 0 0 1 0 2a1 1 0 0 1 0-2z" fill="#2fa139"/></svg>
<div class="t" style="left:1935.5px;top:180px;letter-spacing:0.262px;">instructions</div>
<svg style="left:2524.5px;top:172px;" width="16" height="16" viewBox="0 0 16 16"><path d="M4.5 1v7M11.5 15V8" fill="none" stroke="#4d4d4d" stroke-width="2" /><path d="M2.5 8h4v4.5a2 2 0 0 1-4 0zM8.6 1h1.5v4h2.8V1h1.5v5.5a1.5 1.5 0 0 1-1.5 1.5h-2.8a1.5 1.5 0 0 1-1.5-1.5z" fill="#4d4d4d" /></svg>
<div style="left:1909px;top:197px;width:638px;height:26px;background:#ebebeb;border:1px solid #dadada;box-sizing:border-box"></div>
<div class="t" style="left:1915px;top:210px;color:#9c9c9c;letter-spacing:0.194px;">Filter properties</div>
<svg style="left:2524.5px;top:201px;" width="16" height="16" viewBox="0 0 16 16"><circle cx="6.3" cy="6.3" r="3.9" fill="none" stroke="#555" stroke-width="2"/><path d="M9.3 9.3l4.6 4.6" stroke="#555" stroke-width="2.4" stroke-linecap="round"/></svg>
<div id="props" style="left:1909px;top:227px;width:638px;height:1151px;background:#ebebeb;border:1px solid #d4d4d4;box-sizing:border-box;overflow:hidden">
<div style="left:629px;top:3px;width:4px;height:906px;background:#c0c0c0;border-radius:2px"></div>
<div style="left:3px;top:3px;width:618px;height:22px;background:#d0d0d0;"></div>
<svg style="left:284px;top:6px;" width="16" height="16" viewBox="0 0 16 16"><path fill-rule="evenodd" d="M6 3a1 1 0 0 0-.7.3l-4 4a1 1 0 0 0 0 1.4l4 4a1 1 0 0 0 .7.3h8a1 1 0 0 0 1-1V4a1 1 0 0 0-1-1zM5 7a1 1 0 0 1 0 2a1 1 0 0 1 0-2z" fill="#2fa139"/></svg>
<div class="t" style="left:304.5px;top:14px;letter-spacing:-0.44px;">Label</div>
<div style="left:3px;top:25px;width:618px;height:22px;background:#bcbcbc;"></div>
<div class="t" style="left:3px;top:36px;color:#555;letter-spacing:0.123px;">Text</div>
<svg style="left:606.7px;top:29px;" width="14" height="14" viewBox="0 0 16 16"><path d="M3.3 8.4A5.2 5.2 0 1 1 7 13.3" fill="none" stroke="#4d4d4d" stroke-width="2"/><path d="M0.2 6.3h6.2l-3.1 4.2z" fill="#4d4d4d"/></svg>
<div style="left:588px;top:47px;width:33px;height:107.5px;background:#dedede;"></div>
<div style="left:3px;top:153.5px;width:585px;height:1px;background:#d8d8d8;"></div>
<div class="t" style="left:9px;top:59.5px;letter-spacing:0.073px;">You inherited the farm with 2 Cows Erna and Emma!</div>
<div class="t" style="left:9px;top:81.5px;letter-spacing:0.026px;">Now you have to keep them alive, so you can feed your family.</div>
<div class="t" style="left:9px;top:126px;letter-spacing:-0.26px;">1. Harvest GRAS to feed the cows.</div>
<div class="t" style="left:9px;top:148px;letter-spacing:-0.046px;">2. Discard  the poo at the DUNGHEAP to prevent cows from getting sick.</div>
<div style="left:581px;top:55px;width:3.5px;height:61.5px;background:#c0c0c0;border-radius:2px"></div>
<svg style="left:599.5px;top:93.5px;" width="15" height="15" viewBox="0 0 16 16"><path d="M1 1h5L4.2 2.8 6.5 5 5 6.5 2.8 4.2 1 6zM15 1v5l-1.8-1.8L11 6.5 9.5 5l2.3-2.2L10 1zM1 15v-5l1.8 1.8L5 9.5 6.5 11l-2.3 2.2L6 15zM15 15h-5l1.8-1.8L9.5 11 11 9.5l2.2 2.3L15 10z" fill="#4d4d4d" /></svg>
<div style="left:3px;top:154px;width:618px;height:5.5px;background:#ebebeb;"></div>
<div style="left:312px;top:159px;width:309px;height:26px;background:#e0e0e0;"></div>
<div class="t" style="left:3px;top:172px;color:#5e5e5e;letter-spacing:0.069px;">Align</div>
<svg style="left:294px;top:165px;" width="14" height="14" viewBox="0 0 16 16"><path d="M3.3 8.4A5.2 5.2 0 1 1 7 13.3" fill="none" stroke="#4d4d4d" stroke-width="2"/><path d="M0.2 6.3h6.2l-3.1 4.2z" fill="#4d4d4d"/></svg>
<div class="t" style="left:318px;top:172px;letter-spacing:-0.136px;">Center</div>
<svg style="left:603.7px;top:165px;" width="14" height="14" viewBox="0 0 16 16"><path d="M4.3 6.2l3.7 3.8 3.7-3.8" fill="none" stroke="#4d4d4d" stroke-width="1.8" /></svg>
<div style="left:312px;top:189px;width:309px;height:26px;background:#e0e0e0;"></div>
<div class="t" style="left:3px;top:202px;color:#5e5e5e;letter-spacing:0.103px;">Valign</div>
<svg style="left:294px;top:195px;" width="14" height="14" viewBox="0 0 16 16"><path d="M3.3 8.4A5.2 5.2 0 1 1 7 13.3" fill="none" stroke="#4d4d4d" stroke-width="2"/><path d="M0.2 6.3h6.2l-3.1 4.2z" fill="#4d4d4d"/></svg>
<div class="t" style="left:318px;top:202px;letter-spacing:-0.136px;">Center</div>
<svg style="left:603.7px;top:195px;" width="14" height="14" viewBox="0 0 16 16"><path d="M4.3 6.2l3.7 3.8 3.7-3.8" fill="none" stroke="#4d4d4d" stroke-width="1.8" /></svg>
<div style="left:312px;top:219px;width:309px;height:26px;background:#e0e0e0;"></div>
<div class="t" style="left:3px;top:232px;color:#5e5e5e;letter-spacing:0.142px;">Autowrap</div>
<div style="left:317px;top:225px;width:14px;height:14px;background:#c9c9c9;border-radius:2px"></div>
<div class="t" style="left:336px;top:232px;letter-spacing:-0.654px;">On</div>
<div style="left:312px;top:249px;width:309px;height:26px;background:#e0e0e0;"></div>
<div class="t" style="left:3px;top:262px;color:#5e5e5e;letter-spacing:0.051px;">Clip Text</div>
<div style="left:317px;top:255px;width:14px;height:14px;background:#c9c9c9;border-radius:2px"></div>
<div class="t" style="left:336px;top:262px;letter-spacing:-0.654px;">On</div>
<div style="left:312px;top:279px;width:309px;height:26px;background:#e0e0e0;"></div>
<div class="t" style="left:3px;top:292px;color:#5e5e5e;letter-spacing:-0.115px;">Uppercase</div>
<div style="left:317px;top:285px;width:14px;height:14px;background:#c9c9c9;border-radius:2px"></div>
<div class="t" style="left:336px;top:292px;letter-spacing:-0.654px;">On</div>
<div style="left:312px;top:309px;width:309px;height:26px;background:#e0e0e0;"></div>
<div class="t" style="left:3px;top:322px;color:#5e5e5e;letter-spacing:-0.041px;">Visible Characters</div>
<div class="t" style="left:328px;top:322px;">-1</div>
<svg style="left:599.5px;top:314.5px;" width="15" height="15" viewBox="0 0 16 16"><path d="M4.5 6.5L8 3l3.5 3.5M4.5 9.5L8 13l3.5-3.5" fill="none" stroke="#555" stroke-width="1.7" /></svg>
<div style="left:312px;top:339px;width:309px;height:26px;background:#e0e0e0;"></div>
<div class="t" style="left:3px;top:352px;color:#5e5e5e;letter-spacing:-0.072px;">Percent Visible</div>
<div class="t" style="left:328px;top:352px;">1</div>
<div style="left:318px;top:361px;width:295px;height:1.5px;background:#8a8a8a;"></div>
<div style="left:611px;top:360.5px;width:4px;height:2px;background:#333;"></div>
<div style="left:312px;top:369px;width:309px;height:26px;background:#e0e0e0;"></div>
<div class="t" style="left:3px;top:382px;color:#5e5e5e;letter-spacing:-0.133px;">Lines Skipped</div>
<div class="t" style="left:328px;top:382px;">0</div>
<svg style="left:599.5px;top:374.5px;" width="15" height="15" viewBox="0 0 16 16"><path d="M4.5 6.5L8 3l3.5 3.5M4.5 9.5L8 13l3.5-3.5" fill="none" stroke="#555" stroke-width="1.7" /></svg>
<div style="left:312px;top:399px;width:309px;height:26px;background:#e0e0e0;"></div>
<div class="t" style="left:3px;top:412px;color:#5e5e5e;letter-spacing:-0.114px;">Max Lines Visible</div>
<div class="t" style="left:328px;top:412px;">-1</div>
<svg style="left:599.5px;top:404.5px;" width="15" height="15" viewBox="0 0 16 16"><path d="M4.5 6.5L8 3l3.5 3.5M4.5 9.5L8 13l3.5-3.5" fill="none" stroke="#555" stroke-width="1.7" /></svg>
<div style="left:3px;top:425px;width:618px;height:22px;background:#d0d0d0;"></div>
<svg style="left:277.5px;top:428.5px;" width="15" height="15" viewBox="0 0 16 16"><circle cx="8" cy="8" r="5.2" fill="none" stroke="#2fa139" stroke-width="2.2"/></svg>
<div class="t" style="left:297.5px;top:436px;letter-spacing:-0.05px;">Control</div>
<div style="left:3px;top:447px;width:618px;height:22px;background:#dedede;"></div>
<svg style="left:3.5px;top:450.5px;" width="15" height="15" viewBox="0 0 16 16"><path d="M6.2 4.3l3.8 3.7-3.8 3.7" fill="none" stroke="#9c9c9c" stroke-width="1.8" /></svg>
<div class="t" style="left:22.5px;top:458px;letter-spacing:-0.087px;">Anchor</div>
<div style="left:3px;top:469px;width:618px;height:22px;background:#dedede;"></div>
<svg style="left:3.5px;top:472.5px;" width="15" height="15" viewBox="0 0 16 16"><path d="M6.2 4.3l3.8 3.7-3.8 3.7" fill="none" stroke="#9c9c9c" stroke-width="1.8" /></svg>
<div class="t" style="left:22.5px;top:480px;letter-spacing:0.276px;">Margin</div>
<div style="left:3px;top:491px;width:618px;height:22px;background:#dedede;"></div>
<svg style="left:3.5px;top:494.5px;" width="15" height="15" viewBox="0 0 16 16"><path d="M6.2 4.3l3.8 3.7-3.8 3.7" fill="none" stroke="#9c9c9c" stroke-width="1.8" /></svg>
<div class="t" style="left:22.5px;top:502px;letter-spacing:-0.035px;">Grow Direction</div>
<div style="left:3px;top:513px;width:618px;height:22px;background:#dedede;"></div>
<svg style="left:3.5px;top:516.5px;" width="15" height="15" viewBox="0 0 16 16"><path d="M6.2 4.3l3.8 3.7-3.8 3.7" fill="none" stroke="#9c9c9c" stroke-width="1.8" /></svg>
<div class="t" style="left:22.5px;top:524px;letter-spacing:-0.66px;">Rect</div>
<div style="left:3px;top:535px;width:618px;height:22px;background:#dedede;"></div>
<svg style="left:3.5px;top:538.5px;" width="15" height="15" viewBox="0 0 16 16"><path d="M6.2 4.3l3.8 3.7-3.8 3.7" fill="none" stroke="#9c9c9c" stroke-width="1.8" /></svg>
<div class="t" style="left:22.5px;top:546px;letter-spacing:0.081px;">Hint</div>
<div style="left:3px;top:557px;width:618px;height:22px;background:#dedede;"></div>
<svg style="left:3.5px;top:560.5px;" width="15" height="15" viewBox="0 0 16 16"><path d="M6.2 4.3l3.8 3.7-3.8 3.7" fill="none" stroke="#9c9c9c" stroke-width="1.8" /></svg>
<div class="t" style="left:22.5px;top:568px;letter-spacing:-0.829px;">Focus</div>
<div style="left:3px;top:579px;width:618px;height:22px;background:#dedede;"></div>
<svg style="left:3.5px;top:582.5px;" width="15" height="15" viewBox="0 0 16 16"><path d="M6.2 4.3l3.8 3.7-3.8 3.7" fill="none" stroke="#9c9c9c" stroke-width="1.8" /></svg>
<div class="t" style="left:22.5px;top:590px;letter-spacing:-0.264px;">Mouse</div>
<div style="left:3px;top:601px;width:618px;height:22px;background:#dedede;"></div>
<svg style="left:3.5px;top:604.5px;" width="15" height="15" viewBox="0 0 16 16"><path d="M6.2 4.3l3.8 3.7-3.8 3.7" fill="none" stroke="#9c9c9c" stroke-width="1.8" /></svg>
<div class="t" style="left:22.5px;top:612px;letter-spacing:-0.552px;">Size Flags</div>
<div style="left:3px;top:623px;width:618px;height:22px;background:#dedede;"></div>
<svg style="left:3.5px;top:626.5px;" width="15" height="15" viewBox="0 0 16 16"><path d="M4.3 6.2l3.7 3.8 3.7-3.8" fill="none" stroke="#9c9c9c" stroke-width="1.8" /></svg>
<div class="t" style="left:22.5px;top:634px;letter-spacing:-0.336px;">Theme</div>
<div style="left:316px;top:645px;width:305px;height:26px;background:#e0e0e0;"></div>
<div class="t" style="left:11px;top:658px;color:#5e5e5e;letter-spacing:-0.336px;">Theme</div>
<svg style="left:298.5px;top:651px;" width="14" height="14" viewBox="0 0 16 16"><path d="M3.3 8.4A5.2 5.2 0 1 1 7 13.3" fill="none" stroke="#4d4d4d" stroke-width="2"/><path d="M0.2 6.3h6.2l-3.1 4.2z" fill="#4d4d4d"/></svg>
<svg style="left:322.5px;top:650.5px;" width="15" height="15" viewBox="0 0 16 16"><defs><clipPath id="dr"><path d="M8 1.5C6.5 5 3.5 7 3.5 10.5a4.5 4.5 0 0 0 9 0C12.5 7 9.5 5 8 1.5z"/></clipPath></defs><g clip-path="url(#dr)"><rect x="0" y="0" width="16" height="4.5" fill="#ff4545"/><rect x="0" y="4.5" width="16" height="2" fill="#ffe345"/><rect x="0" y="6.5" width="16" height="2" fill="#80ff45"/><rect x="0" y="8.5" width="16" height="2" fill="#45ffa2"/><rect x="0" y="10.5" width="16" height="2" fill="#45d7ff"/><rect x="0" y="12.5" width="16" height="1.5" fill="#8045ff"/><rect x="0" y="14" width="16" height="2" fill="#ff4596"/></g></svg>
<div class="t" style="left:439px;top:658px;letter-spacing:-0.336px;">Theme</div>
<svg style="left:601.5px;top:652.5px;" width="13" height="13" viewBox="0 0 16 16"><path d="M4.3 6.2l3.7 3.8 3.7-3.8" fill="none" stroke="#4d4d4d" stroke-width="1.8" /></svg>
<div style="left:3px;top:671px;width:618px;height:22px;background:#dedede;"></div>
<svg style="left:3.5px;top:674.5px;" width="15" height="15" viewBox="0 0 16 16"><path d="M6.2 4.3l3.8 3.7-3.8 3.7" fill="none" stroke="#9c9c9c" stroke-width="1.8" /></svg>
<div class="t" style="left:22.5px;top:682px;letter-spacing:-0.322px;">Custom Styles</div>
<div style="left:3px;top:693px;width:618px;height:22px;background:#dedede;"></div>
<svg style="left:3.5px;top:696.5px;" width="15" height="15" viewBox="0 0 16 16"><path d="M4.3 6.2l3.7 3.8 3.7-3.8" fill="none" stroke="#9c9c9c" stroke-width="1.8" /></svg>
<div class="t" style="left:22.5px;top:704px;letter-spacing:-0.321px;">Custom Fonts</div>
<div style="left:316px;top:715px;width:305px;height:64px;background:#e0e0e0;"></div>
<div style="left:12px;top:742px;width:14px;height:14px;background:#c9c9c9;border-radius:2px"></div>
<svg style="left:12.5px;top:742.5px;" width="13" height="13" viewBox="0 0 16 16"><path d="M3.5 8.5l3 3 6-7" fill="none" stroke="#444" stroke-width="2.2" /></svg>
<div class="t" style="left:31px;top:749px;color:#5e5e5e;letter-spacing:-0.328px;">Font</div>
<svg style="left:321.5px;top:739px;" width="16" height="16" viewBox="0 0 16 16"><path d="M1.5 2.5h8v2.2h-1c0-.8-.4-1.1-1.2-1.1H6.4v6h1v1.2H3.6V9.6h1v-6H3.7c-.8 0-1.2.3-1.2 1.1h-1z" fill="#2a78f5"/><path d="M7 6.5h8v2.2h-1c0-.8-.4-1.1-1.2-1.1h-.9v6h1v1.2H9.1v-1.2h1v-6h-.9c-.8 0-1.2.3-1.2 1.1H7z" fill="#30e8ff"/></svg>
<div style="left:434px;top:716px;width:62px;height:61.5px;background:#4d4d4d;border-radius:3px"></div>
<div class="t" style="left:445.5px;top:748px;font-size:20px;color:#fff;font-family:'DejaVu Serif',serif;font-weight:700;letter-spacing:-1.496px;">Abg</div>
<svg style="left:601.5px;top:741.5px;" width="13" height="13" viewBox="0 0 16 16"><path d="M4.3 6.2l3.7 3.8 3.7-3.8" fill="none" stroke="#4d4d4d" stroke-width="1.8" /></svg>
<div style="left:11px;top:783px;width:610px;height:326px;background:#dce1ec;border:2px solid #9db8ee;border-top:none;box-sizing:border-box"></div>
<div style="left:13px;top:783px;width:606px;height:22px;background:#dedede;"></div>
<svg style="left:14.5px;top:786.5px;" width="15" height="15" viewBox="0 0 16 16"><path d="M4.3 6.2l3.7 3.8 3.7-3.8" fill="none" stroke="#9c9c9c" stroke-width="1.8" /></svg>
<div class="t" style="left:32.5px;top:794px;letter-spacing:-0.062px;">Settings</div>
<div style="left:320px;top:805px;width:299px;height:26px;background:#e0e0e0;"></div>
<div class="t" style="left:21px;top:818px;color:#5e5e5e;letter-spacing:-0.745px;">Size</div>
<svg style="left:302px;top:811px;" width="14" height="14" viewBox="0 0 16 16"><path d="M3.3 8.4A5.2 5.2 0 1 1 7 13.3" fill="none" stroke="#4d4d4d" stroke-width="2"/><path d="M0.2 6.3h6.2l-3.1 4.2z" fill="#4d4d4d"/></svg>
<div class="t" style="left:336px;top:818px;">20</div>
<svg style="left:597.5px;top:810.5px;" width="15" height="15" viewBox="0 0 16 16"><path d="M4.5 6.5L8 3l3.5 3.5M4.5 9.5L8 13l3.5-3.5" fill="none" stroke="#555" stroke-width="1.7" /></svg>
<div style="left:320px;top:835px;width:299px;height:26px;background:#e0e0e0;"></div>
<div class="t" style="left:21px;top:848px;color:#5e5e5e;letter-spacing:-0.073px;">Outline Size</div>
<svg style="left:302px;top:841px;" width="14" height="14" viewBox="0 0 16 16"><path d="M3.3 8.4A5.2 5.2 0 1 1 7 13.3" fill="none" stroke="#4d4d4d" stroke-width="2"/><path d="M0.2 6.3h6.2l-3.1 4.2z" fill="#4d4d4d"/></svg>
<div class="t" style="left:336px;top:848px;">1</div>
<svg style="left:597.5px;top:840.5px;" width="15" height="15" viewBox="0 0 16 16"><path d="M4.5 6.5L8 3l3.5 3.5M4.5 9.5L8 13l3.5-3.5" fill="none" stroke="#555" stroke-width="1.7" /></svg>
<div style="left:320px;top:865px;width:299px;height:26px;background:#e0e0e0;"></div>
<div class="t" style="left:21px;top:878px;color:#5e5e5e;letter-spacing:0.051px;">Outline Color</div>
<svg style="left:302px;top:871px;" width="14" height="14" viewBox="0 0 16 16"><path d="M3.3 8.4A5.2 5.2 0 1 1 7 13.3" fill="none" stroke="#4d4d4d" stroke-width="2"/><path d="M0.2 6.3h6.2l-3.1 4.2z" fill="#4d4d4d"/></svg>
<div style="left:326px;top:869px;width:287px;height:18px;background:#4b4b4b;background-image:linear-gradient(45deg,#535353 25%,transparent 25%,transparent 75%,#535353 75%),linear-gradient(45deg,#535353 25%,transparent 25%,transparent 75%,#535353 75%);background-size:10px 10px;background-position:0 0,5px 5px"></div>
<div style="left:320px;top:895px;width:299px;height:26px;background:#e0e0e0;"></div>
<div class="t" style="left:21px;top:908px;color:#5e5e5e;letter-spacing:-0.044px;">Use Mipmaps</div>
<div style="left:325px;top:901px;width:14px;height:14px;background:#c9c9c9;border-radius:2px"></div>
<div class="t" style="left:344.5px;top:908px;letter-spacing:-0.654px;">On</div>
<div style="left:320px;top:925px;width:299px;height:26px;background:#e0e0e0;"></div>
<div class="t" style="left:21px;top:938px;color:#5e5e5e;letter-spacing:-0.217px;">Use Filter</div>
<svg style="left:302px;top:931px;" width="14" height="14" viewBox="0 0 16 16"><path d="M3.3 8.4A5.2 5.2 0 1 1 7 13.3" fill="none" stroke="#4d4d4d" stroke-width="2"/><path d="M0.2 6.3h6.2l-3.1 4.2z" fill="#4d4d4d"/></svg>
<div style="left:325px;top:931px;width:14px;height:14px;background:#c9c9c9;border-radius:2px"></div>
<svg style="left:325.5px;top:931.5px;" width="13" height="13" viewBox="0 0 16 16"><path d="M3.5 8.5l3 3 6-7" fill="none" stroke="#444" stroke-width="2.2" /></svg>
<div class="t" style="left:344.5px;top:938px;color:#2a78f5;letter-spacing:-0.654px;">On</div>
<div style="left:13px;top:951px;width:606px;height:22px;background:#dedede;"></div>
<svg style="left:14.5px;top:954.5px;" width="15" height="15" viewBox="0 0 16 16"><path d="M6.2 4.3l3.8 3.7-3.8 3.7" fill="none" stroke="#9c9c9c" stroke-width="1.8" /></svg>
<div class="t" style="left:32.5px;top:962px;letter-spacing:-0.222px;">Extra Spacing</div>
<div style="left:13px;top:973px;width:606px;height:22px;background:#dedede;"></div>
<svg style="left:14.5px;top:976.5px;" width="15" height="15" viewBox="0 0 16 16"><path d="M4.3 6.2l3.7 3.8 3.7-3.8" fill="none" stroke="#9c9c9c" stroke-width="1.8" /></svg>
<div class="t" style="left:32.5px;top:984px;letter-spacing:-0.378px;">Font</div>
<div style="left:320px;top:995px;width:299px;height:64px;background:#e0e0e0;"></div>
<div class="t" style="left:21px;top:1027px;color:#5e5e5e;letter-spacing:-0.318px;">Font Data</div>
<svg style="left:302px;top:1020px;" width="14" height="14" viewBox="0 0 16 16"><path d="M3.3 8.4A5.2 5.2 0 1 1 7 13.3" fill="none" stroke="#4d4d4d" stroke-width="2"/><path d="M0.2 6.3h6.2l-3.1 4.2z" fill="#4d4d4d"/></svg>
<svg style="left:325px;top:1019px;" width="16" height="16" viewBox="0 0 16 16"><path d="M2 2h8v2.2H9c0-.8-.4-1.1-1.2-1.1H6.9v6h1v1.2H4.1V9.1h1v-6h-.9C3.4 3.1 3 3.4 3 4.2H2z" fill="#474747"/><path d="M2.5 6.5h1v1h-1zM2.5 8.5h1v1h-1zM2.5 10.5h1v1h-1zM2.5 12.5h1v1h-1zM4.5 12.5h1v1h-1zM6.5 12.5h1v1h-1zM4.5 6.5h1v1h-1zM4.5 10.5h1v1h-1z" fill="#474747"/><path d="M7 6.5h8v2.2h-1c0-.8-.4-1.1-1.2-1.1h-.9v6h1v1.2H9.1v-1.2h1v-6h-.9c-.8 0-1.2.3-1.2 1.1H7z" fill="#ff2020"/></svg>
<div style="left:435px;top:996px;width:62px;height:61.7px;background:#4d4d4d;border-radius:3px"></div>
<div class="t" style="left:446.5px;top:1028px;font-size:20px;color:#fff;font-family:'DejaVu Serif',serif;font-weight:700;letter-spacing:-1.496px;">Abg</div>
<svg style="left:599.2px;top:1021.5px;" width="13" height="13" viewBox="0 0 16 16"><path d="M4.3 6.2l3.7 3.8 3.7-3.8" fill="none" stroke="#4d4d4d" stroke-width="1.8" /></svg>
<div style="left:21px;top:1063px;width:598px;height:22px;background:#dedede;"></div>
<svg style="left:21.5px;top:1066.5px;" width="15" height="15" viewBox="0 0 16 16"><path d="M6.2 4.3l3.8 3.7-3.8 3.7" fill="none" stroke="#9c9c9c" stroke-width="1.8" /></svg>
<div class="t" style="left:40px;top:1074px;letter-spacing:-0.206px;">Fallback</div>
<div style="left:13px;top:1085px;width:606px;height:22px;background:#dedede;"></div>
<svg style="left:14.5px;top:1088.5px;" width="15" height="15" viewBox="0 0 16 16"><path d="M6.2 4.3l3.8 3.7-3.8 3.7" fill="none" stroke="#9c9c9c" stroke-width="1.8" /></svg>
<div class="t" style="left:32.5px;top:1096px;letter-spacing:-0.437px;">Resource</div>
<div style="left:3px;top:1109px;width:618px;height:22px;background:#dedede;"></div>
<svg style="left:3.5px;top:1112.5px;" width="15" height="15" viewBox="0 0 16 16"><path d="M6.2 4.3l3.8 3.7-3.8 3.7" fill="none" stroke="#9c9c9c" stroke-width="1.8" /></svg>
<div class="t" style="left:22.5px;top:1120px;letter-spacing:-0.268px;">Custom Colors</div>
<div style="left:3px;top:1131px;width:618px;height:22px;background:#dedede;"></div>
<svg style="left:3.5px;top:1134.5px;" width="15" height="15" viewBox="0 0 16 16"><path d="M6.2 4.3l3.8 3.7-3.8 3.7" fill="none" stroke="#9c9c9c" stroke-width="1.8" /></svg>
<div class="t" style="left:22.5px;top:1142px;letter-spacing:-0.167px;">Custom Constants</div>
</div>
<div id="topbar" style="left:0;top:0;width:2560px;height:62px;background:linear-gradient(#5d5a52 0px,#504d47 14px,#403f3b 33px,#3c3b37 35px,#3b3a36 62px)"></div>
<div class="t" style="left:12.5px;top:19px;font-size:17px;color:#eeeae3;font-weight:700;letter-spacing:0.642px;">Activities</div>
<svg style="left:115px;top:9px" width="16" height="16" viewBox="0 0 16 16"><rect x="0.5" y="0.5" width="15" height="15" rx="2" fill="#3b6ea3"/><path d="M3 7c0-2.5 2-4 5-4s5 1.5 5 4v4c0 1-1 1.5-2 1.5H5c-1 0-2-.5-2-1.5z" fill="#8fc0e8"/><circle cx="5.8" cy="8" r="1.2" fill="#fff"/><circle cx="10.2" cy="8" r="1.2" fill="#fff"/></svg>
<div class="t" style="left:137.5px;top:19px;font-size:17px;color:#eeeae3;font-weight:700;letter-spacing:0.443px;">Farm Life</div>
<svg style="left:224px;top:14.5px" width="11" height="6" viewBox="0 0 11 6"><path d="M0.5 0.5h10L5.5 5.5z" fill="#d8d4cc"/></svg>
<div class="t" style="left:1210.5px;top:18px;font-size:17px;color:#eeeae3;font-weight:700;letter-spacing:0.283px;">Mo Apr 20, 01:32</div>
<div style="left:1354.5px;top:13.5px;width:7px;height:7px;border-radius:4px;background:#e4e0d9"></div>
<div class="t" style="left:1099.5px;top:50px;font-size:17px;color:#d4cfc6;font-weight:700;letter-spacing:0.239px;">Godot Engine - Farm Life - start_menu.tscn</div>
<svg style="left:2499px;top:40px" width="16" height="16" viewBox="0 0 16 16"><circle cx="8" cy="8" r="7.5" fill="#5e5c56"/><path d="M4.5 8.5h7" stroke="#3c3b37" stroke-width="1.3"/></svg>
<svg style="left:2519px;top:40px" width="16" height="16" viewBox="0 0 16 16"><circle cx="8" cy="8" r="7.5" fill="#5e5c56"/><rect x="4.5" y="4.5" width="7" height="7" fill="none" stroke="#3c3b37" stroke-width="1.2"/></svg>
<svg style="left:2539px;top:40px" width="16" height="16" viewBox="0 0 16 16"><circle cx="8" cy="8" r="7.5" fill="#5e5c56"/><path d="M5 5l6 6M11 5l-6 6" stroke="#3c3b37" stroke-width="1.3"/></svg>
<svg style="left:2081px;top:7px" width="20" height="20" viewBox="0 0 20 20"><circle cx="10" cy="10" r="8.8" fill="#dcd8d0"/><path d="M3 7.5h14v2.5a2.5 2.5 0 0 1-5 0v-.8h-4v.8a2.5 2.5 0 0 1-5 0z" fill="#45433e"/><path d="M6 13.5c2 2 6 2 8 0" stroke="#45433e" stroke-width="1.3" fill="none"/></svg>
<svg style="left:2109px;top:14.5px" width="10" height="6" viewBox="0 0 10 6"><path d="M0.3 0.5h9.4L5 5.5z" fill="#dcd8d0"/></svg>
<svg style="left:2146px;top:7px" width="20" height="20" viewBox="0 0 20 20"><path d="M4 5.5l11 9-5.5 4.5V1L15 5.5l-11 9" fill="none" stroke="#dcd8d0" stroke-width="1.8" transform="translate(1 1) scale(0.9)"/></svg>
<svg style="left:2200px;top:14px" width="6" height="7" viewBox="0 0 6 7"><path d="M3 0.5L5 5.5H1z" fill="#f08010"/><path d="M0.5 5.5h5v1h-5z" fill="#f0a040"/></svg>
<svg style="left:2241px;top:7px" width="22" height="20" viewBox="0 0 22 20"><path d="M7 2.5h3c4 0 6 3.5 6 7.5s-2 7.5-6 7.5H7z" fill="none" stroke="#dcd8d0" stroke-width="1.7"/><path d="M1 6.5h6M1 10h6M1 13.5h6" stroke="#dcd8d0" stroke-width="1.6"/><path d="M20 3.5c-2-1-3.5 0-2.5 1.5s1.5 2.5-1 2" fill="none" stroke="#dcd8d0" stroke-width="1.1"/></svg>
<svg style="left:2297px;top:6px" width="18" height="22" viewBox="0 0 18 22"><rect x="1.5" y="3.5" width="15" height="17" rx="1.5" fill="none" stroke="#dcd8d0" stroke-width="2"/><rect x="5" y="1" width="8" height="4.5" rx="1" fill="#dcd8d0"/><rect x="5" y="8" width="8" height="8" fill="#dcd8d0" opacity="0.85"/></svg>
<svg style="left:2327px;top:14.5px" width="10" height="6" viewBox="0 0 10 6"><path d="M0.3 0.5h9.4L5 5.5z" fill="#dcd8d0"/></svg>
<svg style="left:2369px;top:7px" width="20" height="20" viewBox="0 0 20 20"><circle cx="10" cy="10" r="9.5" fill="#dcd8d0"/><circle cx="10" cy="4.8" r="1.8" fill="#45433e"/><path d="M3.5 7.5l5 1v3l-2 5.5 1.3.6 2.2-4.8 2.2 4.8 1.3-.6-2-5.5v-3l5-1-.3-1.4-5.4 1h-1.6l-5.4-1z" fill="#45433e"/></svg>
<svg style="left:2399px;top:14.5px" width="10" height="6" viewBox="0 0 10 6"><path d="M0.3 0.5h9.4L5 5.5z" fill="#dcd8d0"/></svg>
<svg style="left:2440px;top:7px" width="20" height="20" viewBox="0 0 20 20"><rect x="7" y="1" width="6" height="6" fill="#dcd8d0"/><rect x="0.5" y="13" width="6" height="6" fill="#dcd8d0"/><rect x="13.5" y="13" width="6" height="6" fill="#dcd8d0"/><path d="M10 7v3.5M3.5 13v-2.5h13V13" fill="none" stroke="#dcd8d0" stroke-width="1.6"/></svg>
<svg style="left:2472px;top:7px" width="22" height="20" viewBox="0 0 22 20"><path d="M1 7h3.5L9 2.5v15L4.5 13H1z" fill="#dcd8d0"/><path d="M11.5 6.5a5 5 0 0 1 0 7M14 4a8.5 8.5 0 0 1 0 12M16.8 1.8a11.5 11.5 0 0 1 0 16.4" fill="none" stroke="#dcd8d0" stroke-width="1.5"/></svg>
<svg style="left:2507px;top:6px" width="16" height="22" viewBox="0 0 16 22"><rect x="1.5" y="3.5" width="13" height="17" rx="1.5" fill="none" stroke="#9a968e" stroke-width="2"/><rect x="5" y="1" width="6" height="3" fill="#9a968e"/><path d="M9.5 6L5 12.5h3L6.5 18l5-7H8.3z" fill="#9a968e"/></svg>
<svg style="left:2535px;top:14.5px" width="10" height="6" viewBox="0 0 10 6"><path d="M0.3 0.5h9.4L5 5.5z" fill="#dcd8d0"/></svg>
<div style="left:0px;top:1391px;width:2560px;height:49px;background:#3d3c38;"></div>
<div class="t" style="left:544px;top:1416px;font-size:16px;color:#55534e;font-family:'DejaVu Sans',sans-serif;letter-spacing:-0.106px;">RGB-Alpha 8-bit integer/channel) (RGBA elle-V2-srgbtrc.icc</div>
<div style="left:1687.5px;top:1391px;width:900px;height:42px;background:#3b3a36;border:1px solid #44433f;border-radius:3px;box-sizing:border-box"></div>
<div class="t" style="left:1720px;top:1411px;font-size:15.5px;color:#5a5853;font-family:'DejaVu Sans',sans-serif;letter-spacing:0.201px;">640 x 512 (12,4 MiB)</div>
<div class="t" style="left:2267px;top:1411px;font-size:15.5px;color:#504e4a;font-family:'DejaVu Sans',sans-serif;letter-spacing:0.183px;">50%</div>
<div style="left:2338px;top:1404px;width:160px;height:11px;background:#44433f;border-radius:6px"></div>
<div style="left:2359px;top:1393px;width:33px;height:33px;background:#3d3c38;border-radius:17px;border:1.5px solid #4a4944;box-sizing:border-box"></div>
<div style="left:1002px;top:1393px;width:46px;height:46px;background:#65635d;border-radius:3px"></div>
<div style="left:16px;top:1394px;width:32px;height:32px;background:transparent;border:1px solid #55534e;box-sizing:border-box"></div>
<svg style="left:5px;top:1396px" width="40" height="40" viewBox="-3.5 -3.5 47 47"><path d="M3 3h32l2 4-2 12H5L3 7z" fill="#b4b2ac"/><path d="M5 5h28l1 3-1 8H6L5 8z" fill="#d6d4ce"/><path d="M9 8l6 4 5-5 6 6 5-4" stroke="#a8a6a0" stroke-width="1.5" fill="none"/><rect x="15" y="19" width="8" height="18" rx="3" fill="#c8a060"/><path d="M7 27l12 4 12-4-2 6-10-2-10 2z" fill="#d01818"/><circle cx="19" cy="30" r="3" fill="#e83030"/></svg>
<svg style="left:55px;top:1396px" width="40" height="40" viewBox="-3.5 -3.5 47 47"><rect x="6" y="4" width="28" height="33" rx="2" fill="#8e8c88"/><rect x="8" y="6" width="24" height="9" fill="#e87830"/><rect x="8" y="10" width="24" height="2" fill="#f4a060"/><rect x="8" y="17" width="24" height="18" fill="#b4b2ae"/><rect x="15" y="23" width="10" height="5" rx="1" fill="#f0f0ee" stroke="#66645f"/></svg>
<svg style="left:105px;top:1396px" width="40" height="40" viewBox="-3.5 -3.5 47 47"><path d="M4 10h13l3 3h16v22H4z" fill="#d86a24"/><path d="M4 15h32v20H4z" fill="#f08a3c"/><path d="M4 15h32v3H4z" fill="#f8a860"/></svg>
<svg style="left:155px;top:1396px" width="40" height="40" viewBox="-3.5 -3.5 47 47"><path d="M14 9a6 6 0 0 1 12 0" fill="none" stroke="#c85a1a" stroke-width="2.5"/><path d="M6 10h28l-1 26H7z" fill="#e8702a"/><path d="M20 15l7 16h-3.5l-1.3-3.2h-4.4L16.5 31H13zM20 20.5l-1.4 4.3h2.8z" fill="#fff"/><rect x="13" y="32" width="14" height="2" fill="#fff"/></svg>
<svg style="left:205px;top:1396px" width="40" height="40" viewBox="-3.5 -3.5 47 47"><rect x="4" y="6" width="32" height="28" rx="2" fill="#d0cec8"/><rect x="6" y="9" width="28" height="23" fill="#1c1c1c"/><path d="M9 14l5 3-5 3" stroke="#fff" stroke-width="1.8" fill="none"/><rect x="15" y="20" width="7" height="1.8" fill="#fff"/></svg>
<svg style="left:255px;top:1396px" width="40" height="40" viewBox="-3.5 -3.5 47 47"><rect x="6" y="2" width="28" height="36" rx="8" fill="#e4e4e0"/><circle cx="26" cy="31" r="3" fill="#d0d0cc"/><circle cx="20" cy="17" r="6.5" fill="#6a6a48"/><circle cx="20" cy="17" r="4" fill="#e0c020"/><circle cx="20" cy="17" r="1.5" fill="#705800"/><path d="M5 12a14 14 0 0 0 0 16M35 12a14 14 0 0 1 0 16" stroke="#55606a" stroke-width="2" fill="none" opacity="0.5"/></svg>
<svg style="left:305px;top:1396px" width="40" height="40" viewBox="-3.5 -3.5 47 47"><circle cx="20" cy="20" r="17" fill="#6a98ea"/><path d="M20 3a17 17 0 0 1 14.7 8.5H20z" fill="#4a78d8"/><circle cx="20" cy="20" r="8" fill="#e8f0fc"/><circle cx="20" cy="20" r="6" fill="#4a80e8"/></svg>
<svg style="left:355px;top:1396px" width="40" height="40" viewBox="-3.5 -3.5 47 47"><path d="M28 3l8 4v26l-8 4L10 22l-5 4-3-2V16l3-2 5 4z" fill="#2a8fd8"/><path d="M28 12v16l-10-8z" fill="#3d3c38"/><path d="M28 3l8 4v26l-8 4z" fill="#1a78c0"/></svg>
<svg style="left:405px;top:1396px" width="40" height="40" viewBox="-3.5 -3.5 47 47"><circle cx="20" cy="20" r="17" fill="#142028" stroke="#1a8a88" stroke-width="1.5"/><path d="M20 8c-5 0-8 4-8 9v9l3-1v4h2v-4h2v5h2v-5h2v4h2v-4l3 1v-9c0-5-3-9-8-9z" fill="#18a0a0"/><circle cx="17" cy="17" r="1.5" fill="#142028"/><circle cx="23" cy="17" r="1.5" fill="#142028"/></svg>
<svg style="left:455px;top:1396px" width="40" height="40" viewBox="-3.5 -3.5 47 47"><circle cx="20" cy="20" r="17" fill="#3a7cc4"/><circle cx="20" cy="20" r="15" fill="#4a90d8"/><path d="M14.5 15c0-3.5 2.5-5.5 5.8-5.5s5.7 2 5.7 5c0 4-4.5 4.3-4.5 8h-3.3c0-4.8 4.3-5.3 4.3-7.9 0-1.3-.9-2.1-2.3-2.1s-2.4.9-2.4 2.5zM18.2 25.5h3.5V29h-3.5z" fill="#fff"/></svg>
<svg style="left:505px;top:1396px" width="40" height="40" viewBox="-3.5 -3.5 47 47"><circle cx="20" cy="21" r="16" fill="#ff8a1a"/><path d="M20 5c3 3 5 4 7 8 4 2 7 6 7 11a14 14 0 0 1-28 0c0-3 1-6 3-8 1 2 3 3 5 3 0-5 2-10 6-14z" fill="#ff5a2a"/><circle cx="20" cy="23" r="8" fill="#7a48d8"/><path d="M24 2c2 3 4 6 4 10l-5-3z" fill="#ffc828"/></svg>
<svg style="left:555px;top:1396px" width="40" height="40" viewBox="-3.5 -3.5 47 47"><circle cx="20" cy="20" r="17" fill="#fff"/><rect x="17" y="9" width="4" height="13" rx="2" fill="#36c5f0"/><rect x="9" y="17" width="13" height="4" rx="2" fill="#2eb67d" transform="translate(0 3)"/><rect x="20" y="18" width="4" height="13" rx="2" fill="#ecb22e"/><rect x="18" y="16" width="13" height="4" rx="2" fill="#e01e5a"/></svg>
<svg style="left:605px;top:1396px" width="40" height="40" viewBox="-3.5 -3.5 47 47"><circle cx="20" cy="20" r="17.5" fill="#fff"/><path d="M20 6c5 6 7 10 7 15s-3 9-7 11c-4-2-7-6-7-11s2-9 7-15z" fill="#18a050"/><path d="M20 6v30" stroke="#0c7838" stroke-width="1.2"/></svg>
<svg style="left:655px;top:1396px" width="40" height="40" viewBox="-3.5 -3.5 47 47"><path d="M12 4h16l3 4 3 1-1 5 1 4-4 13-10 6-10-6L6 18l1-4-1-5 3-1z" fill="#fb542b"/><path d="M20 10l5 2 3-1-1 6-3 5 1 3-5 4-5-4 1-3-3-5-1-6 3 1z" fill="#fff"/><path d="M17 16h6l-1 5h-4z" fill="#fb542b"/></svg>
<svg style="left:705px;top:1396px" width="40" height="40" viewBox="-3.5 -3.5 47 47"><rect x="8" y="6" width="24" height="29" fill="#f0f0ec" stroke="#b8b8b0"/><path d="M11 13h17M11 17h17M11 21h17M11 25h17M11 29h12" stroke="#b0b0a8" stroke-width="1.2"/><path d="M10 4v5M14 4v5M18 4v5M22 4v5M26 4v5M30 4v5" stroke="#66645f" stroke-width="1.5"/><path d="M34 8l3 3-12 14-4 1 1-4z" fill="#e8a030" stroke="#8a5a10" stroke-width="0.8"/><path d="M34 8l3 3-2 2-3-3z" fill="#e04040"/></svg>
<svg style="left:755px;top:1396px" width="40" height="40" viewBox="-3.5 -3.5 47 47"><path d="M6 24l14-11H10l2-3h14l10 9c3 3 3 8-1 11s-11 3-15 0c-3-2-4-5-3-8l-8 6z" fill="#ea7600"/><circle cx="27" cy="23" r="6.5" fill="#fff"/><circle cx="27" cy="23" r="4" fill="#265787"/></svg>
<svg style="left:805px;top:1396px" width="40" height="40" viewBox="-3.5 -3.5 47 47"><g transform=""><path d="M8 12l2-5 4 2 1-1V4h4l1 3h0l1-3h4v4l1 1 4-2 2 5-3 2c1 2 1 4 1 7v7c0 4-5 6-12 6S7 32 7 28v-7c0-3 0-5 1-7z" fill="#478cbf"/><circle cx="14" cy="21" r="3.8" fill="#fff"/><circle cx="26" cy="21" r="3.8" fill="#fff"/><circle cx="14.3" cy="21.3" r="2.2" fill="#414042"/><circle cx="25.7" cy="21.3" r="2.2" fill="#414042"/><rect x="18.7" y="21" width="2.6" height="5" rx="1.3" fill="#fff"/><path d="M7 27h6v3h4v-3h6v3h4v-3h6v2c0 4-5 6-13 6S7 33 7 29z" fill="#fff" opacity="0.9"/><path d="M7 29h6v3h4v-3h6v3h4v-3h6c0 4-5 6-13 6S7 33 7 29z" fill="#478cbf"/></g></svg>
<svg style="left:855px;top:1396px" width="40" height="40" viewBox="-3.5 -3.5 47 47"><path d="M17 4h6l8 26H9z" fill="#f08a10"/><path d="M15 11h10l2 6H13zM11 23h18l1.5 5h-21z" fill="#f0f0f0"/><path d="M6 29h28l2 7H4z" fill="#f08a10"/><path d="M6 29h28l.800 2.5H5.2z" fill="#f8a840"/></svg>
<svg style="left:905px;top:1396px" width="40" height="40" viewBox="-3.5 -3.5 47 47"><rect x="4" y="4" width="32" height="32" fill="#b40000" stroke="#8a0000" stroke-dasharray="2 1.5"/><path d="M9 10h13l-1 4h-8l-1 5h7l-1 4h-7l-2 8H5z" fill="#fff" transform="translate(2 0)"/><path d="M21 17h13l-1 3-8 8h7l-1 4H18l1-3 8-8h-7z" fill="#fff"/></svg>
<svg style="left:955px;top:1396px" width="40" height="40" viewBox="-3.5 -3.5 47 47"><defs><linearGradient id="kr" x1="0" y1="0" x2="1" y2="1"><stop offset="0" stop-color="#ff40e0"/><stop offset="0.35" stop-color="#f0f0ff"/><stop offset="0.65" stop-color="#40e0ff"/><stop offset="1" stop-color="#f0e040"/></linearGradient></defs><circle cx="20" cy="21" r="15" fill="url(#kr)"/><path d="M6 6c6 2 14 8 19 14l-3 3C17 17 11 11 6 6z" fill="#3a3a3a"/><path d="M24 20c3 1 5 4 4 8-2-1-6-2-7-5z" fill="#222"/></svg>
<svg style="left:1005px;top:1396px" width="40" height="40" viewBox="-3.5 -3.5 47 47"><rect x="1.2" y="1.2" width="37.6" height="37.6" rx="4.5" fill="#35587a"/><g transform="translate(4 4) scale(0.8)"><path d="M8 12l2-5 4 2 1-1V4h4l1 3h0l1-3h4v4l1 1 4-2 2 5-3 2c1 2 1 4 1 7v7c0 4-5 6-12 6S7 32 7 28v-7c0-3 0-5 1-7z" fill="#478cbf"/><circle cx="14" cy="21" r="3.8" fill="#fff"/><circle cx="26" cy="21" r="3.8" fill="#fff"/><circle cx="14.3" cy="21.3" r="2.2" fill="#414042"/><circle cx="25.7" cy="21.3" r="2.2" fill="#414042"/><rect x="18.7" y="21" width="2.6" height="5" rx="1.3" fill="#fff"/><path d="M7 27h6v3h4v-3h6v3h4v-3h6v2c0 4-5 6-13 6S7 33 7 29z" fill="#fff" opacity="0.9"/><path d="M7 29h6v3h4v-3h6v3h4v-3h6c0 4-5 6-13 6S7 33 7 29z" fill="#478cbf"/></g></svg>
<div style="left:71px;top:1436px;width:3px;height:3px;background:#e9541f;border-radius:2px"></div>
<div style="left:76px;top:1436px;width:3px;height:3px;background:#e9541f;border-radius:2px"></div>
<div style="left:123.5px;top:1436px;width:3px;height:3px;background:#e9541f;border-radius:2px"></div>
<div style="left:221px;top:1436px;width:3px;height:3px;background:#e9541f;border-radius:2px"></div>
<div style="left:226px;top:1436px;width:3px;height:3px;background:#e9541f;border-radius:2px"></div>
<div style="left:323.5px;top:1436px;width:3px;height:3px;background:#e9541f;border-radius:2px"></div>
<div style="left:373.5px;top:1436px;width:3px;height:3px;background:#e9541f;border-radius:2px"></div>
<div style="left:423.5px;top:1436px;width:3px;height:3px;background:#e9541f;border-radius:2px"></div>
<div style="left:771px;top:1436px;width:3px;height:3px;background:#e9541f;border-radius:2px"></div>
<div style="left:776px;top:1436px;width:3px;height:3px;background:#e9541f;border-radius:2px"></div>
<div style="left:823.5px;top:1436px;width:3px;height:3px;background:#e9541f;border-radius:2px"></div>
<div style="left:873.5px;top:1436px;width:3px;height:3px;background:#e9541f;border-radius:2px"></div>
<div style="left:923.5px;top:1436px;width:3px;height:3px;background:#e9541f;border-radius:2px"></div>
<div style="left:973.5px;top:1436px;width:3px;height:3px;background:#e9541f;border-radius:2px"></div>
<div style="left:1023.5px;top:1436px;width:3px;height:3px;background:#e9541f;border-radius:2px"></div>
<div style="left:2518px;top:1395px;width:24px;height:30px;background:#5a5954;"></div>
<div style="left:2523px;top:1406px;width:4.5px;height:4.5px;background:#fff;border-radius:3px"></div>
<div style="left:2523px;top:1414px;width:4.5px;height:4.5px;background:#fff;border-radius:3px"></div>
<div style="left:2523px;top:1422px;width:4.5px;height:4.5px;background:#fff;border-radius:3px"></div>
<div style="left:2531px;top:1406px;width:4.5px;height:4.5px;background:#fff;border-radius:3px"></div>
<div style="left:2531px;top:1414px;width:4.5px;height:4.5px;background:#fff;border-radius:3px"></div>
<div style="left:2531px;top:1422px;width:4.5px;height:4.5px;background:#fff;border-radius:3px"></div>
<div style="left:2539px;top:1406px;width:4.5px;height:4.5px;background:#fff;border-radius:3px"></div>
<div style="left:2539px;top:1414px;width:4.5px;height:4.5px;background:#fff;border-radius:3px"></div>
<div style="left:2539px;top:1422px;width:4.5px;height:4.5px;background:#fff;border-radius:3px"></div>
</div></body></html>
